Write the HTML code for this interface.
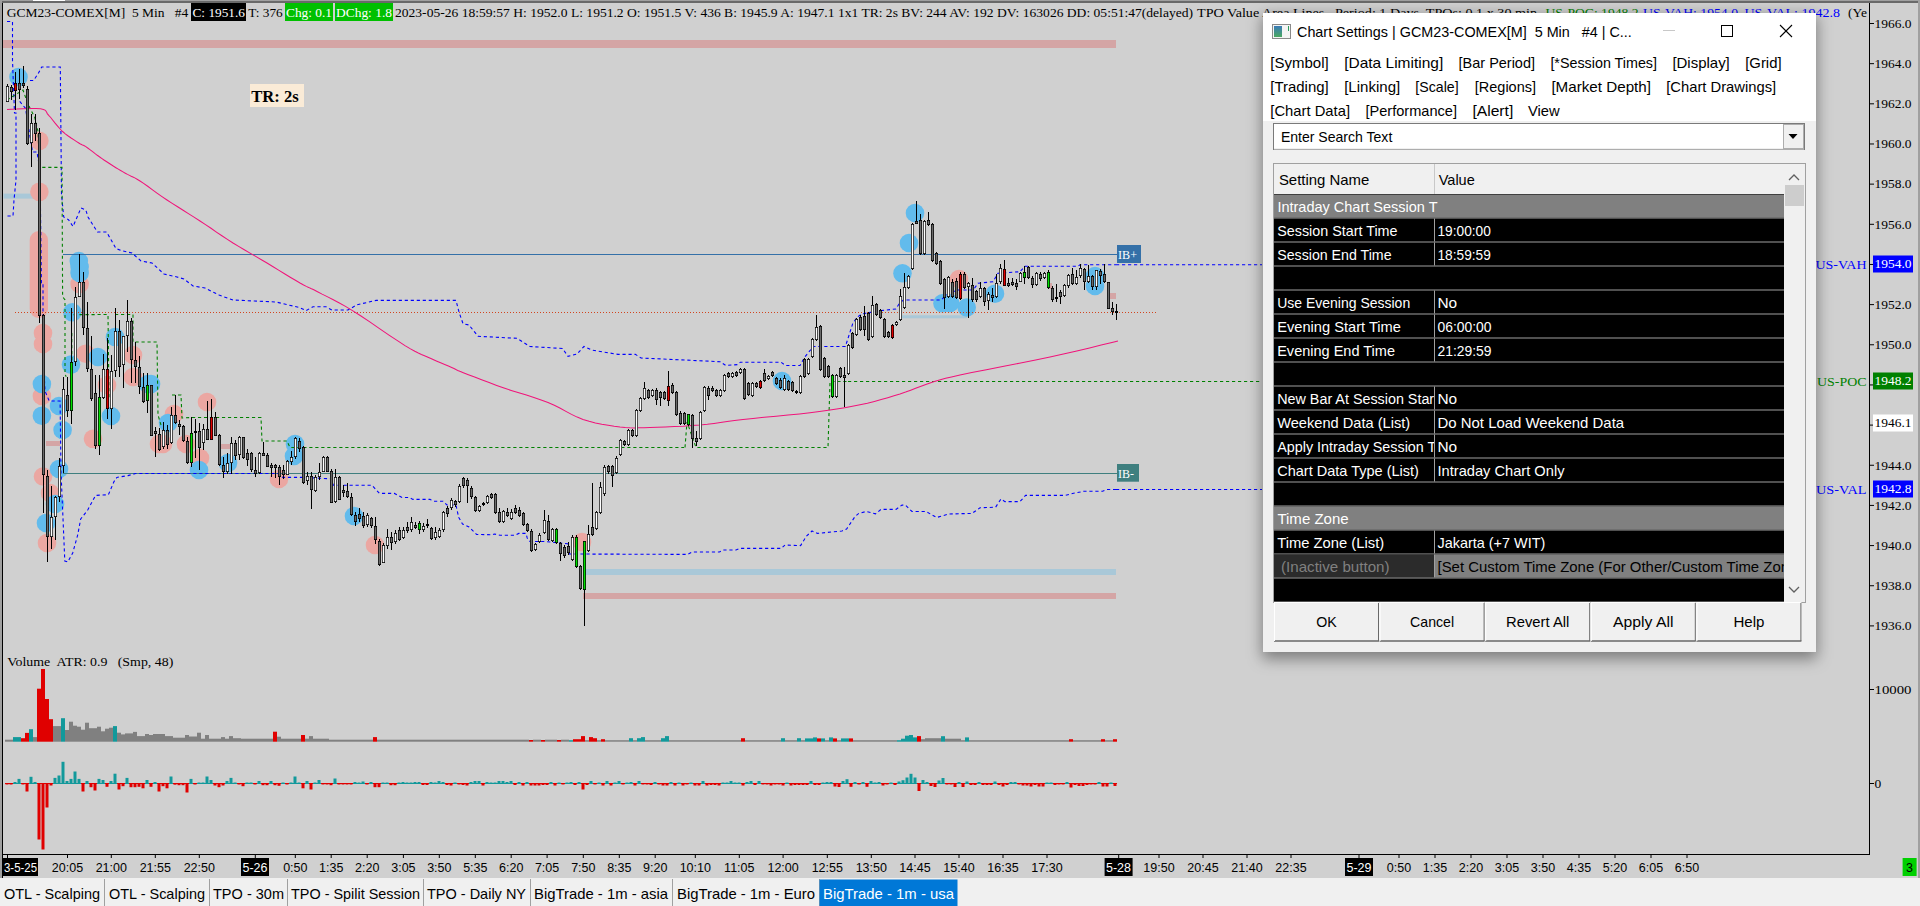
<!DOCTYPE html>
<html><head><meta charset="utf-8"><title>Chart</title>
<style>html,body{margin:0;padding:0;background:#d0d0d0;overflow:hidden;width:1920px;height:906px}</style>
</head><body>
<svg width="1920" height="906" viewBox="0 0 1920 906" style="display:block">
<rect x="0" y="0" width="1920" height="906" fill="#d0d0d0" />
<rect x="0" y="0" width="1920" height="1" fill="#a0a0a0" />
<rect x="0" y="1" width="1920" height="2" fill="#696969" />
<rect x="33" y="0" width="32" height="1" fill="#ffffff" />
<rect x="0" y="0" width="2" height="878" fill="#a0a0a0" />
<rect x="2" y="3" width="1" height="875" fill="#000" />
<rect x="1918" y="0" width="2" height="878" fill="#a0a0a0" />
<rect x="3" y="40" width="1113" height="8" fill="#d4a5a5" />
<rect x="3.5" y="193.6" width="34.5" height="5" fill="#a9c8d8" />
<rect x="583" y="569" width="533" height="6" fill="#a9c8d8" />
<rect x="583" y="593" width="533" height="6" fill="#d4a5a5" />
<rect x="900" y="315.3" width="67" height="3" fill="#a9c8d8" />
<rect x="46" y="441" width="14" height="5" fill="#d4a5a5" />
<rect x="221" y="444" width="9" height="5" fill="#d4a5a5" />
<rect x="1049" y="283" width="3" height="6" fill="#d4a5a5" />
<rect x="1109" y="293" width="7" height="6" fill="#d4a5a5" />
<circle cx="39.4" cy="140.8" r="9.3" fill="#eba7a2"/>
<circle cx="39.4" cy="191.8" r="9.3" fill="#eba7a2"/>
<circle cx="43" cy="333" r="9.3" fill="#eba7a2"/>
<circle cx="43" cy="344" r="9.3" fill="#eba7a2"/>
<circle cx="85.7" cy="353.7" r="9.3" fill="#eba7a2"/>
<circle cx="41.9" cy="396" r="9.3" fill="#eba7a2"/>
<circle cx="93" cy="438.8" r="9.3" fill="#eba7a2"/>
<circle cx="107" cy="385" r="9.3" fill="#eba7a2"/>
<circle cx="133" cy="355" r="9.3" fill="#eba7a2"/>
<circle cx="133" cy="377" r="9.3" fill="#eba7a2"/>
<circle cx="43" cy="476.5" r="9.3" fill="#eba7a2"/>
<circle cx="50" cy="493" r="9.3" fill="#eba7a2"/>
<circle cx="47" cy="543" r="9.3" fill="#eba7a2"/>
<circle cx="159" cy="444" r="9.3" fill="#eba7a2"/>
<circle cx="174" cy="414" r="9.3" fill="#eba7a2"/>
<circle cx="163" cy="444" r="9.3" fill="#eba7a2"/>
<circle cx="186" cy="444" r="9.3" fill="#eba7a2"/>
<circle cx="207" cy="402" r="9.3" fill="#eba7a2"/>
<circle cx="200" cy="458" r="9.3" fill="#eba7a2"/>
<circle cx="279" cy="479" r="9.3" fill="#eba7a2"/>
<circle cx="375" cy="545" r="9.3" fill="#eba7a2"/>
<circle cx="582" cy="542" r="9.3" fill="#eba7a2"/>
<circle cx="959" cy="279" r="9.3" fill="#eba7a2"/>
<circle cx="79.6" cy="284" r="9.3" fill="#eba7a2"/>
<rect x="29.7" y="231" width="18.3" height="87" fill="#eba7a2" rx="9"/>
<circle cx="18.5" cy="77" r="9.3" fill="#62bbec"/>
<circle cx="79.6" cy="267" r="9.3" fill="#62bbec"/>
<circle cx="79.6" cy="273" r="9.3" fill="#62bbec"/>
<circle cx="78.8" cy="261" r="9.3" fill="#62bbec"/>
<circle cx="72.3" cy="312.3" r="9.3" fill="#62bbec"/>
<circle cx="71" cy="364.6" r="9.3" fill="#62bbec"/>
<circle cx="41.9" cy="384" r="9.3" fill="#62bbec"/>
<circle cx="41.9" cy="415.7" r="9.3" fill="#62bbec"/>
<circle cx="62.6" cy="430" r="9.3" fill="#62bbec"/>
<circle cx="59" cy="469" r="9.3" fill="#62bbec"/>
<circle cx="59" cy="406" r="9.3" fill="#62bbec"/>
<circle cx="55" cy="504" r="9.3" fill="#62bbec"/>
<circle cx="46" cy="523" r="9.3" fill="#62bbec"/>
<circle cx="115" cy="337" r="9.3" fill="#62bbec"/>
<circle cx="97.9" cy="357" r="9.3" fill="#62bbec"/>
<circle cx="148" cy="384" r="9.3" fill="#62bbec"/>
<circle cx="111" cy="416" r="9.3" fill="#62bbec"/>
<circle cx="151" cy="384" r="9.3" fill="#62bbec"/>
<circle cx="168" cy="423" r="9.3" fill="#62bbec"/>
<circle cx="199" cy="470" r="9.3" fill="#62bbec"/>
<circle cx="228" cy="463" r="9.3" fill="#62bbec"/>
<circle cx="295" cy="444" r="9.3" fill="#62bbec"/>
<circle cx="294" cy="456" r="9.3" fill="#62bbec"/>
<circle cx="354" cy="516" r="9.3" fill="#62bbec"/>
<circle cx="782" cy="381" r="9.3" fill="#62bbec"/>
<circle cx="915" cy="213" r="9.3" fill="#62bbec"/>
<circle cx="909" cy="243" r="9.3" fill="#62bbec"/>
<circle cx="902.5" cy="273.3" r="9.3" fill="#62bbec"/>
<circle cx="942.5" cy="303.3" r="9.3" fill="#62bbec"/>
<circle cx="966.7" cy="307.5" r="9.3" fill="#62bbec"/>
<circle cx="995" cy="293.7" r="9.3" fill="#62bbec"/>
<circle cx="1095" cy="276" r="9.3" fill="#62bbec"/>
<circle cx="1095" cy="286" r="9.3" fill="#62bbec"/>
<circle cx="950" cy="303" r="9.3" fill="#62bbec"/>
<line x1="63" y1="254.5" x2="1117" y2="254.5" stroke="#3470a8" stroke-width="1" />
<line x1="63" y1="473.5" x2="1117" y2="473.5" stroke="#3f7f7f" stroke-width="1" />
<line x1="15" y1="312.5" x2="1156" y2="312.5" stroke="#d2451e" stroke-width="1" stroke-dasharray="1,2"/>
<line x1="1116" y1="264.7" x2="1262" y2="264.7" stroke="#0000ff" stroke-width="1.1" stroke-dasharray="3.2,2.8"/>
<line x1="1116" y1="489.5" x2="1262" y2="489.5" stroke="#0000ff" stroke-width="1.1" stroke-dasharray="3.2,2.8"/>
<line x1="848" y1="381.5" x2="1262" y2="381.5" stroke="#008000" stroke-width="1.1" stroke-dasharray="3.2,2.8"/>
<polyline points="7,21.5 12.5,21.5 12.5,60 14.5,113 16,113 16,180 14,200 13,216 7,216" fill="none" stroke="#0000ff" stroke-width="1.1" stroke-dasharray="3.2,2.8"/>
<polyline points="30,80.5 33.6,80.5 38.2,73.5 41.7,67 60.3,67 61.5,194 63.7,217 68.4,219.6 73,226.5 81,208 85.8,210 88,217 97.4,232 106.6,232 116,248.6 122.9,251 132,253 141,261 152,263 164,274 177,277 184,279 193,286 205,288 219,295 233,300 276,302 300,307.7 306,310.6 313,306.8 326,306.8 332,310 348,310 357,304.8 376,300.4 456,300.4 459,312 463,323.7 469,325 478,336.3 517,338.3 530,346.5 562.5,348.5 568,356.4 577,354 584,346.5 591.7,350 618,354.4 635.4,354.4 641,358 720,361.7 725.8,365.5 737.5,364.6 740.4,362.2 781,362.2 785.6,365.5 800,365.5 804.6,357.3 813.3,346.5 845.4,346.5 852.7,323.7 857,317.3 861.7,314 879,310.8 895.8,309 899,304 903.3,300 941,300 946.7,295 956.7,290 973.3,290 978,283.3 993,281.7 998,273.3 1020,271.7 1025,266.3 1078,266.3 1080,264.7 1116,264.7" fill="none" stroke="#0000ff" stroke-width="1.1" stroke-dasharray="3.2,2.8"/>
<polyline points="19.7,101.4 25.5,108.3 32.5,152 37,152 40,170 41.4,283 43,283 43,372 44.3,376.8 45,391 49.2,401 60.1,401 61,471.7 64.8,561 67.8,562 72.7,553 77.7,535 80.7,519 87.7,510 95.6,495.4 108.4,494.7 114,481.6 116.9,477.4 128,475.6 135.6,473.5 278,473.5 282.8,477.4 302.5,477.4 330.6,478.75 333.4,485.3 372,485.3 379.4,493.4 394.4,493.4 402,497.5 409.4,497.5 413,499.4 430,499.4 433.8,501.25 443,501.25 447,505 456,505 457,510 458.8,517.5 462.5,524 469,527 476.6,534.4 492.5,534.8 494.4,534 500,535.3 515,535.3 518.8,533.4 526,533.4 527.2,538 530,541.5 545,541.5 567.5,543.75 569.4,554 687.5,554.4 692.2,552 719.4,552 723,550 736,550 740,548.4 781.3,548.4 785,545 800.6,545.6 806.3,536.3 812,531 817.5,533.4 842,531 846.6,529 855,516.6 858.8,513.4 866,511.5 875.6,513.8 881,509.4 896,509.4 902,505 905.6,505.3 912,511.5 926,511.5 936.6,517.5 948.8,514 972,513.4 980,507.8 995.6,507.2 1001,499 1005,501.6 1020,501.6 1025.6,495.4 1065,495.4 1072.5,493.5 1083.8,491.3 1102.5,491.3 1107,489.5 1116,489.5" fill="none" stroke="#0000ff" stroke-width="1.1" stroke-dasharray="3.2,2.8"/>
<polyline points="7,100 23,90 27.8,103.7 34.8,117.6 38,131.5 39.4,167.4 62,167.4 62.6,296.5 65,300 65,374 66.2,376.8" fill="none" stroke="#008000" stroke-width="1.1" stroke-dasharray="3.2,2.8"/>
<polyline points="71.8,333 71.8,374" fill="none" stroke="#008000" stroke-width="1.1" stroke-dasharray="3.2,2.8"/>
<polyline points="73.5,314.7 108,314.5 109,400" fill="none" stroke="#008000" stroke-width="1.1" stroke-dasharray="3.2,2.8"/>
<polyline points="115,314.5 133,314.5 133,342 157,342 158,415 161,425" fill="none" stroke="#008000" stroke-width="1.1" stroke-dasharray="3.2,2.8"/>
<polyline points="172,395 181,395 182,418 191,417.5 261,417.5 262,441 287,441 290,447.5 684,447.5" fill="none" stroke="#008000" stroke-width="1.1" stroke-dasharray="3.2,2.8"/>
<polyline points="685,447.5 687,422 696,447.5 828,447.5 830,381.5 848,381.5" fill="none" stroke="#008000" stroke-width="1.1" stroke-dasharray="3.2,2.8"/>
<polyline points="7.0,109.5 11.0,109.3 16.7,109.1 23.3,108.7 30.0,108.5 36.1,108.5 40.6,108.8 43.4,109.4 45.0,110.1 45.9,111.0 46.5,112.1 47.3,113.6 48.7,115.3 50.7,117.5 52.8,120.2 55.1,123.1 57.6,126.1 60.1,129.0 62.6,131.5 65.3,133.8 68.2,136.0 71.1,138.0 74.0,139.9 76.6,141.6 78.8,143.0 80.4,144.0 81.6,144.5 82.4,144.9 83.3,145.2 84.3,145.7 85.8,146.6 87.7,148.0 89.9,149.6 92.3,151.4 94.8,153.4 97.3,155.3 99.7,157.0 102.0,158.6 104.3,160.2 106.7,161.8 109.0,163.3 111.3,164.8 113.6,166.3 115.9,167.7 118.3,169.1 120.6,170.5 123.0,171.9 125.3,173.2 127.5,174.4 129.5,175.4 131.2,176.3 132.9,177.0 134.8,177.9 137.1,179.2 140.0,181.0 143.6,183.4 147.7,186.3 152.2,189.6 157.0,193.1 162.0,196.6 167.0,200.0 172.2,203.4 177.6,206.8 183.1,210.3 188.8,213.9 194.4,217.4 200.0,221.0 205.5,224.6 211.0,228.3 216.4,232.1 221.9,235.8 227.4,239.4 233.0,243.0 238.6,246.4 244.3,249.8 250.0,253.1 255.7,256.4 261.4,259.7 267.0,263.0 272.7,266.5 278.6,270.1 284.5,273.7 290.2,277.2 295.4,280.3 300.0,283.0 303.6,285.0 306.3,286.4 308.6,287.4 310.9,288.5 313.8,289.8 317.5,291.7 322.1,294.1 327.2,296.6 332.8,299.5 338.9,302.7 345.5,306.4 352.5,310.6 360.6,315.8 369.8,321.9 379.5,328.6 389.0,335.1 397.8,340.9 405.0,345.6 410.5,348.9 414.8,351.3 418.3,353.0 421.4,354.4 424.5,355.7 428.0,357.3 432.0,359.1 436.3,361.0 440.6,362.8 444.7,364.5 448.4,366.1 451.7,367.5 454.0,368.5 455.4,369.2 456.4,369.8 457.7,370.4 459.8,371.3 463.3,372.7 468.4,374.7 474.6,377.1 481.6,379.8 489.1,382.6 496.7,385.4 504.0,388.0 511.2,390.4 518.8,392.8 526.4,395.1 533.9,397.5 541.1,400.0 548.0,402.5 554.3,405.3 560.3,408.3 565.9,411.4 571.5,414.4 577.2,417.1 583.0,419.4 589.1,421.3 595.4,422.9 601.8,424.2 608.1,425.3 614.2,426.3 620.0,427.0 625.2,427.5 629.8,427.8 634.2,427.9 638.8,427.8 643.9,427.7 650.0,427.5 657.3,427.3 665.4,427.0 674.2,426.6 683.1,426.2 691.8,425.6 700.0,425.0 707.3,424.3 714.0,423.4 720.4,422.5 727.1,421.5 734.5,420.4 743.0,419.4 753.0,418.4 764.2,417.3 776.1,416.2 788.0,415.1 799.5,413.9 810.0,412.7 819.4,411.5 828.3,410.3 836.7,409.0 844.7,407.7 852.4,406.3 860.0,404.8 867.4,403.2 874.4,401.4 881.2,399.6 887.8,397.7 894.0,395.8 900.0,394.0 905.6,392.1 910.7,390.2 915.6,388.3 920.4,386.5 925.1,384.7 930.0,383.0 934.3,381.6 937.8,380.5 941.2,379.4 945.6,378.3 951.5,376.9 960.0,375.0 971.8,372.6 986.4,369.7 1002.6,366.5 1019.4,363.2 1035.6,360.0 1050.0,357.0 1063.4,354.0 1076.8,350.9 1089.6,347.9 1101.2,345.1 1110.9,342.7 1118,341" fill="none" stroke="#f0147a" stroke-width="1.05" />
<rect x="7" y="84" width="1" height="18" fill="#000"/>
<rect x="6" y="86" width="3" height="16" fill="#000"/>
<rect x="6.7" y="86.8" width="1.6" height="14.4" fill="#ffffff"/>
<rect x="11" y="85" width="1" height="15" fill="#000"/>
<rect x="10" y="87" width="3" height="5" fill="#000"/>
<rect x="10.7" y="87.8" width="1.6" height="3.4" fill="#6a6a6a"/>
<rect x="15" y="72" width="1" height="38" fill="#000"/>
<rect x="14" y="83" width="3" height="8" fill="#000"/>
<rect x="14.7" y="83.8" width="1.6" height="6.4" fill="#e00000"/>
<rect x="19" y="69" width="1" height="30" fill="#000"/>
<rect x="18" y="83" width="3" height="7" fill="#000"/>
<rect x="18.7" y="83.8" width="1.6" height="5.4" fill="#6a6a6a"/>
<rect x="23" y="66" width="1" height="22" fill="#000"/>
<rect x="22" y="83" width="3" height="3" fill="#000"/>
<rect x="22.7" y="83.8" width="1.6" height="1.4" fill="#6a6a6a"/>
<rect x="27" y="86" width="1" height="59" fill="#000"/>
<rect x="26" y="89" width="3" height="55" fill="#000"/>
<rect x="26.7" y="89.8" width="1.6" height="53.4" fill="#6a6a6a"/>
<rect x="31" y="114" width="1" height="53" fill="#000"/>
<rect x="30" y="123" width="3" height="20" fill="#000"/>
<rect x="30.7" y="123.8" width="1.6" height="18.4" fill="#ffffff"/>
<rect x="35" y="114" width="1" height="27" fill="#000"/>
<rect x="34" y="123" width="3" height="11" fill="#000"/>
<rect x="34.7" y="123.8" width="1.6" height="9.4" fill="#6a6a6a"/>
<rect x="39" y="128" width="1" height="195" fill="#000"/>
<rect x="38" y="133" width="3" height="183" fill="#000"/>
<rect x="38.7" y="133.8" width="1.6" height="181.4" fill="#6a6a6a"/>
<rect x="43" y="314" width="1" height="199" fill="#000"/>
<rect x="42" y="315" width="3" height="160" fill="#000"/>
<rect x="42.7" y="315.8" width="1.6" height="158.4" fill="#6a6a6a"/>
<rect x="47" y="470" width="1" height="92" fill="#000"/>
<rect x="46" y="476" width="3" height="61" fill="#000"/>
<rect x="46.7" y="476.8" width="1.6" height="59.4" fill="#6a6a6a"/>
<rect x="51" y="486" width="1" height="63" fill="#000"/>
<rect x="50" y="517" width="3" height="20" fill="#000"/>
<rect x="50.7" y="517.8" width="1.6" height="18.4" fill="#ffffff"/>
<rect x="55" y="496" width="1" height="44" fill="#000"/>
<rect x="54" y="497" width="3" height="20" fill="#000"/>
<rect x="54.7" y="497.8" width="1.6" height="18.4" fill="#ffffff"/>
<rect x="59" y="458" width="1" height="44" fill="#000"/>
<rect x="58" y="466" width="3" height="31" fill="#000"/>
<rect x="58.7" y="466.8" width="1.6" height="29.4" fill="#ffffff"/>
<rect x="63" y="377" width="1" height="96" fill="#000"/>
<rect x="62" y="389" width="3" height="77" fill="#000"/>
<rect x="62.7" y="389.8" width="1.6" height="75.4" fill="#ffffff"/>
<rect x="67" y="377" width="1" height="40" fill="#000"/>
<rect x="66" y="395" width="3" height="16" fill="#000"/>
<rect x="66.7" y="395.8" width="1.6" height="14.4" fill="#6a6a6a"/>
<rect x="71" y="308" width="1" height="116" fill="#000"/>
<rect x="70" y="362" width="3" height="49" fill="#000"/>
<rect x="70.7" y="362.8" width="1.6" height="47.4" fill="#00e000"/>
<rect x="75" y="287" width="1" height="79" fill="#000"/>
<rect x="74" y="297" width="3" height="65" fill="#000"/>
<rect x="74.7" y="297.8" width="1.6" height="63.4" fill="#ffffff"/>
<rect x="79" y="254" width="1" height="43" fill="#000"/>
<rect x="78" y="282" width="3" height="15" fill="#000"/>
<rect x="78.7" y="282.8" width="1.6" height="13.4" fill="#ffffff"/>
<rect x="83" y="272" width="1" height="63" fill="#000"/>
<rect x="82" y="282" width="3" height="46" fill="#000"/>
<rect x="82.7" y="282.8" width="1.6" height="44.4" fill="#6a6a6a"/>
<rect x="87" y="302" width="1" height="70" fill="#000"/>
<rect x="86" y="328" width="3" height="41" fill="#000"/>
<rect x="86.7" y="328.8" width="1.6" height="39.4" fill="#6a6a6a"/>
<rect x="91" y="336" width="1" height="65" fill="#000"/>
<rect x="90" y="369" width="3" height="30" fill="#000"/>
<rect x="90.7" y="369.8" width="1.6" height="28.4" fill="#6a6a6a"/>
<rect x="95" y="375" width="1" height="74" fill="#000"/>
<rect x="94" y="393" width="3" height="53" fill="#000"/>
<rect x="94.7" y="393.8" width="1.6" height="51.4" fill="#6a6a6a"/>
<rect x="99" y="375" width="1" height="80" fill="#000"/>
<rect x="98" y="397" width="3" height="49" fill="#000"/>
<rect x="98.7" y="397.8" width="1.6" height="47.4" fill="#00e000"/>
<rect x="103" y="354" width="1" height="45" fill="#000"/>
<rect x="102" y="369" width="3" height="29" fill="#000"/>
<rect x="102.7" y="369.8" width="1.6" height="27.4" fill="#ffffff"/>
<rect x="107" y="338" width="1" height="81" fill="#000"/>
<rect x="106" y="369" width="3" height="40" fill="#000"/>
<rect x="106.7" y="369.8" width="1.6" height="38.4" fill="#e00000"/>
<rect x="111" y="355" width="1" height="74" fill="#000"/>
<rect x="110" y="371" width="3" height="38" fill="#000"/>
<rect x="110.7" y="371.8" width="1.6" height="36.4" fill="#ffffff"/>
<rect x="115" y="308" width="1" height="69" fill="#000"/>
<rect x="114" y="331" width="3" height="40" fill="#000"/>
<rect x="114.7" y="331.8" width="1.6" height="38.4" fill="#ffffff"/>
<rect x="119" y="320" width="1" height="57" fill="#000"/>
<rect x="118" y="331" width="3" height="36" fill="#000"/>
<rect x="118.7" y="331.8" width="1.6" height="34.4" fill="#6a6a6a"/>
<rect x="123" y="336" width="1" height="52" fill="#000"/>
<rect x="122" y="336" width="3" height="29" fill="#000"/>
<rect x="122.7" y="336.8" width="1.6" height="27.4" fill="#ffffff"/>
<rect x="127" y="300" width="1" height="52" fill="#000"/>
<rect x="126" y="321" width="3" height="15" fill="#000"/>
<rect x="126.7" y="321.8" width="1.6" height="13.4" fill="#ffffff"/>
<rect x="131" y="318" width="1" height="65" fill="#000"/>
<rect x="130" y="321" width="3" height="39" fill="#000"/>
<rect x="130.7" y="321.8" width="1.6" height="37.4" fill="#6a6a6a"/>
<rect x="135" y="342" width="1" height="41" fill="#000"/>
<rect x="134" y="360" width="3" height="7" fill="#000"/>
<rect x="134.7" y="360.8" width="1.6" height="5.4" fill="#6a6a6a"/>
<rect x="139" y="356" width="1" height="38" fill="#000"/>
<rect x="138" y="367" width="3" height="20" fill="#000"/>
<rect x="138.7" y="367.8" width="1.6" height="18.4" fill="#6a6a6a"/>
<rect x="143" y="373" width="1" height="30" fill="#000"/>
<rect x="142" y="387" width="3" height="15" fill="#000"/>
<rect x="142.7" y="387.8" width="1.6" height="13.4" fill="#6a6a6a"/>
<rect x="147" y="373" width="1" height="40" fill="#000"/>
<rect x="146" y="385" width="3" height="16" fill="#000"/>
<rect x="146.7" y="385.8" width="1.6" height="14.4" fill="#00e000"/>
<rect x="151" y="385" width="1" height="51" fill="#000"/>
<rect x="150" y="385" width="3" height="51" fill="#000"/>
<rect x="150.7" y="385.8" width="1.6" height="49.4" fill="#6a6a6a"/>
<rect x="155" y="427" width="1" height="30" fill="#000"/>
<rect x="154" y="431" width="3" height="3" fill="#000"/>
<rect x="154.7" y="431.8" width="1.6" height="1.4" fill="#6a6a6a"/>
<rect x="159" y="428" width="1" height="23" fill="#000"/>
<rect x="158" y="434" width="3" height="16" fill="#000"/>
<rect x="158.7" y="434.8" width="1.6" height="14.4" fill="#6a6a6a"/>
<rect x="163" y="422" width="1" height="27" fill="#000"/>
<rect x="162" y="430" width="3" height="17" fill="#000"/>
<rect x="162.7" y="430.8" width="1.6" height="15.4" fill="#ffffff"/>
<rect x="167" y="425" width="1" height="24" fill="#000"/>
<rect x="166" y="430" width="3" height="15" fill="#000"/>
<rect x="166.7" y="430.8" width="1.6" height="13.4" fill="#6a6a6a"/>
<rect x="171" y="407" width="1" height="37" fill="#000"/>
<rect x="170" y="415" width="3" height="28" fill="#000"/>
<rect x="170.7" y="415.8" width="1.6" height="26.4" fill="#ffffff"/>
<rect x="175" y="395" width="1" height="29" fill="#000"/>
<rect x="174" y="415" width="3" height="8" fill="#000"/>
<rect x="174.7" y="415.8" width="1.6" height="6.4" fill="#6a6a6a"/>
<rect x="179" y="420" width="1" height="15" fill="#000"/>
<rect x="178" y="424" width="3" height="3" fill="#000"/>
<rect x="178.7" y="424.8" width="1.6" height="1.4" fill="#6a6a6a"/>
<rect x="183" y="425" width="1" height="17" fill="#000"/>
<rect x="182" y="426" width="3" height="15" fill="#000"/>
<rect x="182.7" y="426.8" width="1.6" height="13.4" fill="#6a6a6a"/>
<rect x="187" y="437" width="1" height="27" fill="#000"/>
<rect x="186" y="441" width="3" height="22" fill="#000"/>
<rect x="186.7" y="441.8" width="1.6" height="20.4" fill="#6a6a6a"/>
<rect x="191" y="417" width="1" height="50" fill="#000"/>
<rect x="190" y="433" width="3" height="30" fill="#000"/>
<rect x="190.7" y="433.8" width="1.6" height="28.4" fill="#00e000"/>
<rect x="195" y="419" width="1" height="39" fill="#000"/>
<rect x="194" y="431" width="3" height="2" fill="#000"/>
<rect x="199" y="423" width="1" height="47" fill="#000"/>
<rect x="198" y="431" width="3" height="17" fill="#000"/>
<rect x="198.7" y="431.8" width="1.6" height="15.4" fill="#6a6a6a"/>
<rect x="203" y="424" width="1" height="26" fill="#000"/>
<rect x="202" y="429" width="3" height="14" fill="#000"/>
<rect x="202.7" y="429.8" width="1.6" height="12.4" fill="#ffffff"/>
<rect x="207" y="401" width="1" height="39" fill="#000"/>
<rect x="206" y="429" width="3" height="11" fill="#000"/>
<rect x="206.7" y="429.8" width="1.6" height="9.4" fill="#6a6a6a"/>
<rect x="211" y="399" width="1" height="41" fill="#000"/>
<rect x="210" y="417" width="3" height="23" fill="#000"/>
<rect x="210.7" y="417.8" width="1.6" height="21.4" fill="#e00000"/>
<rect x="215" y="412" width="1" height="24" fill="#000"/>
<rect x="214" y="417" width="3" height="19" fill="#000"/>
<rect x="214.7" y="417.8" width="1.6" height="17.4" fill="#6a6a6a"/>
<rect x="219" y="434" width="1" height="32" fill="#000"/>
<rect x="218" y="435" width="3" height="30" fill="#000"/>
<rect x="218.7" y="435.8" width="1.6" height="28.4" fill="#6a6a6a"/>
<rect x="223" y="457" width="1" height="21" fill="#000"/>
<rect x="222" y="465" width="3" height="7" fill="#000"/>
<rect x="222.7" y="465.8" width="1.6" height="5.4" fill="#6a6a6a"/>
<rect x="227" y="453" width="1" height="21" fill="#000"/>
<rect x="226" y="463" width="3" height="9" fill="#000"/>
<rect x="226.7" y="463.8" width="1.6" height="7.4" fill="#ffffff"/>
<rect x="231" y="437" width="1" height="37" fill="#000"/>
<rect x="230" y="443" width="3" height="20" fill="#000"/>
<rect x="230.7" y="443.8" width="1.6" height="18.4" fill="#ffffff"/>
<rect x="235" y="440" width="1" height="20" fill="#000"/>
<rect x="234" y="443" width="3" height="13" fill="#000"/>
<rect x="234.7" y="443.8" width="1.6" height="11.4" fill="#6a6a6a"/>
<rect x="239" y="436" width="1" height="24" fill="#000"/>
<rect x="238" y="437" width="3" height="18" fill="#000"/>
<rect x="238.7" y="437.8" width="1.6" height="16.4" fill="#ffffff"/>
<rect x="243" y="437" width="1" height="22" fill="#000"/>
<rect x="242" y="437" width="3" height="21" fill="#000"/>
<rect x="242.7" y="437.8" width="1.6" height="19.4" fill="#6a6a6a"/>
<rect x="247" y="449" width="1" height="17" fill="#000"/>
<rect x="246" y="453" width="3" height="7" fill="#000"/>
<rect x="246.7" y="453.8" width="1.6" height="5.4" fill="#6a6a6a"/>
<rect x="251" y="452" width="1" height="20" fill="#000"/>
<rect x="250" y="453" width="3" height="17" fill="#000"/>
<rect x="250.7" y="453.8" width="1.6" height="15.4" fill="#6a6a6a"/>
<rect x="255" y="457" width="1" height="20" fill="#000"/>
<rect x="254" y="470" width="3" height="4" fill="#000"/>
<rect x="254.7" y="470.8" width="1.6" height="2.4" fill="#6a6a6a"/>
<rect x="259" y="452" width="1" height="22" fill="#000"/>
<rect x="258" y="453" width="3" height="20" fill="#000"/>
<rect x="258.7" y="453.8" width="1.6" height="18.4" fill="#ffffff"/>
<rect x="263" y="442" width="1" height="14" fill="#000"/>
<rect x="262" y="453" width="3" height="3" fill="#000"/>
<rect x="262.7" y="453.8" width="1.6" height="1.4" fill="#6a6a6a"/>
<rect x="267" y="453" width="1" height="14" fill="#000"/>
<rect x="266" y="455" width="3" height="12" fill="#000"/>
<rect x="266.7" y="455.8" width="1.6" height="10.4" fill="#6a6a6a"/>
<rect x="271" y="463" width="1" height="14" fill="#000"/>
<rect x="270" y="465" width="3" height="3" fill="#000"/>
<rect x="270.7" y="465.8" width="1.6" height="1.4" fill="#6a6a6a"/>
<rect x="275" y="464" width="1" height="14" fill="#000"/>
<rect x="274" y="465" width="3" height="3" fill="#000"/>
<rect x="274.7" y="465.8" width="1.6" height="1.4" fill="#6a6a6a"/>
<rect x="279" y="465" width="1" height="20" fill="#000"/>
<rect x="278" y="467" width="3" height="10" fill="#000"/>
<rect x="278.7" y="467.8" width="1.6" height="8.4" fill="#6a6a6a"/>
<rect x="283" y="465" width="1" height="14" fill="#000"/>
<rect x="282" y="470" width="3" height="5" fill="#000"/>
<rect x="282.7" y="470.8" width="1.6" height="3.4" fill="#6a6a6a"/>
<rect x="287" y="460" width="1" height="15" fill="#000"/>
<rect x="286" y="461" width="3" height="14" fill="#000"/>
<rect x="286.7" y="461.8" width="1.6" height="12.4" fill="#ffffff"/>
<rect x="291" y="451" width="1" height="14" fill="#000"/>
<rect x="290" y="457" width="3" height="5" fill="#000"/>
<rect x="290.7" y="457.8" width="1.6" height="3.4" fill="#ffffff"/>
<rect x="295" y="437" width="1" height="22" fill="#000"/>
<rect x="294" y="438" width="3" height="19" fill="#000"/>
<rect x="294.7" y="438.8" width="1.6" height="17.4" fill="#ffffff"/>
<rect x="299" y="438" width="1" height="14" fill="#000"/>
<rect x="298" y="441" width="3" height="8" fill="#000"/>
<rect x="298.7" y="441.8" width="1.6" height="6.4" fill="#6a6a6a"/>
<rect x="303" y="446" width="1" height="38" fill="#000"/>
<rect x="302" y="447" width="3" height="36" fill="#000"/>
<rect x="302.7" y="447.8" width="1.6" height="34.4" fill="#6a6a6a"/>
<rect x="307" y="472" width="1" height="13" fill="#000"/>
<rect x="306" y="476" width="3" height="5" fill="#000"/>
<rect x="306.7" y="476.8" width="1.6" height="3.4" fill="#ffffff"/>
<rect x="311" y="472" width="1" height="37" fill="#000"/>
<rect x="310" y="476" width="3" height="14" fill="#000"/>
<rect x="310.7" y="476.8" width="1.6" height="12.4" fill="#6a6a6a"/>
<rect x="315" y="475" width="1" height="17" fill="#000"/>
<rect x="314" y="477" width="3" height="14" fill="#000"/>
<rect x="314.7" y="477.8" width="1.6" height="12.4" fill="#ffffff"/>
<rect x="319" y="463" width="1" height="17" fill="#000"/>
<rect x="318" y="472" width="3" height="5" fill="#000"/>
<rect x="318.7" y="472.8" width="1.6" height="3.4" fill="#ffffff"/>
<rect x="323" y="456" width="1" height="16" fill="#000"/>
<rect x="322" y="457" width="3" height="15" fill="#000"/>
<rect x="322.7" y="457.8" width="1.6" height="13.4" fill="#ffffff"/>
<rect x="327" y="456" width="1" height="16" fill="#000"/>
<rect x="326" y="457" width="3" height="15" fill="#000"/>
<rect x="326.7" y="457.8" width="1.6" height="13.4" fill="#6a6a6a"/>
<rect x="331" y="469" width="1" height="34" fill="#000"/>
<rect x="330" y="471" width="3" height="32" fill="#000"/>
<rect x="330.7" y="471.8" width="1.6" height="30.4" fill="#6a6a6a"/>
<rect x="335" y="469" width="1" height="34" fill="#000"/>
<rect x="334" y="477" width="3" height="25" fill="#000"/>
<rect x="334.7" y="477.8" width="1.6" height="23.4" fill="#ffffff"/>
<rect x="339" y="476" width="1" height="24" fill="#000"/>
<rect x="338" y="477" width="3" height="23" fill="#000"/>
<rect x="338.7" y="477.8" width="1.6" height="21.4" fill="#6a6a6a"/>
<rect x="343" y="485" width="1" height="12" fill="#000"/>
<rect x="342" y="490" width="3" height="3" fill="#000"/>
<rect x="342.7" y="490.8" width="1.6" height="1.4" fill="#6a6a6a"/>
<rect x="347" y="483" width="1" height="15" fill="#000"/>
<rect x="346" y="491" width="3" height="6" fill="#000"/>
<rect x="346.7" y="491.8" width="1.6" height="4.4" fill="#6a6a6a"/>
<rect x="351" y="493" width="1" height="23" fill="#000"/>
<rect x="350" y="497" width="3" height="18" fill="#000"/>
<rect x="350.7" y="497.8" width="1.6" height="16.4" fill="#6a6a6a"/>
<rect x="355" y="512" width="1" height="14" fill="#000"/>
<rect x="354" y="515" width="3" height="7" fill="#000"/>
<rect x="354.7" y="515.8" width="1.6" height="5.4" fill="#6a6a6a"/>
<rect x="359" y="508" width="1" height="14" fill="#000"/>
<rect x="358" y="514" width="3" height="5" fill="#000"/>
<rect x="358.7" y="514.8" width="1.6" height="3.4" fill="#6a6a6a"/>
<rect x="363" y="512" width="1" height="16" fill="#000"/>
<rect x="362" y="516" width="3" height="10" fill="#000"/>
<rect x="362.7" y="516.8" width="1.6" height="8.4" fill="#6a6a6a"/>
<rect x="367" y="513" width="1" height="14" fill="#000"/>
<rect x="366" y="515" width="3" height="10" fill="#000"/>
<rect x="366.7" y="515.8" width="1.6" height="8.4" fill="#ffffff"/>
<rect x="371" y="517" width="1" height="11" fill="#000"/>
<rect x="370" y="518" width="3" height="8" fill="#000"/>
<rect x="370.7" y="518.8" width="1.6" height="6.4" fill="#6a6a6a"/>
<rect x="375" y="517" width="1" height="27" fill="#000"/>
<rect x="374" y="526" width="3" height="14" fill="#000"/>
<rect x="374.7" y="526.8" width="1.6" height="12.4" fill="#6a6a6a"/>
<rect x="379" y="539" width="1" height="27" fill="#000"/>
<rect x="378" y="541" width="3" height="24" fill="#000"/>
<rect x="378.7" y="541.8" width="1.6" height="22.4" fill="#6a6a6a"/>
<rect x="383" y="543" width="1" height="20" fill="#000"/>
<rect x="382" y="545" width="3" height="18" fill="#000"/>
<rect x="382.7" y="545.8" width="1.6" height="16.4" fill="#ffffff"/>
<rect x="387" y="529" width="1" height="20" fill="#000"/>
<rect x="386" y="537" width="3" height="9" fill="#000"/>
<rect x="386.7" y="537.8" width="1.6" height="7.4" fill="#ffffff"/>
<rect x="391" y="532" width="1" height="18" fill="#000"/>
<rect x="390" y="537" width="3" height="6" fill="#000"/>
<rect x="390.7" y="537.8" width="1.6" height="4.4" fill="#6a6a6a"/>
<rect x="395" y="530" width="1" height="14" fill="#000"/>
<rect x="394" y="533" width="3" height="9" fill="#000"/>
<rect x="394.7" y="533.8" width="1.6" height="7.4" fill="#ffffff"/>
<rect x="399" y="527" width="1" height="14" fill="#000"/>
<rect x="398" y="530" width="3" height="10" fill="#000"/>
<rect x="398.7" y="530.8" width="1.6" height="8.4" fill="#6a6a6a"/>
<rect x="403" y="527" width="1" height="12" fill="#000"/>
<rect x="402" y="530" width="3" height="8" fill="#000"/>
<rect x="402.7" y="530.8" width="1.6" height="6.4" fill="#ffffff"/>
<rect x="407" y="522" width="1" height="11" fill="#000"/>
<rect x="406" y="527" width="3" height="4" fill="#000"/>
<rect x="406.7" y="527.8" width="1.6" height="2.4" fill="#6a6a6a"/>
<rect x="411" y="517" width="1" height="15" fill="#000"/>
<rect x="410" y="522" width="3" height="8" fill="#000"/>
<rect x="410.7" y="522.8" width="1.6" height="6.4" fill="#ffffff"/>
<rect x="415" y="522" width="1" height="7" fill="#000"/>
<rect x="414" y="525" width="3" height="3" fill="#000"/>
<rect x="414.7" y="525.8" width="1.6" height="1.4" fill="#6a6a6a"/>
<rect x="419" y="521" width="1" height="13" fill="#000"/>
<rect x="418" y="523" width="3" height="7" fill="#000"/>
<rect x="418.7" y="523.8" width="1.6" height="5.4" fill="#00e000"/>
<rect x="423" y="523" width="1" height="9" fill="#000"/>
<rect x="422" y="526" width="3" height="4" fill="#000"/>
<rect x="422.7" y="526.8" width="1.6" height="2.4" fill="#ffffff"/>
<rect x="427" y="519" width="1" height="9" fill="#000"/>
<rect x="426" y="524" width="3" height="2" fill="#000"/>
<rect x="431" y="527" width="1" height="13" fill="#000"/>
<rect x="430" y="528" width="3" height="11" fill="#000"/>
<rect x="430.7" y="528.8" width="1.6" height="9.4" fill="#6a6a6a"/>
<rect x="435" y="527" width="1" height="13" fill="#000"/>
<rect x="434" y="532" width="3" height="6" fill="#000"/>
<rect x="434.7" y="532.8" width="1.6" height="4.4" fill="#ffffff"/>
<rect x="439" y="528" width="1" height="10" fill="#000"/>
<rect x="438" y="530" width="3" height="7" fill="#000"/>
<rect x="438.7" y="530.8" width="1.6" height="5.4" fill="#ffffff"/>
<rect x="443" y="511" width="1" height="21" fill="#000"/>
<rect x="442" y="512" width="3" height="18" fill="#000"/>
<rect x="442.7" y="512.8" width="1.6" height="16.4" fill="#ffffff"/>
<rect x="447" y="506" width="1" height="11" fill="#000"/>
<rect x="446" y="508" width="3" height="6" fill="#000"/>
<rect x="446.7" y="508.8" width="1.6" height="4.4" fill="#6a6a6a"/>
<rect x="451" y="498" width="1" height="12" fill="#000"/>
<rect x="450" y="500" width="3" height="8" fill="#000"/>
<rect x="450.7" y="500.8" width="1.6" height="6.4" fill="#ffffff"/>
<rect x="455" y="500" width="1" height="7" fill="#000"/>
<rect x="454" y="501" width="3" height="4" fill="#000"/>
<rect x="454.7" y="501.8" width="1.6" height="2.4" fill="#6a6a6a"/>
<rect x="459" y="484" width="1" height="19" fill="#000"/>
<rect x="458" y="486" width="3" height="16" fill="#000"/>
<rect x="458.7" y="486.8" width="1.6" height="14.4" fill="#ffffff"/>
<rect x="463" y="477" width="1" height="11" fill="#000"/>
<rect x="462" y="478" width="3" height="8" fill="#000"/>
<rect x="462.7" y="478.8" width="1.6" height="6.4" fill="#6a6a6a"/>
<rect x="467" y="478" width="1" height="25" fill="#000"/>
<rect x="466" y="480" width="3" height="6" fill="#000"/>
<rect x="466.7" y="480.8" width="1.6" height="4.4" fill="#6a6a6a"/>
<rect x="471" y="486" width="1" height="13" fill="#000"/>
<rect x="470" y="488" width="3" height="9" fill="#000"/>
<rect x="470.7" y="488.8" width="1.6" height="7.4" fill="#6a6a6a"/>
<rect x="475" y="496" width="1" height="16" fill="#000"/>
<rect x="474" y="497" width="3" height="14" fill="#000"/>
<rect x="474.7" y="497.8" width="1.6" height="12.4" fill="#6a6a6a"/>
<rect x="479" y="505" width="1" height="7" fill="#000"/>
<rect x="478" y="506" width="3" height="5" fill="#000"/>
<rect x="478.7" y="506.8" width="1.6" height="3.4" fill="#ffffff"/>
<rect x="483" y="502" width="1" height="4" fill="#000"/>
<rect x="482" y="503" width="3" height="2" fill="#000"/>
<rect x="487" y="495" width="1" height="9" fill="#000"/>
<rect x="486" y="496" width="3" height="7" fill="#000"/>
<rect x="486.7" y="496.8" width="1.6" height="5.4" fill="#ffffff"/>
<rect x="491" y="493" width="1" height="6" fill="#000"/>
<rect x="490" y="494" width="3" height="4" fill="#000"/>
<rect x="490.7" y="494.8" width="1.6" height="2.4" fill="#6a6a6a"/>
<rect x="495" y="493" width="1" height="21" fill="#000"/>
<rect x="494" y="494" width="3" height="19" fill="#000"/>
<rect x="494.7" y="494.8" width="1.6" height="17.4" fill="#6a6a6a"/>
<rect x="499" y="508" width="1" height="15" fill="#000"/>
<rect x="498" y="512" width="3" height="10" fill="#000"/>
<rect x="498.7" y="512.8" width="1.6" height="8.4" fill="#6a6a6a"/>
<rect x="503" y="510" width="1" height="13" fill="#000"/>
<rect x="502" y="511" width="3" height="11" fill="#000"/>
<rect x="502.7" y="511.8" width="1.6" height="9.4" fill="#ffffff"/>
<rect x="507" y="508" width="1" height="9" fill="#000"/>
<rect x="506" y="512" width="3" height="4" fill="#000"/>
<rect x="506.7" y="512.8" width="1.6" height="2.4" fill="#6a6a6a"/>
<rect x="511" y="509" width="1" height="11" fill="#000"/>
<rect x="510" y="512" width="3" height="7" fill="#000"/>
<rect x="510.7" y="512.8" width="1.6" height="5.4" fill="#ffffff"/>
<rect x="515" y="505" width="1" height="9" fill="#000"/>
<rect x="514" y="508" width="3" height="5" fill="#000"/>
<rect x="514.7" y="508.8" width="1.6" height="3.4" fill="#6a6a6a"/>
<rect x="519" y="507" width="1" height="10" fill="#000"/>
<rect x="518" y="510" width="3" height="6" fill="#000"/>
<rect x="518.7" y="510.8" width="1.6" height="4.4" fill="#6a6a6a"/>
<rect x="523" y="512" width="1" height="14" fill="#000"/>
<rect x="522" y="513" width="3" height="12" fill="#000"/>
<rect x="522.7" y="513.8" width="1.6" height="10.4" fill="#6a6a6a"/>
<rect x="527" y="523" width="1" height="9" fill="#000"/>
<rect x="526" y="524" width="3" height="7" fill="#000"/>
<rect x="526.7" y="524.8" width="1.6" height="5.4" fill="#6a6a6a"/>
<rect x="531" y="529" width="1" height="23" fill="#000"/>
<rect x="530" y="531" width="3" height="20" fill="#000"/>
<rect x="530.7" y="531.8" width="1.6" height="18.4" fill="#6a6a6a"/>
<rect x="535" y="543" width="1" height="8" fill="#000"/>
<rect x="534" y="544" width="3" height="6" fill="#000"/>
<rect x="534.7" y="544.8" width="1.6" height="4.4" fill="#ffffff"/>
<rect x="539" y="533" width="1" height="10" fill="#000"/>
<rect x="538" y="535" width="3" height="7" fill="#000"/>
<rect x="538.7" y="535.8" width="1.6" height="5.4" fill="#ffffff"/>
<rect x="544" y="510" width="1" height="24" fill="#000"/>
<rect x="543" y="520" width="3" height="13" fill="#000"/>
<rect x="543.7" y="520.8" width="1.6" height="11.4" fill="#ffffff"/>
<rect x="548" y="515" width="1" height="26" fill="#000"/>
<rect x="547" y="521" width="3" height="19" fill="#000"/>
<rect x="547.7" y="521.8" width="1.6" height="17.4" fill="#6a6a6a"/>
<rect x="552" y="528" width="1" height="14" fill="#000"/>
<rect x="551" y="529" width="3" height="12" fill="#000"/>
<rect x="551.7" y="529.8" width="1.6" height="10.4" fill="#ffffff"/>
<rect x="556" y="528" width="1" height="16" fill="#000"/>
<rect x="555" y="529" width="3" height="14" fill="#000"/>
<rect x="555.7" y="529.8" width="1.6" height="12.4" fill="#00e000"/>
<rect x="560" y="542" width="1" height="19" fill="#000"/>
<rect x="559" y="543" width="3" height="11" fill="#000"/>
<rect x="559.7" y="543.8" width="1.6" height="9.4" fill="#6a6a6a"/>
<rect x="564" y="545" width="1" height="13" fill="#000"/>
<rect x="563" y="547" width="3" height="9" fill="#000"/>
<rect x="563.7" y="547.8" width="1.6" height="7.4" fill="#6a6a6a"/>
<rect x="568" y="542" width="1" height="13" fill="#000"/>
<rect x="567" y="546" width="3" height="7" fill="#000"/>
<rect x="567.7" y="546.8" width="1.6" height="5.4" fill="#6a6a6a"/>
<rect x="572" y="535" width="1" height="26" fill="#000"/>
<rect x="571" y="537" width="3" height="23" fill="#000"/>
<rect x="571.7" y="537.8" width="1.6" height="21.4" fill="#ffffff"/>
<rect x="576" y="535" width="1" height="33" fill="#000"/>
<rect x="575" y="537" width="3" height="30" fill="#000"/>
<rect x="575.7" y="537.8" width="1.6" height="28.4" fill="#00e000"/>
<rect x="580" y="565" width="1" height="25" fill="#000"/>
<rect x="579" y="566" width="3" height="23" fill="#000"/>
<rect x="579.7" y="566.8" width="1.6" height="21.4" fill="#6a6a6a"/>
<rect x="584" y="541" width="1" height="85" fill="#000"/>
<rect x="583" y="541" width="3" height="49" fill="#000"/>
<rect x="583.7" y="541.8" width="1.6" height="47.4" fill="#00e000"/>
<rect x="588" y="525" width="1" height="27" fill="#000"/>
<rect x="587" y="534" width="3" height="17" fill="#000"/>
<rect x="587.7" y="534.8" width="1.6" height="15.4" fill="#ffffff"/>
<rect x="592" y="483" width="1" height="53" fill="#000"/>
<rect x="591" y="527" width="3" height="8" fill="#000"/>
<rect x="591.7" y="527.8" width="1.6" height="6.4" fill="#6a6a6a"/>
<rect x="596" y="511" width="1" height="19" fill="#000"/>
<rect x="595" y="512" width="3" height="17" fill="#000"/>
<rect x="595.7" y="512.8" width="1.6" height="15.4" fill="#ffffff"/>
<rect x="600" y="482" width="1" height="32" fill="#000"/>
<rect x="599" y="487" width="3" height="26" fill="#000"/>
<rect x="599.7" y="487.8" width="1.6" height="24.4" fill="#ffffff"/>
<rect x="604" y="465" width="1" height="31" fill="#000"/>
<rect x="603" y="467" width="3" height="27" fill="#000"/>
<rect x="603.7" y="467.8" width="1.6" height="25.4" fill="#ffffff"/>
<rect x="608" y="465" width="1" height="9" fill="#000"/>
<rect x="607" y="466" width="3" height="6" fill="#000"/>
<rect x="607.7" y="466.8" width="1.6" height="4.4" fill="#6a6a6a"/>
<rect x="612" y="465" width="1" height="22" fill="#000"/>
<rect x="611" y="466" width="3" height="10" fill="#000"/>
<rect x="611.7" y="466.8" width="1.6" height="8.4" fill="#6a6a6a"/>
<rect x="616" y="456" width="1" height="18" fill="#000"/>
<rect x="615" y="458" width="3" height="15" fill="#000"/>
<rect x="615.7" y="458.8" width="1.6" height="13.4" fill="#ffffff"/>
<rect x="620" y="439" width="1" height="17" fill="#000"/>
<rect x="619" y="440" width="3" height="15" fill="#000"/>
<rect x="619.7" y="440.8" width="1.6" height="13.4" fill="#ffffff"/>
<rect x="624" y="440" width="1" height="6" fill="#000"/>
<rect x="623" y="441" width="3" height="4" fill="#000"/>
<rect x="623.7" y="441.8" width="1.6" height="2.4" fill="#6a6a6a"/>
<rect x="628" y="429" width="1" height="17" fill="#000"/>
<rect x="627" y="430" width="3" height="15" fill="#000"/>
<rect x="627.7" y="430.8" width="1.6" height="13.4" fill="#ffffff"/>
<rect x="632" y="429" width="1" height="8" fill="#000"/>
<rect x="631" y="430" width="3" height="6" fill="#000"/>
<rect x="631.7" y="430.8" width="1.6" height="4.4" fill="#6a6a6a"/>
<rect x="636" y="409" width="1" height="28" fill="#000"/>
<rect x="635" y="410" width="3" height="26" fill="#000"/>
<rect x="635.7" y="410.8" width="1.6" height="24.4" fill="#ffffff"/>
<rect x="640" y="397" width="1" height="15" fill="#000"/>
<rect x="639" y="398" width="3" height="13" fill="#000"/>
<rect x="639.7" y="398.8" width="1.6" height="11.4" fill="#ffffff"/>
<rect x="644" y="382" width="1" height="18" fill="#000"/>
<rect x="643" y="388" width="3" height="11" fill="#000"/>
<rect x="643.7" y="388.8" width="1.6" height="9.4" fill="#ffffff"/>
<rect x="648" y="389" width="1" height="10" fill="#000"/>
<rect x="647" y="390" width="3" height="8" fill="#000"/>
<rect x="647.7" y="390.8" width="1.6" height="6.4" fill="#6a6a6a"/>
<rect x="652" y="389" width="1" height="8" fill="#000"/>
<rect x="651" y="390" width="3" height="6" fill="#000"/>
<rect x="651.7" y="390.8" width="1.6" height="4.4" fill="#ffffff"/>
<rect x="656" y="388" width="1" height="17" fill="#000"/>
<rect x="655" y="390" width="3" height="10" fill="#000"/>
<rect x="655.7" y="390.8" width="1.6" height="8.4" fill="#6a6a6a"/>
<rect x="660" y="391" width="1" height="15" fill="#000"/>
<rect x="659" y="392" width="3" height="6" fill="#000"/>
<rect x="659.7" y="392.8" width="1.6" height="4.4" fill="#6a6a6a"/>
<rect x="664" y="391" width="1" height="9" fill="#000"/>
<rect x="663" y="392" width="3" height="7" fill="#000"/>
<rect x="663.7" y="392.8" width="1.6" height="5.4" fill="#6a6a6a"/>
<rect x="668" y="371" width="1" height="35" fill="#000"/>
<rect x="667" y="386" width="3" height="15" fill="#000"/>
<rect x="667.7" y="386.8" width="1.6" height="13.4" fill="#e00000"/>
<rect x="672" y="383" width="1" height="11" fill="#000"/>
<rect x="671" y="385" width="3" height="8" fill="#000"/>
<rect x="671.7" y="385.8" width="1.6" height="6.4" fill="#6a6a6a"/>
<rect x="676" y="391" width="1" height="25" fill="#000"/>
<rect x="675" y="392" width="3" height="23" fill="#000"/>
<rect x="675.7" y="392.8" width="1.6" height="21.4" fill="#6a6a6a"/>
<rect x="680" y="411" width="1" height="14" fill="#000"/>
<rect x="679" y="413" width="3" height="11" fill="#000"/>
<rect x="679.7" y="413.8" width="1.6" height="9.4" fill="#6a6a6a"/>
<rect x="684" y="412" width="1" height="13" fill="#000"/>
<rect x="683" y="413" width="3" height="11" fill="#000"/>
<rect x="683.7" y="413.8" width="1.6" height="9.4" fill="#6a6a6a"/>
<rect x="688" y="414" width="1" height="12" fill="#000"/>
<rect x="687" y="414" width="3" height="11" fill="#000"/>
<rect x="687.7" y="414.8" width="1.6" height="9.4" fill="#00e000"/>
<rect x="692" y="414" width="1" height="34" fill="#000"/>
<rect x="691" y="415" width="3" height="24" fill="#000"/>
<rect x="691.7" y="415.8" width="1.6" height="22.4" fill="#6a6a6a"/>
<rect x="696" y="431" width="1" height="15" fill="#000"/>
<rect x="695" y="438" width="3" height="4" fill="#000"/>
<rect x="695.7" y="438.8" width="1.6" height="2.4" fill="#6a6a6a"/>
<rect x="700" y="411" width="1" height="29" fill="#000"/>
<rect x="699" y="412" width="3" height="27" fill="#000"/>
<rect x="699.7" y="412.8" width="1.6" height="25.4" fill="#ffffff"/>
<rect x="704" y="386" width="1" height="26" fill="#000"/>
<rect x="703" y="387" width="3" height="24" fill="#000"/>
<rect x="703.7" y="387.8" width="1.6" height="22.4" fill="#ffffff"/>
<rect x="708" y="386" width="1" height="14" fill="#000"/>
<rect x="707" y="388" width="3" height="8" fill="#000"/>
<rect x="707.7" y="388.8" width="1.6" height="6.4" fill="#6a6a6a"/>
<rect x="712" y="386" width="1" height="6" fill="#000"/>
<rect x="711" y="388" width="3" height="3" fill="#000"/>
<rect x="711.7" y="388.8" width="1.6" height="1.4" fill="#6a6a6a"/>
<rect x="716" y="389" width="1" height="8" fill="#000"/>
<rect x="715" y="390" width="3" height="6" fill="#000"/>
<rect x="715.7" y="390.8" width="1.6" height="4.4" fill="#6a6a6a"/>
<rect x="720" y="389" width="1" height="8" fill="#000"/>
<rect x="719" y="390" width="3" height="6" fill="#000"/>
<rect x="719.7" y="390.8" width="1.6" height="4.4" fill="#ffffff"/>
<rect x="724" y="374" width="1" height="18" fill="#000"/>
<rect x="723" y="375" width="3" height="16" fill="#000"/>
<rect x="723.7" y="375.8" width="1.6" height="14.4" fill="#ffffff"/>
<rect x="728" y="372" width="1" height="6" fill="#000"/>
<rect x="727" y="373" width="3" height="4" fill="#000"/>
<rect x="727.7" y="373.8" width="1.6" height="2.4" fill="#6a6a6a"/>
<rect x="732" y="372" width="1" height="6" fill="#000"/>
<rect x="731" y="373" width="3" height="4" fill="#000"/>
<rect x="731.7" y="373.8" width="1.6" height="2.4" fill="#ffffff"/>
<rect x="736" y="371" width="1" height="6" fill="#000"/>
<rect x="735" y="372" width="3" height="4" fill="#000"/>
<rect x="735.7" y="372.8" width="1.6" height="2.4" fill="#6a6a6a"/>
<rect x="740" y="368" width="1" height="6" fill="#000"/>
<rect x="739" y="369" width="3" height="4" fill="#000"/>
<rect x="739.7" y="369.8" width="1.6" height="2.4" fill="#ffffff"/>
<rect x="744" y="368" width="1" height="32" fill="#000"/>
<rect x="743" y="369" width="3" height="30" fill="#000"/>
<rect x="743.7" y="369.8" width="1.6" height="28.4" fill="#6a6a6a"/>
<rect x="748" y="382" width="1" height="14" fill="#000"/>
<rect x="747" y="383" width="3" height="12" fill="#000"/>
<rect x="747.7" y="383.8" width="1.6" height="10.4" fill="#6a6a6a"/>
<rect x="752" y="382" width="1" height="15" fill="#000"/>
<rect x="751" y="383" width="3" height="13" fill="#000"/>
<rect x="751.7" y="383.8" width="1.6" height="11.4" fill="#ffffff"/>
<rect x="756" y="382" width="1" height="6" fill="#000"/>
<rect x="755" y="383" width="3" height="4" fill="#000"/>
<rect x="755.7" y="383.8" width="1.6" height="2.4" fill="#6a6a6a"/>
<rect x="760" y="380" width="1" height="9" fill="#000"/>
<rect x="759" y="381" width="3" height="7" fill="#000"/>
<rect x="759.7" y="381.8" width="1.6" height="5.4" fill="#e00000"/>
<rect x="764" y="369" width="1" height="13" fill="#000"/>
<rect x="763" y="373" width="3" height="8" fill="#000"/>
<rect x="763.7" y="373.8" width="1.6" height="6.4" fill="#6a6a6a"/>
<rect x="768" y="375" width="1" height="5" fill="#000"/>
<rect x="767" y="376" width="3" height="3" fill="#000"/>
<rect x="767.7" y="376.8" width="1.6" height="1.4" fill="#ffffff"/>
<rect x="772" y="371" width="1" height="6" fill="#000"/>
<rect x="771" y="372" width="3" height="4" fill="#000"/>
<rect x="771.7" y="372.8" width="1.6" height="2.4" fill="#6a6a6a"/>
<rect x="776" y="377" width="1" height="8" fill="#000"/>
<rect x="775" y="378" width="3" height="6" fill="#000"/>
<rect x="775.7" y="378.8" width="1.6" height="4.4" fill="#6a6a6a"/>
<rect x="780" y="378" width="1" height="11" fill="#000"/>
<rect x="779" y="380" width="3" height="8" fill="#000"/>
<rect x="779.7" y="380.8" width="1.6" height="6.4" fill="#6a6a6a"/>
<rect x="784" y="375" width="1" height="16" fill="#000"/>
<rect x="783" y="378" width="3" height="12" fill="#000"/>
<rect x="783.7" y="378.8" width="1.6" height="10.4" fill="#ffffff"/>
<rect x="788" y="380" width="1" height="11" fill="#000"/>
<rect x="787" y="381" width="3" height="9" fill="#000"/>
<rect x="787.7" y="381.8" width="1.6" height="7.4" fill="#6a6a6a"/>
<rect x="792" y="381" width="1" height="11" fill="#000"/>
<rect x="791" y="382" width="3" height="9" fill="#000"/>
<rect x="791.7" y="382.8" width="1.6" height="7.4" fill="#6a6a6a"/>
<rect x="796" y="390" width="1" height="4" fill="#000"/>
<rect x="795" y="391" width="3" height="2" fill="#000"/>
<rect x="800" y="375" width="1" height="19" fill="#000"/>
<rect x="799" y="376" width="3" height="17" fill="#000"/>
<rect x="799.7" y="376.8" width="1.6" height="15.4" fill="#ffffff"/>
<rect x="804" y="358" width="1" height="20" fill="#000"/>
<rect x="803" y="359" width="3" height="18" fill="#000"/>
<rect x="803.7" y="359.8" width="1.6" height="16.4" fill="#6a6a6a"/>
<rect x="808" y="358" width="1" height="17" fill="#000"/>
<rect x="807" y="359" width="3" height="15" fill="#000"/>
<rect x="807.7" y="359.8" width="1.6" height="13.4" fill="#ffffff"/>
<rect x="812" y="338" width="1" height="20" fill="#000"/>
<rect x="811" y="339" width="3" height="18" fill="#000"/>
<rect x="811.7" y="339.8" width="1.6" height="16.4" fill="#ffffff"/>
<rect x="816" y="315" width="1" height="26" fill="#000"/>
<rect x="815" y="327" width="3" height="13" fill="#000"/>
<rect x="815.7" y="327.8" width="1.6" height="11.4" fill="#ffffff"/>
<rect x="820" y="325" width="1" height="46" fill="#000"/>
<rect x="819" y="326" width="3" height="44" fill="#000"/>
<rect x="819.7" y="326.8" width="1.6" height="42.4" fill="#6a6a6a"/>
<rect x="824" y="357" width="1" height="21" fill="#000"/>
<rect x="823" y="358" width="3" height="19" fill="#000"/>
<rect x="823.7" y="358.8" width="1.6" height="17.4" fill="#6a6a6a"/>
<rect x="828" y="365" width="1" height="13" fill="#000"/>
<rect x="827" y="366" width="3" height="11" fill="#000"/>
<rect x="827.7" y="366.8" width="1.6" height="9.4" fill="#6a6a6a"/>
<rect x="832" y="374" width="1" height="24" fill="#000"/>
<rect x="831" y="375" width="3" height="22" fill="#000"/>
<rect x="831.7" y="375.8" width="1.6" height="20.4" fill="#00e000"/>
<rect x="836" y="374" width="1" height="24" fill="#000"/>
<rect x="835" y="375" width="3" height="22" fill="#000"/>
<rect x="835.7" y="375.8" width="1.6" height="20.4" fill="#ffffff"/>
<rect x="840" y="367" width="1" height="11" fill="#000"/>
<rect x="839" y="368" width="3" height="9" fill="#000"/>
<rect x="839.7" y="368.8" width="1.6" height="7.4" fill="#6a6a6a"/>
<rect x="844" y="367" width="1" height="40" fill="#000"/>
<rect x="843" y="375" width="3" height="3" fill="#000"/>
<rect x="843.7" y="375.8" width="1.6" height="1.4" fill="#6a6a6a"/>
<rect x="848" y="344" width="1" height="31" fill="#000"/>
<rect x="847" y="345" width="3" height="29" fill="#000"/>
<rect x="847.7" y="345.8" width="1.6" height="27.4" fill="#ffffff"/>
<rect x="852" y="332" width="1" height="17" fill="#000"/>
<rect x="851" y="333" width="3" height="15" fill="#000"/>
<rect x="851.7" y="333.8" width="1.6" height="13.4" fill="#6a6a6a"/>
<rect x="856" y="318" width="1" height="18" fill="#000"/>
<rect x="855" y="319" width="3" height="16" fill="#000"/>
<rect x="855.7" y="319.8" width="1.6" height="14.4" fill="#ffffff"/>
<rect x="860" y="315" width="1" height="16" fill="#000"/>
<rect x="859" y="317" width="3" height="13" fill="#000"/>
<rect x="859.7" y="317.8" width="1.6" height="11.4" fill="#6a6a6a"/>
<rect x="864" y="306" width="1" height="30" fill="#000"/>
<rect x="863" y="316" width="3" height="14" fill="#000"/>
<rect x="863.7" y="316.8" width="1.6" height="12.4" fill="#6a6a6a"/>
<rect x="868" y="312" width="1" height="29" fill="#000"/>
<rect x="867" y="313" width="3" height="27" fill="#000"/>
<rect x="867.7" y="313.8" width="1.6" height="25.4" fill="#6a6a6a"/>
<rect x="872" y="296" width="1" height="42" fill="#000"/>
<rect x="871" y="305" width="3" height="32" fill="#000"/>
<rect x="871.7" y="305.8" width="1.6" height="30.4" fill="#ffffff"/>
<rect x="876" y="303" width="1" height="13" fill="#000"/>
<rect x="875" y="304" width="3" height="11" fill="#000"/>
<rect x="875.7" y="304.8" width="1.6" height="9.4" fill="#6a6a6a"/>
<rect x="880" y="309" width="1" height="10" fill="#000"/>
<rect x="879" y="310" width="3" height="8" fill="#000"/>
<rect x="879.7" y="310.8" width="1.6" height="6.4" fill="#6a6a6a"/>
<rect x="884" y="318" width="1" height="20" fill="#000"/>
<rect x="883" y="319" width="3" height="18" fill="#000"/>
<rect x="883.7" y="319.8" width="1.6" height="16.4" fill="#6a6a6a"/>
<rect x="888" y="331" width="1" height="7" fill="#000"/>
<rect x="887" y="332" width="3" height="5" fill="#000"/>
<rect x="887.7" y="332.8" width="1.6" height="3.4" fill="#6a6a6a"/>
<rect x="892" y="324" width="1" height="15" fill="#000"/>
<rect x="891" y="325" width="3" height="13" fill="#000"/>
<rect x="891.7" y="325.8" width="1.6" height="11.4" fill="#e00000"/>
<rect x="896" y="321" width="1" height="5" fill="#000"/>
<rect x="895" y="322" width="3" height="3" fill="#000"/>
<rect x="895.7" y="322.8" width="1.6" height="1.4" fill="#ffffff"/>
<rect x="900" y="289" width="1" height="32" fill="#000"/>
<rect x="899" y="296" width="3" height="24" fill="#000"/>
<rect x="899.7" y="296.8" width="1.6" height="22.4" fill="#ffffff"/>
<rect x="904" y="273" width="1" height="36" fill="#000"/>
<rect x="903" y="287" width="3" height="21" fill="#000"/>
<rect x="903.7" y="287.8" width="1.6" height="19.4" fill="#ffffff"/>
<rect x="908" y="275" width="1" height="14" fill="#000"/>
<rect x="907" y="276" width="3" height="12" fill="#000"/>
<rect x="907.7" y="276.8" width="1.6" height="10.4" fill="#ffffff"/>
<rect x="912" y="223" width="1" height="47" fill="#000"/>
<rect x="911" y="224" width="3" height="45" fill="#000"/>
<rect x="911.7" y="224.8" width="1.6" height="43.4" fill="#ffffff"/>
<rect x="916" y="201" width="1" height="23" fill="#000"/>
<rect x="915" y="221" width="3" height="3" fill="#000"/>
<rect x="915.7" y="221.8" width="1.6" height="1.4" fill="#6a6a6a"/>
<rect x="920" y="214" width="1" height="41" fill="#000"/>
<rect x="919" y="220" width="3" height="34" fill="#000"/>
<rect x="919.7" y="220.8" width="1.6" height="32.4" fill="#6a6a6a"/>
<rect x="924" y="220" width="1" height="35" fill="#000"/>
<rect x="923" y="221" width="3" height="33" fill="#000"/>
<rect x="923.7" y="221.8" width="1.6" height="31.4" fill="#ffffff"/>
<rect x="928" y="212" width="1" height="14" fill="#000"/>
<rect x="927" y="220" width="3" height="5" fill="#000"/>
<rect x="927.7" y="220.8" width="1.6" height="3.4" fill="#6a6a6a"/>
<rect x="932" y="223" width="1" height="39" fill="#000"/>
<rect x="931" y="224" width="3" height="37" fill="#000"/>
<rect x="931.7" y="224.8" width="1.6" height="35.4" fill="#6a6a6a"/>
<rect x="936" y="252" width="1" height="13" fill="#000"/>
<rect x="935" y="253" width="3" height="11" fill="#000"/>
<rect x="935.7" y="253.8" width="1.6" height="9.4" fill="#6a6a6a"/>
<rect x="940" y="260" width="1" height="25" fill="#000"/>
<rect x="939" y="261" width="3" height="23" fill="#000"/>
<rect x="939.7" y="261.8" width="1.6" height="21.4" fill="#6a6a6a"/>
<rect x="944" y="278" width="1" height="31" fill="#000"/>
<rect x="943" y="279" width="3" height="19" fill="#000"/>
<rect x="943.7" y="279.8" width="1.6" height="17.4" fill="#6a6a6a"/>
<rect x="948" y="276" width="1" height="22" fill="#000"/>
<rect x="947" y="277" width="3" height="20" fill="#000"/>
<rect x="947.7" y="277.8" width="1.6" height="18.4" fill="#ffffff"/>
<rect x="952" y="279" width="1" height="19" fill="#000"/>
<rect x="951" y="282" width="3" height="15" fill="#000"/>
<rect x="951.7" y="282.8" width="1.6" height="13.4" fill="#6a6a6a"/>
<rect x="956" y="278" width="1" height="21" fill="#000"/>
<rect x="955" y="281" width="3" height="17" fill="#000"/>
<rect x="955.7" y="281.8" width="1.6" height="15.4" fill="#6a6a6a"/>
<rect x="960" y="272" width="1" height="28" fill="#000"/>
<rect x="959" y="274" width="3" height="25" fill="#000"/>
<rect x="959.7" y="274.8" width="1.6" height="23.4" fill="#e00000"/>
<rect x="964" y="272" width="1" height="17" fill="#000"/>
<rect x="963" y="274" width="3" height="14" fill="#000"/>
<rect x="963.7" y="274.8" width="1.6" height="12.4" fill="#6a6a6a"/>
<rect x="968" y="282" width="1" height="36" fill="#000"/>
<rect x="967" y="283" width="3" height="4" fill="#000"/>
<rect x="967.7" y="283.8" width="1.6" height="2.4" fill="#ffffff"/>
<rect x="972" y="278" width="1" height="24" fill="#000"/>
<rect x="971" y="285" width="3" height="15" fill="#000"/>
<rect x="971.7" y="285.8" width="1.6" height="13.4" fill="#6a6a6a"/>
<rect x="976" y="290" width="1" height="12" fill="#000"/>
<rect x="975" y="291" width="3" height="9" fill="#000"/>
<rect x="975.7" y="291.8" width="1.6" height="7.4" fill="#6a6a6a"/>
<rect x="980" y="282" width="1" height="16" fill="#000"/>
<rect x="979" y="288" width="3" height="9" fill="#000"/>
<rect x="979.7" y="288.8" width="1.6" height="7.4" fill="#ffffff"/>
<rect x="984" y="287" width="1" height="19" fill="#000"/>
<rect x="983" y="288" width="3" height="14" fill="#000"/>
<rect x="983.7" y="288.8" width="1.6" height="12.4" fill="#6a6a6a"/>
<rect x="988" y="292" width="1" height="18" fill="#000"/>
<rect x="987" y="294" width="3" height="7" fill="#000"/>
<rect x="987.7" y="294.8" width="1.6" height="5.4" fill="#ffffff"/>
<rect x="992" y="288" width="1" height="14" fill="#000"/>
<rect x="991" y="295" width="3" height="3" fill="#000"/>
<rect x="991.7" y="295.8" width="1.6" height="1.4" fill="#6a6a6a"/>
<rect x="996" y="274" width="1" height="24" fill="#000"/>
<rect x="995" y="283" width="3" height="14" fill="#000"/>
<rect x="995.7" y="283.8" width="1.6" height="12.4" fill="#ffffff"/>
<rect x="1000" y="264" width="1" height="20" fill="#000"/>
<rect x="999" y="268" width="3" height="14" fill="#000"/>
<rect x="999.7" y="268.8" width="1.6" height="12.4" fill="#ffffff"/>
<rect x="1004" y="260" width="1" height="26" fill="#000"/>
<rect x="1003" y="269" width="3" height="17" fill="#000"/>
<rect x="1003.7" y="269.8" width="1.6" height="15.4" fill="#e00000"/>
<rect x="1008" y="278" width="1" height="9" fill="#000"/>
<rect x="1007" y="283" width="3" height="3" fill="#000"/>
<rect x="1007.7" y="283.8" width="1.6" height="1.4" fill="#6a6a6a"/>
<rect x="1012" y="278" width="1" height="8" fill="#000"/>
<rect x="1011" y="282" width="3" height="3" fill="#000"/>
<rect x="1011.7" y="282.8" width="1.6" height="1.4" fill="#6a6a6a"/>
<rect x="1016" y="279" width="1" height="11" fill="#000"/>
<rect x="1015" y="283" width="3" height="4" fill="#000"/>
<rect x="1015.7" y="283.8" width="1.6" height="2.4" fill="#6a6a6a"/>
<rect x="1020" y="272" width="1" height="10" fill="#000"/>
<rect x="1019" y="273" width="3" height="9" fill="#000"/>
<rect x="1019.7" y="273.8" width="1.6" height="7.4" fill="#ffffff"/>
<rect x="1024" y="266" width="1" height="18" fill="#000"/>
<rect x="1023" y="272" width="3" height="6" fill="#000"/>
<rect x="1023.7" y="272.8" width="1.6" height="4.4" fill="#00e000"/>
<rect x="1028" y="266" width="1" height="13" fill="#000"/>
<rect x="1027" y="267" width="3" height="11" fill="#000"/>
<rect x="1027.7" y="267.8" width="1.6" height="9.4" fill="#6a6a6a"/>
<rect x="1032" y="276" width="1" height="12" fill="#000"/>
<rect x="1031" y="278" width="3" height="7" fill="#000"/>
<rect x="1031.7" y="278.8" width="1.6" height="5.4" fill="#6a6a6a"/>
<rect x="1036" y="272" width="1" height="14" fill="#000"/>
<rect x="1035" y="273" width="3" height="12" fill="#000"/>
<rect x="1035.7" y="273.8" width="1.6" height="10.4" fill="#ffffff"/>
<rect x="1040" y="272" width="1" height="9" fill="#000"/>
<rect x="1039" y="274" width="3" height="5" fill="#000"/>
<rect x="1039.7" y="274.8" width="1.6" height="3.4" fill="#6a6a6a"/>
<rect x="1044" y="272" width="1" height="7" fill="#000"/>
<rect x="1043" y="273" width="3" height="5" fill="#000"/>
<rect x="1043.7" y="273.8" width="1.6" height="3.4" fill="#ffffff"/>
<rect x="1048" y="270" width="1" height="19" fill="#000"/>
<rect x="1047" y="272" width="3" height="16" fill="#000"/>
<rect x="1047.7" y="272.8" width="1.6" height="14.4" fill="#00e000"/>
<rect x="1052" y="286" width="1" height="16" fill="#000"/>
<rect x="1051" y="288" width="3" height="12" fill="#000"/>
<rect x="1051.7" y="288.8" width="1.6" height="10.4" fill="#6a6a6a"/>
<rect x="1056" y="284" width="1" height="18" fill="#000"/>
<rect x="1055" y="297" width="3" height="2" fill="#000"/>
<rect x="1060" y="290" width="1" height="14" fill="#000"/>
<rect x="1059" y="292" width="3" height="5" fill="#000"/>
<rect x="1059.7" y="292.8" width="1.6" height="3.4" fill="#6a6a6a"/>
<rect x="1064" y="284" width="1" height="13" fill="#000"/>
<rect x="1063" y="285" width="3" height="11" fill="#000"/>
<rect x="1063.7" y="285.8" width="1.6" height="9.4" fill="#ffffff"/>
<rect x="1068" y="274" width="1" height="14" fill="#000"/>
<rect x="1067" y="275" width="3" height="11" fill="#000"/>
<rect x="1067.7" y="275.8" width="1.6" height="9.4" fill="#ffffff"/>
<rect x="1072" y="268" width="1" height="17" fill="#000"/>
<rect x="1071" y="274" width="3" height="10" fill="#000"/>
<rect x="1071.7" y="274.8" width="1.6" height="8.4" fill="#6a6a6a"/>
<rect x="1076" y="270" width="1" height="15" fill="#000"/>
<rect x="1075" y="277" width="3" height="7" fill="#000"/>
<rect x="1075.7" y="277.8" width="1.6" height="5.4" fill="#ffffff"/>
<rect x="1080" y="264" width="1" height="14" fill="#000"/>
<rect x="1079" y="268" width="3" height="8" fill="#000"/>
<rect x="1079.7" y="268.8" width="1.6" height="6.4" fill="#ffffff"/>
<rect x="1084" y="268" width="1" height="22" fill="#000"/>
<rect x="1083" y="269" width="3" height="13" fill="#000"/>
<rect x="1083.7" y="269.8" width="1.6" height="11.4" fill="#6a6a6a"/>
<rect x="1088" y="265" width="1" height="18" fill="#000"/>
<rect x="1087" y="276" width="3" height="6" fill="#000"/>
<rect x="1087.7" y="276.8" width="1.6" height="4.4" fill="#ffffff"/>
<rect x="1092" y="275" width="1" height="15" fill="#000"/>
<rect x="1091" y="276" width="3" height="11" fill="#000"/>
<rect x="1091.7" y="276.8" width="1.6" height="9.4" fill="#6a6a6a"/>
<rect x="1096" y="270" width="1" height="20" fill="#000"/>
<rect x="1095" y="270" width="3" height="17" fill="#000"/>
<rect x="1095.7" y="270.8" width="1.6" height="15.4" fill="#ffffff"/>
<rect x="1100" y="269" width="1" height="15" fill="#000"/>
<rect x="1099" y="271" width="3" height="5" fill="#000"/>
<rect x="1099.7" y="271.8" width="1.6" height="3.4" fill="#6a6a6a"/>
<rect x="1104" y="264" width="1" height="19" fill="#000"/>
<rect x="1103" y="274" width="3" height="8" fill="#000"/>
<rect x="1103.7" y="274.8" width="1.6" height="6.4" fill="#6a6a6a"/>
<rect x="1108" y="282" width="1" height="27" fill="#000"/>
<rect x="1107" y="282" width="3" height="27" fill="#000"/>
<rect x="1107.7" y="282.8" width="1.6" height="25.4" fill="#6a6a6a"/>
<rect x="1112" y="302" width="1" height="13" fill="#000"/>
<rect x="1111" y="308" width="3" height="4" fill="#000"/>
<rect x="1111.7" y="308.8" width="1.6" height="2.4" fill="#6a6a6a"/>
<rect x="1116" y="304" width="1" height="16" fill="#000"/>
<rect x="1115" y="311" width="3" height="2" fill="#000"/>
<rect x="1117" y="245" width="24" height="18" fill="#3470a8" />
<text x="1118" y="259.2" font-size="13.5" font-family="'Liberation Serif', serif" fill="#ffffff" textLength="19" lengthAdjust="spacingAndGlyphs"  xml:space="preserve">IB+</text>
<rect x="1117" y="464" width="22" height="17.7" fill="#3f7f7f" />
<text x="1118" y="478" font-size="13.5" font-family="'Liberation Serif', serif" fill="#ffffff" textLength="16" lengthAdjust="spacingAndGlyphs"  xml:space="preserve">IB-</text>
<rect x="250" y="84" width="54" height="23" fill="#faebd7" />
<text x="251.2" y="101.9" font-size="17.5" font-family="'Liberation Serif', serif" fill="#000" textLength="47.5" lengthAdjust="spacingAndGlyphs" font-weight="bold" xml:space="preserve">TR: 2s</text>
<text x="6.7" y="16.8" font-size="13.5" font-family="'Liberation Serif', serif" fill="#000" textLength="181.5" lengthAdjust="spacingAndGlyphs"  xml:space="preserve">GCM23-COMEX[M]  5 Min   #4</text>
<rect x="191" y="3" width="55" height="18" fill="#000" />
<text x="192.5" y="16.8" font-size="13.5" font-family="'Liberation Serif', serif" fill="#fff" textLength="52.5" lengthAdjust="spacingAndGlyphs"  xml:space="preserve">C: 1951.6</text>
<text x="248.3" y="16.8" font-size="13.5" font-family="'Liberation Serif', serif" fill="#000" textLength="34.4" lengthAdjust="spacingAndGlyphs"  xml:space="preserve">T: 376</text>
<rect x="285" y="3" width="48" height="18" fill="#00c000" />
<text x="286" y="16.8" font-size="13.5" font-family="'Liberation Serif', serif" fill="#fff" textLength="46" lengthAdjust="spacingAndGlyphs"  xml:space="preserve">Chg: 0.1</text>
<rect x="335" y="3" width="58" height="18" fill="#00c000" />
<text x="336" y="16.8" font-size="13.5" font-family="'Liberation Serif', serif" fill="#fff" textLength="56" lengthAdjust="spacingAndGlyphs"  xml:space="preserve">DChg: 1.8</text>
<text x="395" y="16.8" font-size="13.5" font-family="'Liberation Serif', serif" fill="#000" textLength="798" lengthAdjust="spacingAndGlyphs"  xml:space="preserve">2023-05-26 18:59:57 H: 1952.0 L: 1951.2 O: 1951.5 V: 436 B: 1945.9 A: 1947.1 1x1 TR: 2s BV: 244 AV: 192 DV: 163026 DD: 05:51:47(delayed)</text>
<text x="1197" y="16.8" font-size="13.5" font-family="'Liberation Serif', serif" fill="#000" textLength="340" lengthAdjust="spacingAndGlyphs"  xml:space="preserve">TPO Value Area Lines   Period: 1 Days  TPOs: 0.1 x 30 min</text>
<text x="1545.5" y="16.8" font-size="13.5" font-family="'Liberation Serif', serif" fill="#008000" textLength="93" lengthAdjust="spacingAndGlyphs"  xml:space="preserve">US-POC: 1948.2</text>
<text x="1643" y="16.8" font-size="13.5" font-family="'Liberation Serif', serif" fill="#0000ff" textLength="95" lengthAdjust="spacingAndGlyphs"  xml:space="preserve">US-VAH: 1954.0</text>
<text x="1744.5" y="16.8" font-size="13.5" font-family="'Liberation Serif', serif" fill="#0000ff" textLength="95.5" lengthAdjust="spacingAndGlyphs"  xml:space="preserve">US-VAL: 1942.8</text>
<text x="1848" y="16.8" font-size="13.5" font-family="'Liberation Serif', serif" fill="#000"  xml:space="preserve">(Ye</text>
<rect x="1869" y="3" width="49" height="18" fill="#d0d0d0" />
<line x1="1869.5" y1="3" x2="1869.5" y2="855" stroke="#000" stroke-width="1" />
<line x1="1870" y1="23.5" x2="1874" y2="23.5" stroke="#000" stroke-width="1" />
<text x="1874.5" y="27.8" font-size="13.5" font-family="'Liberation Serif', serif" fill="#000" textLength="37" lengthAdjust="spacingAndGlyphs"  xml:space="preserve">1966.0</text>
<line x1="1870" y1="63.66" x2="1874" y2="63.66" stroke="#000" stroke-width="1" />
<text x="1874.5" y="67.96" font-size="13.5" font-family="'Liberation Serif', serif" fill="#000" textLength="37" lengthAdjust="spacingAndGlyphs"  xml:space="preserve">1964.0</text>
<line x1="1870" y1="103.82" x2="1874" y2="103.82" stroke="#000" stroke-width="1" />
<text x="1874.5" y="108.11999999999999" font-size="13.5" font-family="'Liberation Serif', serif" fill="#000" textLength="37" lengthAdjust="spacingAndGlyphs"  xml:space="preserve">1962.0</text>
<line x1="1870" y1="143.98" x2="1874" y2="143.98" stroke="#000" stroke-width="1" />
<text x="1874.5" y="148.28" font-size="13.5" font-family="'Liberation Serif', serif" fill="#000" textLength="37" lengthAdjust="spacingAndGlyphs"  xml:space="preserve">1960.0</text>
<line x1="1870" y1="184.14" x2="1874" y2="184.14" stroke="#000" stroke-width="1" />
<text x="1874.5" y="188.44" font-size="13.5" font-family="'Liberation Serif', serif" fill="#000" textLength="37" lengthAdjust="spacingAndGlyphs"  xml:space="preserve">1958.0</text>
<line x1="1870" y1="224.29999999999998" x2="1874" y2="224.29999999999998" stroke="#000" stroke-width="1" />
<text x="1874.5" y="228.6" font-size="13.5" font-family="'Liberation Serif', serif" fill="#000" textLength="37" lengthAdjust="spacingAndGlyphs"  xml:space="preserve">1956.0</text>
<line x1="1870" y1="264.46" x2="1874" y2="264.46" stroke="#000" stroke-width="1" />
<text x="1874.5" y="268.76" font-size="13.5" font-family="'Liberation Serif', serif" fill="#000" textLength="37" lengthAdjust="spacingAndGlyphs"  xml:space="preserve">1954.0</text>
<line x1="1870" y1="304.62" x2="1874" y2="304.62" stroke="#000" stroke-width="1" />
<text x="1874.5" y="308.92" font-size="13.5" font-family="'Liberation Serif', serif" fill="#000" textLength="37" lengthAdjust="spacingAndGlyphs"  xml:space="preserve">1952.0</text>
<line x1="1870" y1="344.78" x2="1874" y2="344.78" stroke="#000" stroke-width="1" />
<text x="1874.5" y="349.08" font-size="13.5" font-family="'Liberation Serif', serif" fill="#000" textLength="37" lengthAdjust="spacingAndGlyphs"  xml:space="preserve">1950.0</text>
<line x1="1870" y1="384.93999999999994" x2="1874" y2="384.93999999999994" stroke="#000" stroke-width="1" />
<text x="1874.5" y="389.23999999999995" font-size="13.5" font-family="'Liberation Serif', serif" fill="#000" textLength="37" lengthAdjust="spacingAndGlyphs"  xml:space="preserve">1948.0</text>
<line x1="1870" y1="425.09999999999997" x2="1874" y2="425.09999999999997" stroke="#000" stroke-width="1" />
<text x="1874.5" y="429.4" font-size="13.5" font-family="'Liberation Serif', serif" fill="#000" textLength="37" lengthAdjust="spacingAndGlyphs"  xml:space="preserve">1946.0</text>
<line x1="1870" y1="465.26" x2="1874" y2="465.26" stroke="#000" stroke-width="1" />
<text x="1874.5" y="469.56" font-size="13.5" font-family="'Liberation Serif', serif" fill="#000" textLength="37" lengthAdjust="spacingAndGlyphs"  xml:space="preserve">1944.0</text>
<line x1="1870" y1="505.41999999999996" x2="1874" y2="505.41999999999996" stroke="#000" stroke-width="1" />
<text x="1874.5" y="509.71999999999997" font-size="13.5" font-family="'Liberation Serif', serif" fill="#000" textLength="37" lengthAdjust="spacingAndGlyphs"  xml:space="preserve">1942.0</text>
<line x1="1870" y1="545.5799999999999" x2="1874" y2="545.5799999999999" stroke="#000" stroke-width="1" />
<text x="1874.5" y="549.8799999999999" font-size="13.5" font-family="'Liberation Serif', serif" fill="#000" textLength="37" lengthAdjust="spacingAndGlyphs"  xml:space="preserve">1940.0</text>
<line x1="1870" y1="585.74" x2="1874" y2="585.74" stroke="#000" stroke-width="1" />
<text x="1874.5" y="590.04" font-size="13.5" font-family="'Liberation Serif', serif" fill="#000" textLength="37" lengthAdjust="spacingAndGlyphs"  xml:space="preserve">1938.0</text>
<line x1="1870" y1="625.9" x2="1874" y2="625.9" stroke="#000" stroke-width="1" />
<text x="1874.5" y="630.1999999999999" font-size="13.5" font-family="'Liberation Serif', serif" fill="#000" textLength="37" lengthAdjust="spacingAndGlyphs"  xml:space="preserve">1936.0</text>
<rect x="1873" y="255.5" width="40" height="17" fill="#0000ff" />
<text x="1874.5" y="268.3" font-size="13.5" font-family="'Liberation Serif', serif" fill="#fff" textLength="37" lengthAdjust="spacingAndGlyphs"  xml:space="preserve">1954.0</text>
<rect x="1873" y="372.5" width="40" height="17" fill="#008000" />
<text x="1874.5" y="385.3" font-size="13.5" font-family="'Liberation Serif', serif" fill="#fff" textLength="37" lengthAdjust="spacingAndGlyphs"  xml:space="preserve">1948.2</text>
<rect x="1873" y="414.5" width="40" height="17" fill="#ffffff" />
<text x="1874.5" y="427.3" font-size="13.5" font-family="'Liberation Serif', serif" fill="#000" textLength="37" lengthAdjust="spacingAndGlyphs"  xml:space="preserve">1946.1</text>
<rect x="1873" y="480.5" width="40" height="17" fill="#0000ff" />
<text x="1874.5" y="493.3" font-size="13.5" font-family="'Liberation Serif', serif" fill="#fff" textLength="37" lengthAdjust="spacingAndGlyphs"  xml:space="preserve">1942.8</text>
<text x="1815.5" y="268.5" font-size="13.5" font-family="'Liberation Serif', serif" fill="#0000ff" textLength="51" lengthAdjust="spacingAndGlyphs"  xml:space="preserve">US-VAH</text>
<text x="1817" y="386" font-size="13.5" font-family="'Liberation Serif', serif" fill="#008000" textLength="49.5" lengthAdjust="spacingAndGlyphs"  xml:space="preserve">US-POC</text>
<text x="1816" y="494" font-size="13.5" font-family="'Liberation Serif', serif" fill="#0000ff" textLength="50.5" lengthAdjust="spacingAndGlyphs"  xml:space="preserve">US-VAL</text>
<line x1="1870" y1="689.5" x2="1874" y2="689.5" stroke="#000" stroke-width="1" />
<text x="1874.5" y="694" font-size="13.5" font-family="'Liberation Serif', serif" fill="#000" textLength="37" lengthAdjust="spacingAndGlyphs"  xml:space="preserve">10000</text>
<line x1="1870" y1="783.5" x2="1874" y2="783.5" stroke="#000" stroke-width="1" />
<text x="1874.5" y="788" font-size="13.5" font-family="'Liberation Serif', serif" fill="#000"  xml:space="preserve">0</text>
<text x="7.3" y="665.5" font-size="13.5" font-family="'Liberation Serif', serif" fill="#000" textLength="166" lengthAdjust="spacingAndGlyphs"  xml:space="preserve">Volume  ATR: 0.9   (Smp, 48)</text>
<rect x="5.0" y="739.7" width="4" height="2.0" fill="#808080" />
<rect x="9.0" y="739.7" width="4" height="2.0" fill="#808080" />
<rect x="13.0" y="737.1" width="4" height="4.6" fill="#12999b" />
<rect x="17.0" y="737.1" width="4" height="4.6" fill="#12999b" />
<rect x="21.0" y="738.2" width="4" height="3.5" fill="#e00000" />
<rect x="25.0" y="732.9" width="4" height="8.8" fill="#e00000" />
<rect x="29.0" y="729.2" width="4" height="12.5" fill="#12999b" />
<rect x="33.0" y="737.1" width="4" height="4.6" fill="#808080" />
<rect x="37.0" y="688.7" width="4" height="53.0" fill="#e00000" />
<rect x="41.0" y="669.0" width="4" height="72.7" fill="#e00000" />
<rect x="45.0" y="699.0" width="4" height="42.7" fill="#e00000" />
<rect x="49.0" y="719.2" width="4" height="22.5" fill="#e00000" />
<rect x="53.0" y="726.1" width="4" height="15.6" fill="#808080" />
<rect x="57.0" y="726.1" width="4" height="15.6" fill="#808080" />
<rect x="61.0" y="718.2" width="4" height="23.5" fill="#12999b" />
<rect x="65.0" y="730.0" width="4" height="11.7" fill="#808080" />
<rect x="69.0" y="721.7" width="4" height="20.0" fill="#808080" />
<rect x="73.0" y="725.7" width="4" height="16.0" fill="#808080" />
<rect x="77.0" y="726.7" width="4" height="15.0" fill="#808080" />
<rect x="81.0" y="729.7" width="4" height="12.0" fill="#808080" />
<rect x="85.0" y="722.7" width="4" height="19.0" fill="#808080" />
<rect x="89.0" y="728.2" width="4" height="13.5" fill="#808080" />
<rect x="93.0" y="728.2" width="4" height="13.5" fill="#808080" />
<rect x="97.0" y="726.7" width="4" height="15.0" fill="#808080" />
<rect x="101.0" y="731.3" width="4" height="10.4" fill="#808080" />
<rect x="105.0" y="728.7" width="4" height="13.0" fill="#808080" />
<rect x="109.0" y="727.7" width="4" height="14.0" fill="#808080" />
<rect x="113.0" y="726.1" width="4" height="15.6" fill="#12999b" />
<rect x="117.0" y="732.7" width="4" height="9.0" fill="#808080" />
<rect x="121.0" y="734.4" width="4" height="7.3" fill="#808080" />
<rect x="125.0" y="733.4" width="4" height="8.3" fill="#808080" />
<rect x="129.0" y="733.4" width="4" height="8.3" fill="#808080" />
<rect x="133.0" y="731.9" width="4" height="9.8" fill="#808080" />
<rect x="137.0" y="736.1" width="4" height="5.6" fill="#808080" />
<rect x="141.0" y="736.1" width="4" height="5.6" fill="#808080" />
<rect x="145.0" y="734.0" width="4" height="7.7" fill="#808080" />
<rect x="149.0" y="735.0" width="4" height="6.7" fill="#808080" />
<rect x="153.0" y="734.0" width="4" height="7.7" fill="#808080" />
<rect x="157.0" y="734.0" width="4" height="7.7" fill="#808080" />
<rect x="161.0" y="734.0" width="4" height="7.7" fill="#808080" />
<rect x="165.0" y="736.1" width="4" height="5.6" fill="#808080" />
<rect x="169.0" y="736.1" width="4" height="5.6" fill="#808080" />
<rect x="173.0" y="737.7" width="4" height="4.0" fill="#808080" />
<rect x="177.0" y="737.7" width="4" height="4.0" fill="#808080" />
<rect x="181.0" y="737.7" width="4" height="4.0" fill="#808080" />
<rect x="185.0" y="735.0" width="4" height="6.7" fill="#808080" />
<rect x="189.0" y="736.5" width="4" height="5.2" fill="#808080" />
<rect x="193.0" y="736.5" width="4" height="5.2" fill="#808080" />
<rect x="197.0" y="732.7" width="4" height="9.0" fill="#808080" />
<rect x="201.0" y="738.7" width="4" height="3.0" fill="#808080" />
<rect x="205.0" y="735.0" width="4" height="6.7" fill="#808080" />
<rect x="209.0" y="738.7" width="4" height="3.0" fill="#808080" />
<rect x="213.0" y="738.7" width="4" height="3.0" fill="#808080" />
<rect x="217.0" y="738.7" width="4" height="3.0" fill="#808080" />
<rect x="221.0" y="737.1" width="4" height="4.6" fill="#808080" />
<rect x="225.0" y="738.7" width="4" height="3.0" fill="#808080" />
<rect x="229.0" y="736.1" width="4" height="5.6" fill="#808080" />
<rect x="233.0" y="738.2" width="4" height="3.5" fill="#808080" />
<rect x="237.0" y="738.2" width="4" height="3.5" fill="#808080" />
<rect x="241.0" y="738.7" width="4" height="3.0" fill="#808080" />
<rect x="245.0" y="738.7" width="4" height="3.0" fill="#808080" />
<rect x="249.0" y="738.7" width="4" height="3.0" fill="#808080" />
<rect x="253.0" y="738.7" width="4" height="3.0" fill="#808080" />
<rect x="257.0" y="738.7" width="4" height="3.0" fill="#808080" />
<rect x="261.0" y="738.7" width="4" height="3.0" fill="#808080" />
<rect x="265.0" y="738.7" width="4" height="3.0" fill="#808080" />
<rect x="269.0" y="738.7" width="4" height="3.0" fill="#808080" />
<rect x="273.0" y="731.7" width="4" height="10.0" fill="#e00000" />
<rect x="277.0" y="736.7" width="4" height="5.0" fill="#808080" />
<rect x="281.0" y="738.7" width="4" height="3.0" fill="#808080" />
<rect x="285.0" y="738.7" width="4" height="3.0" fill="#808080" />
<rect x="289.0" y="738.7" width="4" height="3.0" fill="#808080" />
<rect x="293.0" y="738.7" width="4" height="3.0" fill="#808080" />
<rect x="297.0" y="738.7" width="4" height="3.0" fill="#808080" />
<rect x="301.0" y="735.0" width="4" height="6.7" fill="#e00000" />
<rect x="305.0" y="738.7" width="4" height="3.0" fill="#808080" />
<rect x="309.0" y="736.1" width="4" height="5.6" fill="#808080" />
<rect x="313.0" y="738.7" width="4" height="3.0" fill="#808080" />
<rect x="317.0" y="738.7" width="4" height="3.0" fill="#808080" />
<rect x="321.0" y="738.7" width="4" height="3.0" fill="#808080" />
<rect x="325.0" y="738.7" width="4" height="3.0" fill="#808080" />
<rect x="329.0" y="739.7" width="4" height="2.0" fill="#808080" />
<rect x="333.0" y="739.7" width="4" height="2.0" fill="#808080" />
<rect x="337.0" y="739.7" width="4" height="2.0" fill="#808080" />
<rect x="341.0" y="739.7" width="4" height="2.0" fill="#808080" />
<rect x="345.0" y="739.7" width="4" height="2.0" fill="#808080" />
<rect x="349.0" y="739.7" width="4" height="2.0" fill="#808080" />
<rect x="353.0" y="739.7" width="4" height="2.0" fill="#808080" />
<rect x="357.0" y="739.7" width="4" height="2.0" fill="#808080" />
<rect x="361.0" y="739.7" width="4" height="2.0" fill="#808080" />
<rect x="365.0" y="739.7" width="4" height="2.0" fill="#808080" />
<rect x="369.0" y="739.7" width="4" height="2.0" fill="#808080" />
<rect x="373.0" y="737.1" width="4" height="4.6" fill="#e00000" />
<rect x="377.0" y="739.7" width="4" height="2.0" fill="#808080" />
<rect x="381.0" y="739.7" width="4" height="2.0" fill="#808080" />
<rect x="385.0" y="739.7" width="4" height="2.0" fill="#808080" />
<rect x="389.0" y="739.7" width="4" height="2.0" fill="#808080" />
<rect x="393.0" y="739.7" width="4" height="2.0" fill="#808080" />
<rect x="397.0" y="739.7" width="4" height="2.0" fill="#808080" />
<rect x="401.0" y="739.7" width="4" height="2.0" fill="#808080" />
<rect x="405.0" y="739.7" width="4" height="2.0" fill="#808080" />
<rect x="409.0" y="739.7" width="4" height="2.0" fill="#808080" />
<rect x="413.0" y="739.7" width="4" height="2.0" fill="#808080" />
<rect x="417.0" y="739.7" width="4" height="2.0" fill="#808080" />
<rect x="421.0" y="739.7" width="4" height="2.0" fill="#808080" />
<rect x="425.0" y="739.7" width="4" height="2.0" fill="#808080" />
<rect x="429.0" y="739.7" width="4" height="2.0" fill="#808080" />
<rect x="433.0" y="739.7" width="4" height="2.0" fill="#808080" />
<rect x="437.0" y="739.7" width="4" height="2.0" fill="#808080" />
<rect x="441.0" y="739.7" width="4" height="2.0" fill="#808080" />
<rect x="445.0" y="739.7" width="4" height="2.0" fill="#808080" />
<rect x="449.0" y="739.7" width="4" height="2.0" fill="#808080" />
<rect x="453.0" y="739.7" width="4" height="2.0" fill="#808080" />
<rect x="457.0" y="739.7" width="4" height="2.0" fill="#808080" />
<rect x="461.0" y="739.7" width="4" height="2.0" fill="#808080" />
<rect x="465.0" y="739.7" width="4" height="2.0" fill="#808080" />
<rect x="469.0" y="739.7" width="4" height="2.0" fill="#808080" />
<rect x="473.0" y="739.7" width="4" height="2.0" fill="#808080" />
<rect x="477.0" y="739.7" width="4" height="2.0" fill="#808080" />
<rect x="481.0" y="739.7" width="4" height="2.0" fill="#808080" />
<rect x="485.0" y="739.7" width="4" height="2.0" fill="#808080" />
<rect x="489.0" y="739.7" width="4" height="2.0" fill="#808080" />
<rect x="493.0" y="739.7" width="4" height="2.0" fill="#808080" />
<rect x="497.0" y="739.7" width="4" height="2.0" fill="#808080" />
<rect x="501.0" y="739.7" width="4" height="2.0" fill="#808080" />
<rect x="505.0" y="739.7" width="4" height="2.0" fill="#808080" />
<rect x="509.0" y="739.7" width="4" height="2.0" fill="#808080" />
<rect x="513.0" y="739.7" width="4" height="2.0" fill="#808080" />
<rect x="517.0" y="739.7" width="4" height="2.0" fill="#808080" />
<rect x="521.0" y="739.7" width="4" height="2.0" fill="#808080" />
<rect x="525.0" y="739.7" width="4" height="2.0" fill="#808080" />
<rect x="529.0" y="740.0" width="4" height="1.7" fill="#e00000" />
<rect x="533.0" y="739.7" width="4" height="2.0" fill="#808080" />
<rect x="537.0" y="739.7" width="4" height="2.0" fill="#808080" />
<rect x="541.0" y="740.0" width="4" height="1.7" fill="#e00000" />
<rect x="545.0" y="739.7" width="4" height="2.0" fill="#808080" />
<rect x="549.0" y="739.7" width="4" height="2.0" fill="#808080" />
<rect x="553.0" y="739.7" width="4" height="2.0" fill="#808080" />
<rect x="557.0" y="740.0" width="4" height="1.7" fill="#e00000" />
<rect x="561.0" y="739.7" width="4" height="2.0" fill="#808080" />
<rect x="565.0" y="739.7" width="4" height="2.0" fill="#808080" />
<rect x="569.0" y="740.2" width="4" height="1.5" fill="#12999b" />
<rect x="573.0" y="739.2" width="4" height="2.5" fill="#e00000" />
<rect x="577.0" y="739.2" width="4" height="2.5" fill="#e00000" />
<rect x="581.0" y="736.1" width="4" height="5.6" fill="#e00000" />
<rect x="585.0" y="740.2" width="4" height="1.5" fill="#808080" />
<rect x="589.0" y="737.1" width="4" height="4.6" fill="#e00000" />
<rect x="593.0" y="738.2" width="4" height="3.5" fill="#e00000" />
<rect x="597.0" y="740.2" width="4" height="1.5" fill="#808080" />
<rect x="601.0" y="739.2" width="4" height="2.5" fill="#e00000" />
<rect x="605.0" y="740.2" width="4" height="1.5" fill="#808080" />
<rect x="609.0" y="740.2" width="4" height="1.5" fill="#808080" />
<rect x="613.0" y="740.2" width="4" height="1.5" fill="#808080" />
<rect x="617.0" y="740.2" width="4" height="1.5" fill="#808080" />
<rect x="621.0" y="740.2" width="4" height="1.5" fill="#808080" />
<rect x="625.0" y="740.2" width="4" height="1.5" fill="#808080" />
<rect x="629.0" y="738.2" width="4" height="3.5" fill="#12999b" />
<rect x="633.0" y="740.2" width="4" height="1.5" fill="#808080" />
<rect x="637.0" y="738.2" width="4" height="3.5" fill="#12999b" />
<rect x="641.0" y="737.1" width="4" height="4.6" fill="#12999b" />
<rect x="645.0" y="740.2" width="4" height="1.5" fill="#808080" />
<rect x="649.0" y="740.2" width="4" height="1.5" fill="#808080" />
<rect x="653.0" y="740.2" width="4" height="1.5" fill="#808080" />
<rect x="657.0" y="740.2" width="4" height="1.5" fill="#808080" />
<rect x="661.0" y="738.2" width="4" height="3.5" fill="#12999b" />
<rect x="665.0" y="736.1" width="4" height="5.6" fill="#12999b" />
<rect x="669.0" y="740.2" width="4" height="1.5" fill="#808080" />
<rect x="673.0" y="740.2" width="4" height="1.5" fill="#808080" />
<rect x="677.0" y="740.2" width="4" height="1.5" fill="#808080" />
<rect x="681.0" y="740.2" width="4" height="1.5" fill="#808080" />
<rect x="685.0" y="740.2" width="4" height="1.5" fill="#808080" />
<rect x="689.0" y="740.2" width="4" height="1.5" fill="#808080" />
<rect x="693.0" y="740.2" width="4" height="1.5" fill="#808080" />
<rect x="697.0" y="740.2" width="4" height="1.5" fill="#808080" />
<rect x="701.0" y="740.2" width="4" height="1.5" fill="#808080" />
<rect x="705.0" y="740.2" width="4" height="1.5" fill="#808080" />
<rect x="709.0" y="740.2" width="4" height="1.5" fill="#808080" />
<rect x="713.0" y="740.2" width="4" height="1.5" fill="#808080" />
<rect x="717.0" y="740.2" width="4" height="1.5" fill="#808080" />
<rect x="721.0" y="740.2" width="4" height="1.5" fill="#808080" />
<rect x="725.0" y="740.2" width="4" height="1.5" fill="#808080" />
<rect x="729.0" y="740.2" width="4" height="1.5" fill="#808080" />
<rect x="733.0" y="740.2" width="4" height="1.5" fill="#808080" />
<rect x="737.0" y="740.2" width="4" height="1.5" fill="#808080" />
<rect x="741.0" y="738.2" width="4" height="3.5" fill="#e00000" />
<rect x="745.0" y="740.2" width="4" height="1.5" fill="#808080" />
<rect x="749.0" y="740.2" width="4" height="1.5" fill="#808080" />
<rect x="753.0" y="740.2" width="4" height="1.5" fill="#808080" />
<rect x="757.0" y="740.2" width="4" height="1.5" fill="#808080" />
<rect x="761.0" y="740.2" width="4" height="1.5" fill="#808080" />
<rect x="765.0" y="740.2" width="4" height="1.5" fill="#808080" />
<rect x="769.0" y="740.2" width="4" height="1.5" fill="#808080" />
<rect x="773.0" y="740.2" width="4" height="1.5" fill="#808080" />
<rect x="777.0" y="740.2" width="4" height="1.5" fill="#808080" />
<rect x="781.0" y="738.2" width="4" height="3.5" fill="#12999b" />
<rect x="785.0" y="740.2" width="4" height="1.5" fill="#808080" />
<rect x="789.0" y="740.2" width="4" height="1.5" fill="#808080" />
<rect x="793.0" y="740.2" width="4" height="1.5" fill="#808080" />
<rect x="797.0" y="738.2" width="4" height="3.5" fill="#12999b" />
<rect x="801.0" y="740.2" width="4" height="1.5" fill="#808080" />
<rect x="805.0" y="738.4" width="4" height="3.3" fill="#12999b" />
<rect x="809.0" y="738.4" width="4" height="3.3" fill="#12999b" />
<rect x="813.0" y="737.4" width="4" height="4.3" fill="#12999b" />
<rect x="817.0" y="738.4" width="4" height="3.3" fill="#e00000" />
<rect x="821.0" y="738.4" width="4" height="3.3" fill="#12999b" />
<rect x="825.0" y="740.2" width="4" height="1.5" fill="#808080" />
<rect x="829.0" y="737.4" width="4" height="4.3" fill="#12999b" />
<rect x="833.0" y="738.4" width="4" height="3.3" fill="#e00000" />
<rect x="837.0" y="740.2" width="4" height="1.5" fill="#808080" />
<rect x="841.0" y="738.4" width="4" height="3.3" fill="#12999b" />
<rect x="845.0" y="738.4" width="4" height="3.3" fill="#12999b" />
<rect x="849.0" y="738.4" width="4" height="3.3" fill="#e00000" />
<rect x="853.0" y="740.2" width="4" height="1.5" fill="#808080" />
<rect x="857.0" y="740.2" width="4" height="1.5" fill="#808080" />
<rect x="861.0" y="740.2" width="4" height="1.5" fill="#808080" />
<rect x="865.0" y="740.2" width="4" height="1.5" fill="#808080" />
<rect x="869.0" y="740.2" width="4" height="1.5" fill="#808080" />
<rect x="873.0" y="740.2" width="4" height="1.5" fill="#808080" />
<rect x="877.0" y="740.2" width="4" height="1.5" fill="#808080" />
<rect x="881.0" y="740.2" width="4" height="1.5" fill="#808080" />
<rect x="885.0" y="740.2" width="4" height="1.5" fill="#808080" />
<rect x="889.0" y="740.2" width="4" height="1.5" fill="#808080" />
<rect x="893.0" y="740.2" width="4" height="1.5" fill="#808080" />
<rect x="897.0" y="740.2" width="4" height="1.5" fill="#12999b" />
<rect x="901.0" y="738.7" width="4" height="3.0" fill="#12999b" />
<rect x="905.0" y="735.7" width="4" height="6.0" fill="#12999b" />
<rect x="909.0" y="735.0" width="4" height="6.7" fill="#12999b" />
<rect x="913.0" y="737.4" width="4" height="4.3" fill="#12999b" />
<rect x="917.0" y="736.1" width="4" height="5.6" fill="#e00000" />
<rect x="921.0" y="739.2" width="4" height="2.5" fill="#808080" />
<rect x="925.0" y="738.2" width="4" height="3.5" fill="#808080" />
<rect x="929.0" y="738.2" width="4" height="3.5" fill="#808080" />
<rect x="933.0" y="738.2" width="4" height="3.5" fill="#808080" />
<rect x="937.0" y="738.2" width="4" height="3.5" fill="#808080" />
<rect x="941.0" y="736.2" width="4" height="5.5" fill="#12999b" />
<rect x="945.0" y="738.7" width="4" height="3.0" fill="#808080" />
<rect x="949.0" y="738.7" width="4" height="3.0" fill="#808080" />
<rect x="953.0" y="738.7" width="4" height="3.0" fill="#808080" />
<rect x="957.0" y="738.7" width="4" height="3.0" fill="#808080" />
<rect x="961.0" y="740.2" width="4" height="1.5" fill="#808080" />
<rect x="965.0" y="737.4" width="4" height="4.3" fill="#12999b" />
<rect x="969.0" y="740.2" width="4" height="1.5" fill="#808080" />
<rect x="973.0" y="740.2" width="4" height="1.5" fill="#808080" />
<rect x="977.0" y="740.2" width="4" height="1.5" fill="#808080" />
<rect x="981.0" y="740.2" width="4" height="1.5" fill="#808080" />
<rect x="985.0" y="740.2" width="4" height="1.5" fill="#808080" />
<rect x="989.0" y="740.2" width="4" height="1.5" fill="#808080" />
<rect x="993.0" y="740.2" width="4" height="1.5" fill="#808080" />
<rect x="997.0" y="740.2" width="4" height="1.5" fill="#808080" />
<rect x="1001.0" y="740.2" width="4" height="1.5" fill="#808080" />
<rect x="1005.0" y="740.2" width="4" height="1.5" fill="#808080" />
<rect x="1009.0" y="740.2" width="4" height="1.5" fill="#808080" />
<rect x="1013.0" y="740.2" width="4" height="1.5" fill="#808080" />
<rect x="1017.0" y="740.2" width="4" height="1.5" fill="#808080" />
<rect x="1021.0" y="740.2" width="4" height="1.5" fill="#808080" />
<rect x="1025.0" y="740.2" width="4" height="1.5" fill="#808080" />
<rect x="1029.0" y="740.2" width="4" height="1.5" fill="#808080" />
<rect x="1033.0" y="740.2" width="4" height="1.5" fill="#808080" />
<rect x="1037.0" y="740.2" width="4" height="1.5" fill="#808080" />
<rect x="1041.0" y="740.2" width="4" height="1.5" fill="#808080" />
<rect x="1045.0" y="740.2" width="4" height="1.5" fill="#808080" />
<rect x="1049.0" y="740.2" width="4" height="1.5" fill="#808080" />
<rect x="1053.0" y="740.2" width="4" height="1.5" fill="#808080" />
<rect x="1057.0" y="740.2" width="4" height="1.5" fill="#808080" />
<rect x="1061.0" y="740.2" width="4" height="1.5" fill="#808080" />
<rect x="1065.0" y="740.2" width="4" height="1.5" fill="#808080" />
<rect x="1069.0" y="739.2" width="4" height="2.5" fill="#e00000" />
<rect x="1073.0" y="740.2" width="4" height="1.5" fill="#808080" />
<rect x="1077.0" y="740.2" width="4" height="1.5" fill="#808080" />
<rect x="1081.0" y="740.2" width="4" height="1.5" fill="#808080" />
<rect x="1085.0" y="740.2" width="4" height="1.5" fill="#808080" />
<rect x="1089.0" y="740.2" width="4" height="1.5" fill="#808080" />
<rect x="1093.0" y="740.2" width="4" height="1.5" fill="#808080" />
<rect x="1097.0" y="740.2" width="4" height="1.5" fill="#808080" />
<rect x="1101.0" y="739.2" width="4" height="2.5" fill="#e00000" />
<rect x="1105.0" y="740.2" width="4" height="1.5" fill="#808080" />
<rect x="1109.0" y="740.2" width="4" height="1.5" fill="#808080" />
<rect x="1113.0" y="739.2" width="4" height="2.5" fill="#e00000" />
<rect x="5.5" y="783.5" width="3" height="1.0" fill="#e00000" />
<line x1="5" y1="783.5" x2="9" y2="783.5" stroke="#e00000" stroke-width="1" />
<rect x="9.5" y="783.5" width="3" height="1.0" fill="#e00000" />
<line x1="9" y1="783.5" x2="13" y2="783.5" stroke="#e00000" stroke-width="1" />
<rect x="13.5" y="782.0" width="3" height="1.5" fill="#12999b" />
<line x1="13" y1="783.5" x2="17" y2="783.5" stroke="#12999b" stroke-width="1" />
<rect x="17.5" y="778.9" width="3" height="4.6" fill="#12999b" />
<line x1="17" y1="783.5" x2="21" y2="783.5" stroke="#12999b" stroke-width="1" />
<rect x="21.5" y="783.5" width="3" height="1.0" fill="#e00000" />
<line x1="21" y1="783.5" x2="25" y2="783.5" stroke="#e00000" stroke-width="1" />
<rect x="25.5" y="783.5" width="3" height="8.0" fill="#e00000" />
<line x1="25" y1="783.5" x2="29" y2="783.5" stroke="#e00000" stroke-width="1" />
<rect x="29.5" y="776.8" width="3" height="6.7" fill="#12999b" />
<line x1="29" y1="783.5" x2="33" y2="783.5" stroke="#12999b" stroke-width="1" />
<rect x="33.5" y="782.0" width="3" height="1.5" fill="#12999b" />
<line x1="33" y1="783.5" x2="37" y2="783.5" stroke="#12999b" stroke-width="1" />
<rect x="37.5" y="783.5" width="3" height="56.0" fill="#e00000" />
<line x1="37" y1="783.5" x2="41" y2="783.5" stroke="#e00000" stroke-width="1" />
<rect x="41.5" y="783.5" width="3" height="66.0" fill="#e00000" />
<line x1="41" y1="783.5" x2="45" y2="783.5" stroke="#e00000" stroke-width="1" />
<rect x="45.5" y="783.5" width="3" height="24.0" fill="#e00000" />
<line x1="45" y1="783.5" x2="49" y2="783.5" stroke="#e00000" stroke-width="1" />
<rect x="49.5" y="783.5" width="3" height="2.0" fill="#e00000" />
<line x1="49" y1="783.5" x2="53" y2="783.5" stroke="#e00000" stroke-width="1" />
<rect x="53.5" y="777.9" width="3" height="5.6" fill="#12999b" />
<line x1="53" y1="783.5" x2="57" y2="783.5" stroke="#12999b" stroke-width="1" />
<rect x="57.5" y="775.5" width="3" height="8.0" fill="#12999b" />
<line x1="57" y1="783.5" x2="61" y2="783.5" stroke="#12999b" stroke-width="1" />
<rect x="61.5" y="761.8" width="3" height="21.7" fill="#12999b" />
<line x1="61" y1="783.5" x2="65" y2="783.5" stroke="#12999b" stroke-width="1" />
<rect x="65.5" y="781.0" width="3" height="2.5" fill="#12999b" />
<line x1="65" y1="783.5" x2="69" y2="783.5" stroke="#12999b" stroke-width="1" />
<rect x="69.5" y="778.9" width="3" height="4.6" fill="#12999b" />
<line x1="69" y1="783.5" x2="73" y2="783.5" stroke="#12999b" stroke-width="1" />
<rect x="73.5" y="771.5" width="3" height="12.0" fill="#12999b" />
<line x1="73" y1="783.5" x2="77" y2="783.5" stroke="#12999b" stroke-width="1" />
<rect x="77.5" y="778.9" width="3" height="4.6" fill="#12999b" />
<line x1="77" y1="783.5" x2="81" y2="783.5" stroke="#12999b" stroke-width="1" />
<rect x="81.5" y="783.5" width="3" height="8.0" fill="#e00000" />
<line x1="81" y1="783.5" x2="85" y2="783.5" stroke="#e00000" stroke-width="1" />
<rect x="85.5" y="781.0" width="3" height="2.5" fill="#12999b" />
<line x1="85" y1="783.5" x2="89" y2="783.5" stroke="#12999b" stroke-width="1" />
<rect x="89.5" y="783.5" width="3" height="3.7" fill="#e00000" />
<line x1="89" y1="783.5" x2="93" y2="783.5" stroke="#e00000" stroke-width="1" />
<rect x="93.5" y="783.5" width="3" height="7.0" fill="#e00000" />
<line x1="93" y1="783.5" x2="97" y2="783.5" stroke="#e00000" stroke-width="1" />
<rect x="97.5" y="778.9" width="3" height="4.6" fill="#12999b" />
<line x1="97" y1="783.5" x2="101" y2="783.5" stroke="#12999b" stroke-width="1" />
<rect x="101.5" y="780.0" width="3" height="3.5" fill="#12999b" />
<line x1="101" y1="783.5" x2="105" y2="783.5" stroke="#12999b" stroke-width="1" />
<rect x="105.5" y="783.5" width="3" height="3.3" fill="#e00000" />
<line x1="105" y1="783.5" x2="109" y2="783.5" stroke="#e00000" stroke-width="1" />
<rect x="109.5" y="781.0" width="3" height="2.5" fill="#12999b" />
<line x1="109" y1="783.5" x2="113" y2="783.5" stroke="#12999b" stroke-width="1" />
<rect x="113.5" y="773.7" width="3" height="9.8" fill="#12999b" />
<line x1="113" y1="783.5" x2="117" y2="783.5" stroke="#12999b" stroke-width="1" />
<rect x="117.5" y="783.5" width="3" height="6.0" fill="#e00000" />
<line x1="117" y1="783.5" x2="121" y2="783.5" stroke="#e00000" stroke-width="1" />
<rect x="121.5" y="783.5" width="3" height="2.7" fill="#e00000" />
<line x1="121" y1="783.5" x2="125" y2="783.5" stroke="#e00000" stroke-width="1" />
<rect x="125.5" y="777.9" width="3" height="5.6" fill="#12999b" />
<line x1="125" y1="783.5" x2="129" y2="783.5" stroke="#12999b" stroke-width="1" />
<rect x="129.5" y="783.5" width="3" height="3.7" fill="#e00000" />
<line x1="129" y1="783.5" x2="133" y2="783.5" stroke="#e00000" stroke-width="1" />
<rect x="133.5" y="783.5" width="3" height="3.7" fill="#e00000" />
<line x1="133" y1="783.5" x2="137" y2="783.5" stroke="#e00000" stroke-width="1" />
<rect x="137.5" y="783.5" width="3" height="3.3" fill="#e00000" />
<line x1="137" y1="783.5" x2="141" y2="783.5" stroke="#e00000" stroke-width="1" />
<rect x="141.5" y="783.5" width="3" height="4.8" fill="#e00000" />
<line x1="141" y1="783.5" x2="145" y2="783.5" stroke="#e00000" stroke-width="1" />
<rect x="145.5" y="780.0" width="3" height="3.5" fill="#12999b" />
<line x1="145" y1="783.5" x2="149" y2="783.5" stroke="#12999b" stroke-width="1" />
<rect x="149.5" y="783.5" width="3" height="3.3" fill="#e00000" />
<line x1="149" y1="783.5" x2="153" y2="783.5" stroke="#e00000" stroke-width="1" />
<rect x="153.5" y="782.0" width="3" height="1.5" fill="#12999b" />
<line x1="153" y1="783.5" x2="157" y2="783.5" stroke="#12999b" stroke-width="1" />
<rect x="157.5" y="783.5" width="3" height="8.0" fill="#e00000" />
<line x1="157" y1="783.5" x2="161" y2="783.5" stroke="#e00000" stroke-width="1" />
<rect x="161.5" y="783.5" width="3" height="2.7" fill="#e00000" />
<line x1="161" y1="783.5" x2="165" y2="783.5" stroke="#e00000" stroke-width="1" />
<rect x="165.5" y="783.5" width="3" height="4.8" fill="#e00000" />
<line x1="165" y1="783.5" x2="169" y2="783.5" stroke="#e00000" stroke-width="1" />
<rect x="169.5" y="776.5" width="3" height="7.0" fill="#12999b" />
<line x1="169" y1="783.5" x2="173" y2="783.5" stroke="#12999b" stroke-width="1" />
<rect x="173.5" y="783.5" width="3" height="1.2" fill="#e00000" />
<line x1="173" y1="783.5" x2="177" y2="783.5" stroke="#e00000" stroke-width="1" />
<rect x="177.5" y="783.5" width="3" height="1.7" fill="#e00000" />
<line x1="177" y1="783.5" x2="181" y2="783.5" stroke="#e00000" stroke-width="1" />
<rect x="181.5" y="783.5" width="3" height="1.7" fill="#e00000" />
<line x1="181" y1="783.5" x2="185" y2="783.5" stroke="#e00000" stroke-width="1" />
<rect x="185.5" y="783.5" width="3" height="9.0" fill="#e00000" />
<line x1="185" y1="783.5" x2="189" y2="783.5" stroke="#e00000" stroke-width="1" />
<rect x="189.5" y="778.9" width="3" height="4.6" fill="#12999b" />
<line x1="189" y1="783.5" x2="193" y2="783.5" stroke="#12999b" stroke-width="1" />
<rect x="193.5" y="783.5" width="3" height="1.0" fill="#e00000" />
<line x1="193" y1="783.5" x2="197" y2="783.5" stroke="#e00000" stroke-width="1" />
<rect x="197.5" y="782.5" width="3" height="1.0" fill="#12999b" />
<line x1="197" y1="783.5" x2="201" y2="783.5" stroke="#12999b" stroke-width="1" />
<rect x="201.5" y="782.5" width="3" height="1.0" fill="#12999b" />
<line x1="201" y1="783.5" x2="205" y2="783.5" stroke="#12999b" stroke-width="1" />
<rect x="205.5" y="776.5" width="3" height="7.0" fill="#12999b" />
<line x1="205" y1="783.5" x2="209" y2="783.5" stroke="#12999b" stroke-width="1" />
<rect x="209.5" y="780.0" width="3" height="3.5" fill="#12999b" />
<line x1="209" y1="783.5" x2="213" y2="783.5" stroke="#12999b" stroke-width="1" />
<rect x="213.5" y="783.5" width="3" height="2.0" fill="#e00000" />
<line x1="213" y1="783.5" x2="217" y2="783.5" stroke="#e00000" stroke-width="1" />
<rect x="217.5" y="783.5" width="3" height="3.7" fill="#e00000" />
<line x1="217" y1="783.5" x2="221" y2="783.5" stroke="#e00000" stroke-width="1" />
<rect x="221.5" y="783.5" width="3" height="2.0" fill="#e00000" />
<line x1="221" y1="783.5" x2="225" y2="783.5" stroke="#e00000" stroke-width="1" />
<rect x="225.5" y="781.0" width="3" height="2.5" fill="#12999b" />
<line x1="225" y1="783.5" x2="229" y2="783.5" stroke="#12999b" stroke-width="1" />
<rect x="229.5" y="777.9" width="3" height="5.6" fill="#12999b" />
<line x1="229" y1="783.5" x2="233" y2="783.5" stroke="#12999b" stroke-width="1" />
<rect x="233.5" y="782.5" width="3" height="1.0" fill="#12999b" />
<line x1="233" y1="783.5" x2="237" y2="783.5" stroke="#12999b" stroke-width="1" />
<rect x="237.5" y="783.5" width="3" height="1.0" fill="#e00000" />
<line x1="237" y1="783.5" x2="241" y2="783.5" stroke="#e00000" stroke-width="1" />
<rect x="241.5" y="783.5" width="3" height="2.7" fill="#e00000" />
<line x1="241" y1="783.5" x2="245" y2="783.5" stroke="#e00000" stroke-width="1" />
<rect x="245.5" y="782.5" width="3" height="1.0" fill="#12999b" />
<line x1="245" y1="783.5" x2="249" y2="783.5" stroke="#12999b" stroke-width="1" />
<rect x="249.5" y="782.5" width="3" height="1.0" fill="#12999b" />
<line x1="249" y1="783.5" x2="253" y2="783.5" stroke="#12999b" stroke-width="1" />
<rect x="253.5" y="783.5" width="3" height="1.0" fill="#e00000" />
<line x1="253" y1="783.5" x2="257" y2="783.5" stroke="#e00000" stroke-width="1" />
<rect x="257.5" y="781.0" width="3" height="2.5" fill="#12999b" />
<line x1="257" y1="783.5" x2="261" y2="783.5" stroke="#12999b" stroke-width="1" />
<rect x="261.5" y="783.5" width="3" height="1.7" fill="#e00000" />
<line x1="261" y1="783.5" x2="265" y2="783.5" stroke="#e00000" stroke-width="1" />
<rect x="265.5" y="783.5" width="3" height="1.7" fill="#e00000" />
<line x1="265" y1="783.5" x2="269" y2="783.5" stroke="#e00000" stroke-width="1" />
<rect x="269.5" y="781.0" width="3" height="2.5" fill="#12999b" />
<line x1="269" y1="783.5" x2="273" y2="783.5" stroke="#12999b" stroke-width="1" />
<rect x="273.5" y="783.5" width="3" height="1.7" fill="#e00000" />
<line x1="273" y1="783.5" x2="277" y2="783.5" stroke="#e00000" stroke-width="1" />
<rect x="277.5" y="783.5" width="3" height="2.3" fill="#e00000" />
<line x1="277" y1="783.5" x2="281" y2="783.5" stroke="#e00000" stroke-width="1" />
<rect x="281.5" y="782.5" width="3" height="1.0" fill="#12999b" />
<line x1="281" y1="783.5" x2="285" y2="783.5" stroke="#12999b" stroke-width="1" />
<rect x="285.5" y="783.5" width="3" height="1.0" fill="#e00000" />
<line x1="285" y1="783.5" x2="289" y2="783.5" stroke="#e00000" stroke-width="1" />
<rect x="289.5" y="782.5" width="3" height="1.0" fill="#12999b" />
<line x1="289" y1="783.5" x2="293" y2="783.5" stroke="#12999b" stroke-width="1" />
<rect x="293.5" y="776.5" width="3" height="7.0" fill="#12999b" />
<line x1="293" y1="783.5" x2="297" y2="783.5" stroke="#12999b" stroke-width="1" />
<rect x="297.5" y="782.5" width="3" height="1.0" fill="#12999b" />
<line x1="297" y1="783.5" x2="301" y2="783.5" stroke="#12999b" stroke-width="1" />
<rect x="301.5" y="783.5" width="3" height="4.8" fill="#e00000" />
<line x1="301" y1="783.5" x2="305" y2="783.5" stroke="#e00000" stroke-width="1" />
<rect x="305.5" y="781.0" width="3" height="2.5" fill="#12999b" />
<line x1="305" y1="783.5" x2="309" y2="783.5" stroke="#12999b" stroke-width="1" />
<rect x="309.5" y="783.5" width="3" height="6.0" fill="#e00000" />
<line x1="309" y1="783.5" x2="313" y2="783.5" stroke="#e00000" stroke-width="1" />
<rect x="313.5" y="782.5" width="3" height="1.0" fill="#12999b" />
<line x1="313" y1="783.5" x2="317" y2="783.5" stroke="#12999b" stroke-width="1" />
<rect x="317.5" y="780.0" width="3" height="3.5" fill="#12999b" />
<line x1="317" y1="783.5" x2="321" y2="783.5" stroke="#12999b" stroke-width="1" />
<rect x="321.5" y="783.5" width="3" height="1.0" fill="#e00000" />
<line x1="321" y1="783.5" x2="325" y2="783.5" stroke="#e00000" stroke-width="1" />
<rect x="325.5" y="783.5" width="3" height="1.0" fill="#e00000" />
<line x1="325" y1="783.5" x2="329" y2="783.5" stroke="#e00000" stroke-width="1" />
<rect x="329.5" y="783.5" width="3" height="1.7" fill="#e00000" />
<line x1="329" y1="783.5" x2="333" y2="783.5" stroke="#e00000" stroke-width="1" />
<rect x="333.5" y="778.5" width="3" height="5.0" fill="#12999b" />
<line x1="333" y1="783.5" x2="337" y2="783.5" stroke="#12999b" stroke-width="1" />
<rect x="337.5" y="783.5" width="3" height="1.0" fill="#e00000" />
<line x1="337" y1="783.5" x2="341" y2="783.5" stroke="#e00000" stroke-width="1" />
<rect x="341.5" y="783.5" width="3" height="1.0" fill="#e00000" />
<line x1="341" y1="783.5" x2="345" y2="783.5" stroke="#e00000" stroke-width="1" />
<rect x="345.5" y="783.5" width="3" height="1.0" fill="#e00000" />
<line x1="345" y1="783.5" x2="349" y2="783.5" stroke="#e00000" stroke-width="1" />
<rect x="349.5" y="783.5" width="3" height="1.0" fill="#e00000" />
<line x1="349" y1="783.5" x2="353" y2="783.5" stroke="#e00000" stroke-width="1" />
<rect x="353.5" y="782.0" width="3" height="1.5" fill="#12999b" />
<line x1="353" y1="783.5" x2="357" y2="783.5" stroke="#12999b" stroke-width="1" />
<rect x="357.5" y="782.5" width="3" height="1.0" fill="#12999b" />
<line x1="357" y1="783.5" x2="361" y2="783.5" stroke="#12999b" stroke-width="1" />
<rect x="361.5" y="781.5" width="3" height="2.0" fill="#12999b" />
<line x1="361" y1="783.5" x2="365" y2="783.5" stroke="#12999b" stroke-width="1" />
<rect x="365.5" y="783.5" width="3" height="1.0" fill="#e00000" />
<line x1="365" y1="783.5" x2="369" y2="783.5" stroke="#e00000" stroke-width="1" />
<rect x="369.5" y="782.0" width="3" height="1.5" fill="#12999b" />
<line x1="369" y1="783.5" x2="373" y2="783.5" stroke="#12999b" stroke-width="1" />
<rect x="373.5" y="783.5" width="3" height="3.7" fill="#e00000" />
<line x1="373" y1="783.5" x2="377" y2="783.5" stroke="#e00000" stroke-width="1" />
<rect x="377.5" y="783.5" width="3" height="3.7" fill="#e00000" />
<line x1="377" y1="783.5" x2="381" y2="783.5" stroke="#e00000" stroke-width="1" />
<rect x="381.5" y="782.5" width="3" height="1.0" fill="#12999b" />
<line x1="381" y1="783.5" x2="385" y2="783.5" stroke="#12999b" stroke-width="1" />
<rect x="385.5" y="782.5" width="3" height="1.0" fill="#12999b" />
<line x1="385" y1="783.5" x2="389" y2="783.5" stroke="#12999b" stroke-width="1" />
<rect x="389.5" y="783.5" width="3" height="1.7" fill="#e00000" />
<line x1="389" y1="783.5" x2="393" y2="783.5" stroke="#e00000" stroke-width="1" />
<rect x="393.5" y="783.5" width="3" height="1.7" fill="#e00000" />
<line x1="393" y1="783.5" x2="397" y2="783.5" stroke="#e00000" stroke-width="1" />
<rect x="397.5" y="782.5" width="3" height="1.0" fill="#12999b" />
<line x1="397" y1="783.5" x2="401" y2="783.5" stroke="#12999b" stroke-width="1" />
<rect x="401.5" y="782.0" width="3" height="1.5" fill="#12999b" />
<line x1="401" y1="783.5" x2="405" y2="783.5" stroke="#12999b" stroke-width="1" />
<rect x="405.5" y="782.5" width="3" height="1.0" fill="#12999b" />
<line x1="405" y1="783.5" x2="409" y2="783.5" stroke="#12999b" stroke-width="1" />
<rect x="409.5" y="782.5" width="3" height="1.0" fill="#12999b" />
<line x1="409" y1="783.5" x2="413" y2="783.5" stroke="#12999b" stroke-width="1" />
<rect x="413.5" y="782.0" width="3" height="1.5" fill="#12999b" />
<line x1="413" y1="783.5" x2="417" y2="783.5" stroke="#12999b" stroke-width="1" />
<rect x="417.5" y="782.0" width="3" height="1.5" fill="#12999b" />
<line x1="417" y1="783.5" x2="421" y2="783.5" stroke="#12999b" stroke-width="1" />
<rect x="421.5" y="783.5" width="3" height="1.5" fill="#e00000" />
<line x1="421" y1="783.5" x2="425" y2="783.5" stroke="#e00000" stroke-width="1" />
<rect x="425.5" y="783.5" width="3" height="1.5" fill="#e00000" />
<line x1="425" y1="783.5" x2="429" y2="783.5" stroke="#e00000" stroke-width="1" />
<rect x="429.5" y="782.0" width="3" height="1.5" fill="#12999b" />
<line x1="429" y1="783.5" x2="433" y2="783.5" stroke="#12999b" stroke-width="1" />
<rect x="433.5" y="782.5" width="3" height="1.0" fill="#12999b" />
<line x1="433" y1="783.5" x2="437" y2="783.5" stroke="#12999b" stroke-width="1" />
<rect x="437.5" y="781.0" width="3" height="2.5" fill="#12999b" />
<line x1="437" y1="783.5" x2="441" y2="783.5" stroke="#12999b" stroke-width="1" />
<rect x="441.5" y="782.0" width="3" height="1.5" fill="#12999b" />
<line x1="441" y1="783.5" x2="445" y2="783.5" stroke="#12999b" stroke-width="1" />
<rect x="445.5" y="783.5" width="3" height="1.5" fill="#e00000" />
<line x1="445" y1="783.5" x2="449" y2="783.5" stroke="#e00000" stroke-width="1" />
<rect x="449.5" y="783.5" width="3" height="2.0" fill="#e00000" />
<line x1="449" y1="783.5" x2="453" y2="783.5" stroke="#e00000" stroke-width="1" />
<rect x="453.5" y="782.5" width="3" height="1.0" fill="#12999b" />
<line x1="453" y1="783.5" x2="457" y2="783.5" stroke="#12999b" stroke-width="1" />
<rect x="457.5" y="783.5" width="3" height="1.0" fill="#e00000" />
<line x1="457" y1="783.5" x2="461" y2="783.5" stroke="#e00000" stroke-width="1" />
<rect x="461.5" y="783.5" width="3" height="1.5" fill="#e00000" />
<line x1="461" y1="783.5" x2="465" y2="783.5" stroke="#e00000" stroke-width="1" />
<rect x="465.5" y="783.5" width="3" height="2.0" fill="#e00000" />
<line x1="465" y1="783.5" x2="469" y2="783.5" stroke="#e00000" stroke-width="1" />
<rect x="469.5" y="782.0" width="3" height="1.5" fill="#12999b" />
<line x1="469" y1="783.5" x2="473" y2="783.5" stroke="#12999b" stroke-width="1" />
<rect x="473.5" y="781.0" width="3" height="2.5" fill="#12999b" />
<line x1="473" y1="783.5" x2="477" y2="783.5" stroke="#12999b" stroke-width="1" />
<rect x="477.5" y="781.0" width="3" height="2.5" fill="#12999b" />
<line x1="477" y1="783.5" x2="481" y2="783.5" stroke="#12999b" stroke-width="1" />
<rect x="481.5" y="783.5" width="3" height="2.0" fill="#e00000" />
<line x1="481" y1="783.5" x2="485" y2="783.5" stroke="#e00000" stroke-width="1" />
<rect x="485.5" y="782.0" width="3" height="1.5" fill="#12999b" />
<line x1="485" y1="783.5" x2="489" y2="783.5" stroke="#12999b" stroke-width="1" />
<rect x="489.5" y="782.5" width="3" height="1.0" fill="#12999b" />
<line x1="489" y1="783.5" x2="493" y2="783.5" stroke="#12999b" stroke-width="1" />
<rect x="493.5" y="782.5" width="3" height="1.0" fill="#12999b" />
<line x1="493" y1="783.5" x2="497" y2="783.5" stroke="#12999b" stroke-width="1" />
<rect x="497.5" y="781.0" width="3" height="2.5" fill="#12999b" />
<line x1="497" y1="783.5" x2="501" y2="783.5" stroke="#12999b" stroke-width="1" />
<rect x="501.5" y="781.0" width="3" height="2.5" fill="#12999b" />
<line x1="501" y1="783.5" x2="505" y2="783.5" stroke="#12999b" stroke-width="1" />
<rect x="505.5" y="782.0" width="3" height="1.5" fill="#12999b" />
<line x1="505" y1="783.5" x2="509" y2="783.5" stroke="#12999b" stroke-width="1" />
<rect x="509.5" y="781.0" width="3" height="2.5" fill="#12999b" />
<line x1="509" y1="783.5" x2="513" y2="783.5" stroke="#12999b" stroke-width="1" />
<rect x="513.5" y="783.5" width="3" height="1.5" fill="#e00000" />
<line x1="513" y1="783.5" x2="517" y2="783.5" stroke="#e00000" stroke-width="1" />
<rect x="517.5" y="782.0" width="3" height="1.5" fill="#12999b" />
<line x1="517" y1="783.5" x2="521" y2="783.5" stroke="#12999b" stroke-width="1" />
<rect x="521.5" y="783.5" width="3" height="2.0" fill="#e00000" />
<line x1="521" y1="783.5" x2="525" y2="783.5" stroke="#e00000" stroke-width="1" />
<rect x="525.5" y="782.0" width="3" height="1.5" fill="#12999b" />
<line x1="525" y1="783.5" x2="529" y2="783.5" stroke="#12999b" stroke-width="1" />
<rect x="529.5" y="783.5" width="3" height="2.0" fill="#e00000" />
<line x1="529" y1="783.5" x2="533" y2="783.5" stroke="#e00000" stroke-width="1" />
<rect x="533.5" y="783.5" width="3" height="2.0" fill="#e00000" />
<line x1="533" y1="783.5" x2="537" y2="783.5" stroke="#e00000" stroke-width="1" />
<rect x="537.5" y="783.5" width="3" height="2.0" fill="#e00000" />
<line x1="537" y1="783.5" x2="541" y2="783.5" stroke="#e00000" stroke-width="1" />
<rect x="541.5" y="783.5" width="3" height="1.5" fill="#e00000" />
<line x1="541" y1="783.5" x2="545" y2="783.5" stroke="#e00000" stroke-width="1" />
<rect x="545.5" y="783.5" width="3" height="1.5" fill="#e00000" />
<line x1="545" y1="783.5" x2="549" y2="783.5" stroke="#e00000" stroke-width="1" />
<rect x="549.5" y="782.0" width="3" height="1.5" fill="#12999b" />
<line x1="549" y1="783.5" x2="553" y2="783.5" stroke="#12999b" stroke-width="1" />
<rect x="553.5" y="783.5" width="3" height="2.0" fill="#e00000" />
<line x1="553" y1="783.5" x2="557" y2="783.5" stroke="#e00000" stroke-width="1" />
<rect x="557.5" y="782.5" width="3" height="1.0" fill="#12999b" />
<line x1="557" y1="783.5" x2="561" y2="783.5" stroke="#12999b" stroke-width="1" />
<rect x="561.5" y="783.5" width="3" height="1.0" fill="#e00000" />
<line x1="561" y1="783.5" x2="565" y2="783.5" stroke="#e00000" stroke-width="1" />
<rect x="565.5" y="782.5" width="3" height="1.0" fill="#12999b" />
<line x1="565" y1="783.5" x2="569" y2="783.5" stroke="#12999b" stroke-width="1" />
<rect x="569.5" y="782.0" width="3" height="1.5" fill="#12999b" />
<line x1="569" y1="783.5" x2="573" y2="783.5" stroke="#12999b" stroke-width="1" />
<rect x="573.5" y="783.5" width="3" height="1.5" fill="#e00000" />
<line x1="573" y1="783.5" x2="577" y2="783.5" stroke="#e00000" stroke-width="1" />
<rect x="577.5" y="782.0" width="3" height="1.5" fill="#12999b" />
<line x1="577" y1="783.5" x2="581" y2="783.5" stroke="#12999b" stroke-width="1" />
<rect x="581.5" y="783.5" width="3" height="6.0" fill="#e00000" />
<line x1="581" y1="783.5" x2="585" y2="783.5" stroke="#e00000" stroke-width="1" />
<rect x="585.5" y="783.5" width="3" height="1.5" fill="#e00000" />
<line x1="585" y1="783.5" x2="589" y2="783.5" stroke="#e00000" stroke-width="1" />
<rect x="589.5" y="781.0" width="3" height="2.5" fill="#12999b" />
<line x1="589" y1="783.5" x2="593" y2="783.5" stroke="#12999b" stroke-width="1" />
<rect x="593.5" y="783.5" width="3" height="1.0" fill="#e00000" />
<line x1="593" y1="783.5" x2="597" y2="783.5" stroke="#e00000" stroke-width="1" />
<rect x="597.5" y="782.5" width="3" height="1.0" fill="#12999b" />
<line x1="597" y1="783.5" x2="601" y2="783.5" stroke="#12999b" stroke-width="1" />
<rect x="601.5" y="783.5" width="3" height="2.0" fill="#e00000" />
<line x1="601" y1="783.5" x2="605" y2="783.5" stroke="#e00000" stroke-width="1" />
<rect x="605.5" y="781.0" width="3" height="2.5" fill="#12999b" />
<line x1="605" y1="783.5" x2="609" y2="783.5" stroke="#12999b" stroke-width="1" />
<rect x="609.5" y="783.5" width="3" height="2.0" fill="#e00000" />
<line x1="609" y1="783.5" x2="613" y2="783.5" stroke="#e00000" stroke-width="1" />
<rect x="613.5" y="782.5" width="3" height="1.0" fill="#12999b" />
<line x1="613" y1="783.5" x2="617" y2="783.5" stroke="#12999b" stroke-width="1" />
<rect x="617.5" y="781.0" width="3" height="2.5" fill="#12999b" />
<line x1="617" y1="783.5" x2="621" y2="783.5" stroke="#12999b" stroke-width="1" />
<rect x="621.5" y="783.5" width="3" height="1.0" fill="#e00000" />
<line x1="621" y1="783.5" x2="625" y2="783.5" stroke="#e00000" stroke-width="1" />
<rect x="625.5" y="782.5" width="3" height="1.0" fill="#12999b" />
<line x1="625" y1="783.5" x2="629" y2="783.5" stroke="#12999b" stroke-width="1" />
<rect x="629.5" y="782.0" width="3" height="1.5" fill="#12999b" />
<line x1="629" y1="783.5" x2="633" y2="783.5" stroke="#12999b" stroke-width="1" />
<rect x="633.5" y="783.5" width="3" height="2.0" fill="#e00000" />
<line x1="633" y1="783.5" x2="637" y2="783.5" stroke="#e00000" stroke-width="1" />
<rect x="637.5" y="781.0" width="3" height="2.5" fill="#12999b" />
<line x1="637" y1="783.5" x2="641" y2="783.5" stroke="#12999b" stroke-width="1" />
<rect x="641.5" y="783.5" width="3" height="1.0" fill="#e00000" />
<line x1="641" y1="783.5" x2="645" y2="783.5" stroke="#e00000" stroke-width="1" />
<rect x="645.5" y="783.5" width="3" height="1.0" fill="#e00000" />
<line x1="645" y1="783.5" x2="649" y2="783.5" stroke="#e00000" stroke-width="1" />
<rect x="649.5" y="783.5" width="3" height="1.5" fill="#e00000" />
<line x1="649" y1="783.5" x2="653" y2="783.5" stroke="#e00000" stroke-width="1" />
<rect x="653.5" y="782.0" width="3" height="1.5" fill="#12999b" />
<line x1="653" y1="783.5" x2="657" y2="783.5" stroke="#12999b" stroke-width="1" />
<rect x="657.5" y="783.5" width="3" height="1.0" fill="#e00000" />
<line x1="657" y1="783.5" x2="661" y2="783.5" stroke="#e00000" stroke-width="1" />
<rect x="661.5" y="783.5" width="3" height="2.0" fill="#e00000" />
<line x1="661" y1="783.5" x2="665" y2="783.5" stroke="#e00000" stroke-width="1" />
<rect x="665.5" y="783.5" width="3" height="2.0" fill="#e00000" />
<line x1="665" y1="783.5" x2="669" y2="783.5" stroke="#e00000" stroke-width="1" />
<rect x="669.5" y="782.0" width="3" height="1.5" fill="#12999b" />
<line x1="669" y1="783.5" x2="673" y2="783.5" stroke="#12999b" stroke-width="1" />
<rect x="673.5" y="783.5" width="3" height="2.0" fill="#e00000" />
<line x1="673" y1="783.5" x2="677" y2="783.5" stroke="#e00000" stroke-width="1" />
<rect x="677.5" y="782.5" width="3" height="1.0" fill="#12999b" />
<line x1="677" y1="783.5" x2="681" y2="783.5" stroke="#12999b" stroke-width="1" />
<rect x="681.5" y="783.5" width="3" height="2.0" fill="#e00000" />
<line x1="681" y1="783.5" x2="685" y2="783.5" stroke="#e00000" stroke-width="1" />
<rect x="685.5" y="783.5" width="3" height="1.0" fill="#e00000" />
<line x1="685" y1="783.5" x2="689" y2="783.5" stroke="#e00000" stroke-width="1" />
<rect x="689.5" y="782.5" width="3" height="1.0" fill="#12999b" />
<line x1="689" y1="783.5" x2="693" y2="783.5" stroke="#12999b" stroke-width="1" />
<rect x="693.5" y="783.5" width="3" height="2.0" fill="#e00000" />
<line x1="693" y1="783.5" x2="697" y2="783.5" stroke="#e00000" stroke-width="1" />
<rect x="697.5" y="783.5" width="3" height="2.0" fill="#e00000" />
<line x1="697" y1="783.5" x2="701" y2="783.5" stroke="#e00000" stroke-width="1" />
<rect x="701.5" y="781.0" width="3" height="2.5" fill="#12999b" />
<line x1="701" y1="783.5" x2="705" y2="783.5" stroke="#12999b" stroke-width="1" />
<rect x="705.5" y="783.5" width="3" height="2.0" fill="#e00000" />
<line x1="705" y1="783.5" x2="709" y2="783.5" stroke="#e00000" stroke-width="1" />
<rect x="709.5" y="783.5" width="3" height="1.5" fill="#e00000" />
<line x1="709" y1="783.5" x2="713" y2="783.5" stroke="#e00000" stroke-width="1" />
<rect x="713.5" y="783.5" width="3" height="1.5" fill="#e00000" />
<line x1="713" y1="783.5" x2="717" y2="783.5" stroke="#e00000" stroke-width="1" />
<rect x="717.5" y="783.5" width="3" height="2.0" fill="#e00000" />
<line x1="717" y1="783.5" x2="721" y2="783.5" stroke="#e00000" stroke-width="1" />
<rect x="721.5" y="782.5" width="3" height="1.0" fill="#12999b" />
<line x1="721" y1="783.5" x2="725" y2="783.5" stroke="#12999b" stroke-width="1" />
<rect x="725.5" y="782.5" width="3" height="1.0" fill="#12999b" />
<line x1="725" y1="783.5" x2="729" y2="783.5" stroke="#12999b" stroke-width="1" />
<rect x="729.5" y="781.0" width="3" height="2.5" fill="#12999b" />
<line x1="729" y1="783.5" x2="733" y2="783.5" stroke="#12999b" stroke-width="1" />
<rect x="733.5" y="782.5" width="3" height="1.0" fill="#12999b" />
<line x1="733" y1="783.5" x2="737" y2="783.5" stroke="#12999b" stroke-width="1" />
<rect x="737.5" y="782.5" width="3" height="1.0" fill="#12999b" />
<line x1="737" y1="783.5" x2="741" y2="783.5" stroke="#12999b" stroke-width="1" />
<rect x="741.5" y="783.5" width="3" height="2.0" fill="#e00000" />
<line x1="741" y1="783.5" x2="745" y2="783.5" stroke="#e00000" stroke-width="1" />
<rect x="745.5" y="782.0" width="3" height="1.5" fill="#12999b" />
<line x1="745" y1="783.5" x2="749" y2="783.5" stroke="#12999b" stroke-width="1" />
<rect x="749.5" y="781.0" width="3" height="2.5" fill="#12999b" />
<line x1="749" y1="783.5" x2="753" y2="783.5" stroke="#12999b" stroke-width="1" />
<rect x="753.5" y="783.5" width="3" height="1.5" fill="#e00000" />
<line x1="753" y1="783.5" x2="757" y2="783.5" stroke="#e00000" stroke-width="1" />
<rect x="757.5" y="781.0" width="3" height="2.5" fill="#12999b" />
<line x1="757" y1="783.5" x2="761" y2="783.5" stroke="#12999b" stroke-width="1" />
<rect x="761.5" y="783.5" width="3" height="1.0" fill="#e00000" />
<line x1="761" y1="783.5" x2="765" y2="783.5" stroke="#e00000" stroke-width="1" />
<rect x="765.5" y="783.5" width="3" height="1.0" fill="#e00000" />
<line x1="765" y1="783.5" x2="769" y2="783.5" stroke="#e00000" stroke-width="1" />
<rect x="769.5" y="783.5" width="3" height="2.0" fill="#e00000" />
<line x1="769" y1="783.5" x2="773" y2="783.5" stroke="#e00000" stroke-width="1" />
<rect x="773.5" y="783.5" width="3" height="1.0" fill="#e00000" />
<line x1="773" y1="783.5" x2="777" y2="783.5" stroke="#e00000" stroke-width="1" />
<rect x="777.5" y="783.5" width="3" height="1.0" fill="#e00000" />
<line x1="777" y1="783.5" x2="781" y2="783.5" stroke="#e00000" stroke-width="1" />
<rect x="781.5" y="783.5" width="3" height="2.0" fill="#e00000" />
<line x1="781" y1="783.5" x2="785" y2="783.5" stroke="#e00000" stroke-width="1" />
<rect x="785.5" y="782.5" width="3" height="1.0" fill="#12999b" />
<line x1="785" y1="783.5" x2="789" y2="783.5" stroke="#12999b" stroke-width="1" />
<rect x="789.5" y="783.5" width="3" height="2.0" fill="#e00000" />
<line x1="789" y1="783.5" x2="793" y2="783.5" stroke="#e00000" stroke-width="1" />
<rect x="793.5" y="783.5" width="3" height="1.5" fill="#e00000" />
<line x1="793" y1="783.5" x2="797" y2="783.5" stroke="#e00000" stroke-width="1" />
<rect x="797.5" y="783.5" width="3" height="1.5" fill="#e00000" />
<line x1="797" y1="783.5" x2="801" y2="783.5" stroke="#e00000" stroke-width="1" />
<rect x="801.5" y="783.5" width="3" height="1.5" fill="#e00000" />
<line x1="801" y1="783.5" x2="805" y2="783.5" stroke="#e00000" stroke-width="1" />
<rect x="805.5" y="783.5" width="3" height="1.5" fill="#e00000" />
<line x1="805" y1="783.5" x2="809" y2="783.5" stroke="#e00000" stroke-width="1" />
<rect x="809.5" y="781.0" width="3" height="2.5" fill="#12999b" />
<line x1="809" y1="783.5" x2="813" y2="783.5" stroke="#12999b" stroke-width="1" />
<rect x="813.5" y="783.5" width="3" height="1.5" fill="#e00000" />
<line x1="813" y1="783.5" x2="817" y2="783.5" stroke="#e00000" stroke-width="1" />
<rect x="817.5" y="783.5" width="3" height="1.5" fill="#e00000" />
<line x1="817" y1="783.5" x2="821" y2="783.5" stroke="#e00000" stroke-width="1" />
<rect x="821.5" y="782.5" width="3" height="1.0" fill="#12999b" />
<line x1="821" y1="783.5" x2="825" y2="783.5" stroke="#12999b" stroke-width="1" />
<rect x="825.5" y="782.0" width="3" height="1.5" fill="#12999b" />
<line x1="825" y1="783.5" x2="829" y2="783.5" stroke="#12999b" stroke-width="1" />
<rect x="829.5" y="782.0" width="3" height="1.5" fill="#12999b" />
<line x1="829" y1="783.5" x2="833" y2="783.5" stroke="#12999b" stroke-width="1" />
<rect x="833.5" y="783.5" width="3" height="3.0" fill="#e00000" />
<line x1="833" y1="783.5" x2="837" y2="783.5" stroke="#e00000" stroke-width="1" />
<rect x="837.5" y="783.5" width="3" height="3.5" fill="#e00000" />
<line x1="837" y1="783.5" x2="841" y2="783.5" stroke="#e00000" stroke-width="1" />
<rect x="841.5" y="781.0" width="3" height="2.5" fill="#12999b" />
<line x1="841" y1="783.5" x2="845" y2="783.5" stroke="#12999b" stroke-width="1" />
<rect x="845.5" y="779.2" width="3" height="4.3" fill="#12999b" />
<line x1="845" y1="783.5" x2="849" y2="783.5" stroke="#12999b" stroke-width="1" />
<rect x="849.5" y="783.5" width="3" height="3.3" fill="#e00000" />
<line x1="849" y1="783.5" x2="853" y2="783.5" stroke="#e00000" stroke-width="1" />
<rect x="853.5" y="782.0" width="3" height="1.5" fill="#12999b" />
<line x1="853" y1="783.5" x2="857" y2="783.5" stroke="#12999b" stroke-width="1" />
<rect x="857.5" y="783.5" width="3" height="1.0" fill="#e00000" />
<line x1="857" y1="783.5" x2="861" y2="783.5" stroke="#e00000" stroke-width="1" />
<rect x="861.5" y="782.0" width="3" height="1.5" fill="#12999b" />
<line x1="861" y1="783.5" x2="865" y2="783.5" stroke="#12999b" stroke-width="1" />
<rect x="865.5" y="783.5" width="3" height="3.3" fill="#e00000" />
<line x1="865" y1="783.5" x2="869" y2="783.5" stroke="#e00000" stroke-width="1" />
<rect x="869.5" y="781.0" width="3" height="2.5" fill="#12999b" />
<line x1="869" y1="783.5" x2="873" y2="783.5" stroke="#12999b" stroke-width="1" />
<rect x="873.5" y="782.5" width="3" height="1.0" fill="#12999b" />
<line x1="873" y1="783.5" x2="877" y2="783.5" stroke="#12999b" stroke-width="1" />
<rect x="877.5" y="782.0" width="3" height="1.5" fill="#12999b" />
<line x1="877" y1="783.5" x2="881" y2="783.5" stroke="#12999b" stroke-width="1" />
<rect x="881.5" y="783.5" width="3" height="2.0" fill="#e00000" />
<line x1="881" y1="783.5" x2="885" y2="783.5" stroke="#e00000" stroke-width="1" />
<rect x="885.5" y="783.5" width="3" height="1.0" fill="#e00000" />
<line x1="885" y1="783.5" x2="889" y2="783.5" stroke="#e00000" stroke-width="1" />
<rect x="889.5" y="782.5" width="3" height="1.0" fill="#12999b" />
<line x1="889" y1="783.5" x2="893" y2="783.5" stroke="#12999b" stroke-width="1" />
<rect x="893.5" y="783.5" width="3" height="1.5" fill="#e00000" />
<line x1="893" y1="783.5" x2="897" y2="783.5" stroke="#e00000" stroke-width="1" />
<rect x="897.5" y="781.5" width="3" height="2.0" fill="#12999b" />
<line x1="897" y1="783.5" x2="901" y2="783.5" stroke="#12999b" stroke-width="1" />
<rect x="901.5" y="780.2" width="3" height="3.3" fill="#12999b" />
<line x1="901" y1="783.5" x2="905" y2="783.5" stroke="#12999b" stroke-width="1" />
<rect x="905.5" y="777.5" width="3" height="6.0" fill="#12999b" />
<line x1="905" y1="783.5" x2="909" y2="783.5" stroke="#12999b" stroke-width="1" />
<rect x="909.5" y="773.8" width="3" height="9.7" fill="#12999b" />
<line x1="909" y1="783.5" x2="913" y2="783.5" stroke="#12999b" stroke-width="1" />
<rect x="913.5" y="777.5" width="3" height="6.0" fill="#12999b" />
<line x1="913" y1="783.5" x2="917" y2="783.5" stroke="#12999b" stroke-width="1" />
<rect x="917.5" y="783.5" width="3" height="7.5" fill="#e00000" />
<line x1="917" y1="783.5" x2="921" y2="783.5" stroke="#e00000" stroke-width="1" />
<rect x="921.5" y="780.0" width="3" height="3.5" fill="#12999b" />
<line x1="921" y1="783.5" x2="925" y2="783.5" stroke="#12999b" stroke-width="1" />
<rect x="925.5" y="782.0" width="3" height="1.5" fill="#12999b" />
<line x1="925" y1="783.5" x2="929" y2="783.5" stroke="#12999b" stroke-width="1" />
<rect x="929.5" y="783.5" width="3" height="2.5" fill="#e00000" />
<line x1="929" y1="783.5" x2="933" y2="783.5" stroke="#e00000" stroke-width="1" />
<rect x="933.5" y="783.5" width="3" height="3.5" fill="#e00000" />
<line x1="933" y1="783.5" x2="937" y2="783.5" stroke="#e00000" stroke-width="1" />
<rect x="937.5" y="780.5" width="3" height="3.0" fill="#12999b" />
<line x1="937" y1="783.5" x2="941" y2="783.5" stroke="#12999b" stroke-width="1" />
<rect x="941.5" y="778.0" width="3" height="5.5" fill="#12999b" />
<line x1="941" y1="783.5" x2="945" y2="783.5" stroke="#12999b" stroke-width="1" />
<rect x="945.5" y="783.5" width="3" height="1.0" fill="#e00000" />
<line x1="945" y1="783.5" x2="949" y2="783.5" stroke="#e00000" stroke-width="1" />
<rect x="949.5" y="783.5" width="3" height="1.0" fill="#e00000" />
<line x1="949" y1="783.5" x2="953" y2="783.5" stroke="#e00000" stroke-width="1" />
<rect x="953.5" y="783.5" width="3" height="3.5" fill="#e00000" />
<line x1="953" y1="783.5" x2="957" y2="783.5" stroke="#e00000" stroke-width="1" />
<rect x="957.5" y="782.0" width="3" height="1.5" fill="#12999b" />
<line x1="957" y1="783.5" x2="961" y2="783.5" stroke="#12999b" stroke-width="1" />
<rect x="961.5" y="783.5" width="3" height="3.5" fill="#e00000" />
<line x1="961" y1="783.5" x2="965" y2="783.5" stroke="#e00000" stroke-width="1" />
<rect x="965.5" y="781.5" width="3" height="2.0" fill="#12999b" />
<line x1="965" y1="783.5" x2="969" y2="783.5" stroke="#12999b" stroke-width="1" />
<rect x="969.5" y="783.5" width="3" height="1.5" fill="#e00000" />
<line x1="969" y1="783.5" x2="973" y2="783.5" stroke="#e00000" stroke-width="1" />
<rect x="973.5" y="783.5" width="3" height="1.5" fill="#e00000" />
<line x1="973" y1="783.5" x2="977" y2="783.5" stroke="#e00000" stroke-width="1" />
<rect x="977.5" y="782.0" width="3" height="1.5" fill="#12999b" />
<line x1="977" y1="783.5" x2="981" y2="783.5" stroke="#12999b" stroke-width="1" />
<rect x="981.5" y="783.5" width="3" height="1.5" fill="#e00000" />
<line x1="981" y1="783.5" x2="985" y2="783.5" stroke="#e00000" stroke-width="1" />
<rect x="985.5" y="783.5" width="3" height="1.5" fill="#e00000" />
<line x1="985" y1="783.5" x2="989" y2="783.5" stroke="#e00000" stroke-width="1" />
<rect x="989.5" y="783.5" width="3" height="1.5" fill="#e00000" />
<line x1="989" y1="783.5" x2="993" y2="783.5" stroke="#e00000" stroke-width="1" />
<rect x="993.5" y="781.5" width="3" height="2.0" fill="#12999b" />
<line x1="993" y1="783.5" x2="997" y2="783.5" stroke="#12999b" stroke-width="1" />
<rect x="997.5" y="783.5" width="3" height="1.5" fill="#e00000" />
<line x1="997" y1="783.5" x2="1001" y2="783.5" stroke="#e00000" stroke-width="1" />
<rect x="1001.5" y="783.5" width="3" height="3.0" fill="#e00000" />
<line x1="1001" y1="783.5" x2="1005" y2="783.5" stroke="#e00000" stroke-width="1" />
<rect x="1005.5" y="783.5" width="3" height="1.5" fill="#e00000" />
<line x1="1005" y1="783.5" x2="1009" y2="783.5" stroke="#e00000" stroke-width="1" />
<rect x="1009.5" y="782.0" width="3" height="1.5" fill="#12999b" />
<line x1="1009" y1="783.5" x2="1013" y2="783.5" stroke="#12999b" stroke-width="1" />
<rect x="1013.5" y="782.0" width="3" height="1.5" fill="#12999b" />
<line x1="1013" y1="783.5" x2="1017" y2="783.5" stroke="#12999b" stroke-width="1" />
<rect x="1017.5" y="783.5" width="3" height="1.0" fill="#e00000" />
<line x1="1017" y1="783.5" x2="1021" y2="783.5" stroke="#e00000" stroke-width="1" />
<rect x="1021.5" y="783.5" width="3" height="2.0" fill="#e00000" />
<line x1="1021" y1="783.5" x2="1025" y2="783.5" stroke="#e00000" stroke-width="1" />
<rect x="1025.5" y="783.5" width="3" height="2.0" fill="#e00000" />
<line x1="1025" y1="783.5" x2="1029" y2="783.5" stroke="#e00000" stroke-width="1" />
<rect x="1029.5" y="783.5" width="3" height="3.0" fill="#e00000" />
<line x1="1029" y1="783.5" x2="1033" y2="783.5" stroke="#e00000" stroke-width="1" />
<rect x="1033.5" y="783.5" width="3" height="1.5" fill="#e00000" />
<line x1="1033" y1="783.5" x2="1037" y2="783.5" stroke="#e00000" stroke-width="1" />
<rect x="1037.5" y="783.5" width="3" height="3.0" fill="#e00000" />
<line x1="1037" y1="783.5" x2="1041" y2="783.5" stroke="#e00000" stroke-width="1" />
<rect x="1041.5" y="783.5" width="3" height="3.0" fill="#e00000" />
<line x1="1041" y1="783.5" x2="1045" y2="783.5" stroke="#e00000" stroke-width="1" />
<rect x="1045.5" y="782.5" width="3" height="1.0" fill="#12999b" />
<line x1="1045" y1="783.5" x2="1049" y2="783.5" stroke="#12999b" stroke-width="1" />
<rect x="1049.5" y="782.5" width="3" height="1.0" fill="#12999b" />
<line x1="1049" y1="783.5" x2="1053" y2="783.5" stroke="#12999b" stroke-width="1" />
<rect x="1053.5" y="783.5" width="3" height="1.5" fill="#e00000" />
<line x1="1053" y1="783.5" x2="1057" y2="783.5" stroke="#e00000" stroke-width="1" />
<rect x="1057.5" y="783.5" width="3" height="1.0" fill="#e00000" />
<line x1="1057" y1="783.5" x2="1061" y2="783.5" stroke="#e00000" stroke-width="1" />
<rect x="1061.5" y="783.5" width="3" height="1.0" fill="#e00000" />
<line x1="1061" y1="783.5" x2="1065" y2="783.5" stroke="#e00000" stroke-width="1" />
<rect x="1065.5" y="782.0" width="3" height="1.5" fill="#12999b" />
<line x1="1065" y1="783.5" x2="1069" y2="783.5" stroke="#12999b" stroke-width="1" />
<rect x="1069.5" y="783.5" width="3" height="4.0" fill="#e00000" />
<line x1="1069" y1="783.5" x2="1073" y2="783.5" stroke="#e00000" stroke-width="1" />
<rect x="1073.5" y="783.5" width="3" height="1.5" fill="#e00000" />
<line x1="1073" y1="783.5" x2="1077" y2="783.5" stroke="#e00000" stroke-width="1" />
<rect x="1077.5" y="783.5" width="3" height="2.5" fill="#e00000" />
<line x1="1077" y1="783.5" x2="1081" y2="783.5" stroke="#e00000" stroke-width="1" />
<rect x="1081.5" y="783.5" width="3" height="2.5" fill="#e00000" />
<line x1="1081" y1="783.5" x2="1085" y2="783.5" stroke="#e00000" stroke-width="1" />
<rect x="1085.5" y="783.5" width="3" height="1.5" fill="#e00000" />
<line x1="1085" y1="783.5" x2="1089" y2="783.5" stroke="#e00000" stroke-width="1" />
<rect x="1089.5" y="783.5" width="3" height="1.0" fill="#e00000" />
<line x1="1089" y1="783.5" x2="1093" y2="783.5" stroke="#e00000" stroke-width="1" />
<rect x="1093.5" y="783.5" width="3" height="1.0" fill="#e00000" />
<line x1="1093" y1="783.5" x2="1097" y2="783.5" stroke="#e00000" stroke-width="1" />
<rect x="1097.5" y="782.0" width="3" height="1.5" fill="#12999b" />
<line x1="1097" y1="783.5" x2="1101" y2="783.5" stroke="#12999b" stroke-width="1" />
<rect x="1101.5" y="783.5" width="3" height="3.0" fill="#e00000" />
<line x1="1101" y1="783.5" x2="1105" y2="783.5" stroke="#e00000" stroke-width="1" />
<rect x="1105.5" y="783.5" width="3" height="3.0" fill="#e00000" />
<line x1="1105" y1="783.5" x2="1109" y2="783.5" stroke="#e00000" stroke-width="1" />
<rect x="1109.5" y="782.5" width="3" height="1.0" fill="#12999b" />
<line x1="1109" y1="783.5" x2="1113" y2="783.5" stroke="#12999b" stroke-width="1" />
<rect x="1113.5" y="783.5" width="3" height="2.5" fill="#e00000" />
<line x1="1113" y1="783.5" x2="1117" y2="783.5" stroke="#e00000" stroke-width="1" />
<line x1="3" y1="854.5" x2="1869" y2="854.5" stroke="#000" stroke-width="1" />
<line x1="7.5" y1="855" x2="7.5" y2="858" stroke="#000" stroke-width="1" />
<line x1="67.5" y1="855" x2="67.5" y2="858" stroke="#000" stroke-width="1" />
<text x="67.5" y="872" font-size="12.5" font-family="'Liberation Sans', sans-serif" fill="#000" text-anchor="middle"  xml:space="preserve">20:05</text>
<line x1="111.3" y1="855" x2="111.3" y2="858" stroke="#000" stroke-width="1" />
<text x="111.3" y="872" font-size="12.5" font-family="'Liberation Sans', sans-serif" fill="#000" text-anchor="middle"  xml:space="preserve">21:00</text>
<line x1="155.3" y1="855" x2="155.3" y2="858" stroke="#000" stroke-width="1" />
<text x="155.3" y="872" font-size="12.5" font-family="'Liberation Sans', sans-serif" fill="#000" text-anchor="middle"  xml:space="preserve">21:55</text>
<line x1="199.3" y1="855" x2="199.3" y2="858" stroke="#000" stroke-width="1" />
<text x="199.3" y="872" font-size="12.5" font-family="'Liberation Sans', sans-serif" fill="#000" text-anchor="middle"  xml:space="preserve">22:50</text>
<line x1="255.3" y1="855" x2="255.3" y2="858" stroke="#000" stroke-width="1" />
<line x1="295.3" y1="855" x2="295.3" y2="858" stroke="#000" stroke-width="1" />
<text x="295.3" y="872" font-size="12.5" font-family="'Liberation Sans', sans-serif" fill="#000" text-anchor="middle"  xml:space="preserve">0:50</text>
<line x1="331.2" y1="855" x2="331.2" y2="858" stroke="#000" stroke-width="1" />
<text x="331.2" y="872" font-size="12.5" font-family="'Liberation Sans', sans-serif" fill="#000" text-anchor="middle"  xml:space="preserve">1:35</text>
<line x1="367.2" y1="855" x2="367.2" y2="858" stroke="#000" stroke-width="1" />
<text x="367.2" y="872" font-size="12.5" font-family="'Liberation Sans', sans-serif" fill="#000" text-anchor="middle"  xml:space="preserve">2:20</text>
<line x1="403.4" y1="855" x2="403.4" y2="858" stroke="#000" stroke-width="1" />
<text x="403.4" y="872" font-size="12.5" font-family="'Liberation Sans', sans-serif" fill="#000" text-anchor="middle"  xml:space="preserve">3:05</text>
<line x1="439.3" y1="855" x2="439.3" y2="858" stroke="#000" stroke-width="1" />
<text x="439.3" y="872" font-size="12.5" font-family="'Liberation Sans', sans-serif" fill="#000" text-anchor="middle"  xml:space="preserve">3:50</text>
<line x1="475.3" y1="855" x2="475.3" y2="858" stroke="#000" stroke-width="1" />
<text x="475.3" y="872" font-size="12.5" font-family="'Liberation Sans', sans-serif" fill="#000" text-anchor="middle"  xml:space="preserve">5:35</text>
<line x1="511.2" y1="855" x2="511.2" y2="858" stroke="#000" stroke-width="1" />
<text x="511.2" y="872" font-size="12.5" font-family="'Liberation Sans', sans-serif" fill="#000" text-anchor="middle"  xml:space="preserve">6:20</text>
<line x1="547.1" y1="855" x2="547.1" y2="858" stroke="#000" stroke-width="1" />
<text x="547.1" y="872" font-size="12.5" font-family="'Liberation Sans', sans-serif" fill="#000" text-anchor="middle"  xml:space="preserve">7:05</text>
<line x1="583.3" y1="855" x2="583.3" y2="858" stroke="#000" stroke-width="1" />
<text x="583.3" y="872" font-size="12.5" font-family="'Liberation Sans', sans-serif" fill="#000" text-anchor="middle"  xml:space="preserve">7:50</text>
<line x1="619.3" y1="855" x2="619.3" y2="858" stroke="#000" stroke-width="1" />
<text x="619.3" y="872" font-size="12.5" font-family="'Liberation Sans', sans-serif" fill="#000" text-anchor="middle"  xml:space="preserve">8:35</text>
<line x1="655.2" y1="855" x2="655.2" y2="858" stroke="#000" stroke-width="1" />
<text x="655.2" y="872" font-size="12.5" font-family="'Liberation Sans', sans-serif" fill="#000" text-anchor="middle"  xml:space="preserve">9:20</text>
<line x1="695.3" y1="855" x2="695.3" y2="858" stroke="#000" stroke-width="1" />
<text x="695.3" y="872" font-size="12.5" font-family="'Liberation Sans', sans-serif" fill="#000" text-anchor="middle"  xml:space="preserve">10:10</text>
<line x1="739.3" y1="855" x2="739.3" y2="858" stroke="#000" stroke-width="1" />
<text x="739.3" y="872" font-size="12.5" font-family="'Liberation Sans', sans-serif" fill="#000" text-anchor="middle"  xml:space="preserve">11:05</text>
<line x1="783.1" y1="855" x2="783.1" y2="858" stroke="#000" stroke-width="1" />
<text x="783.1" y="872" font-size="12.5" font-family="'Liberation Sans', sans-serif" fill="#000" text-anchor="middle"  xml:space="preserve">12:00</text>
<line x1="827.3" y1="855" x2="827.3" y2="858" stroke="#000" stroke-width="1" />
<text x="827.3" y="872" font-size="12.5" font-family="'Liberation Sans', sans-serif" fill="#000" text-anchor="middle"  xml:space="preserve">12:55</text>
<line x1="871.3" y1="855" x2="871.3" y2="858" stroke="#000" stroke-width="1" />
<text x="871.3" y="872" font-size="12.5" font-family="'Liberation Sans', sans-serif" fill="#000" text-anchor="middle"  xml:space="preserve">13:50</text>
<line x1="915" y1="855" x2="915" y2="858" stroke="#000" stroke-width="1" />
<text x="915" y="872" font-size="12.5" font-family="'Liberation Sans', sans-serif" fill="#000" text-anchor="middle"  xml:space="preserve">14:45</text>
<line x1="959" y1="855" x2="959" y2="858" stroke="#000" stroke-width="1" />
<text x="959" y="872" font-size="12.5" font-family="'Liberation Sans', sans-serif" fill="#000" text-anchor="middle"  xml:space="preserve">15:40</text>
<line x1="1003" y1="855" x2="1003" y2="858" stroke="#000" stroke-width="1" />
<text x="1003" y="872" font-size="12.5" font-family="'Liberation Sans', sans-serif" fill="#000" text-anchor="middle"  xml:space="preserve">16:35</text>
<line x1="1047" y1="855" x2="1047" y2="858" stroke="#000" stroke-width="1" />
<text x="1047" y="872" font-size="12.5" font-family="'Liberation Sans', sans-serif" fill="#000" text-anchor="middle"  xml:space="preserve">17:30</text>
<line x1="1118.7" y1="855" x2="1118.7" y2="858" stroke="#000" stroke-width="1" />
<line x1="1159" y1="855" x2="1159" y2="858" stroke="#000" stroke-width="1" />
<text x="1159" y="872" font-size="12.5" font-family="'Liberation Sans', sans-serif" fill="#000" text-anchor="middle"  xml:space="preserve">19:50</text>
<line x1="1203" y1="855" x2="1203" y2="858" stroke="#000" stroke-width="1" />
<text x="1203" y="872" font-size="12.5" font-family="'Liberation Sans', sans-serif" fill="#000" text-anchor="middle"  xml:space="preserve">20:45</text>
<line x1="1247" y1="855" x2="1247" y2="858" stroke="#000" stroke-width="1" />
<text x="1247" y="872" font-size="12.5" font-family="'Liberation Sans', sans-serif" fill="#000" text-anchor="middle"  xml:space="preserve">21:40</text>
<line x1="1291" y1="855" x2="1291" y2="858" stroke="#000" stroke-width="1" />
<text x="1291" y="872" font-size="12.5" font-family="'Liberation Sans', sans-serif" fill="#000" text-anchor="middle"  xml:space="preserve">22:35</text>
<line x1="1359" y1="855" x2="1359" y2="858" stroke="#000" stroke-width="1" />
<line x1="1399" y1="855" x2="1399" y2="858" stroke="#000" stroke-width="1" />
<text x="1399" y="872" font-size="12.5" font-family="'Liberation Sans', sans-serif" fill="#000" text-anchor="middle"  xml:space="preserve">0:50</text>
<line x1="1435" y1="855" x2="1435" y2="858" stroke="#000" stroke-width="1" />
<text x="1435" y="872" font-size="12.5" font-family="'Liberation Sans', sans-serif" fill="#000" text-anchor="middle"  xml:space="preserve">1:35</text>
<line x1="1471" y1="855" x2="1471" y2="858" stroke="#000" stroke-width="1" />
<text x="1471" y="872" font-size="12.5" font-family="'Liberation Sans', sans-serif" fill="#000" text-anchor="middle"  xml:space="preserve">2:20</text>
<line x1="1507" y1="855" x2="1507" y2="858" stroke="#000" stroke-width="1" />
<text x="1507" y="872" font-size="12.5" font-family="'Liberation Sans', sans-serif" fill="#000" text-anchor="middle"  xml:space="preserve">3:05</text>
<line x1="1543" y1="855" x2="1543" y2="858" stroke="#000" stroke-width="1" />
<text x="1543" y="872" font-size="12.5" font-family="'Liberation Sans', sans-serif" fill="#000" text-anchor="middle"  xml:space="preserve">3:50</text>
<line x1="1579" y1="855" x2="1579" y2="858" stroke="#000" stroke-width="1" />
<text x="1579" y="872" font-size="12.5" font-family="'Liberation Sans', sans-serif" fill="#000" text-anchor="middle"  xml:space="preserve">4:35</text>
<line x1="1615" y1="855" x2="1615" y2="858" stroke="#000" stroke-width="1" />
<text x="1615" y="872" font-size="12.5" font-family="'Liberation Sans', sans-serif" fill="#000" text-anchor="middle"  xml:space="preserve">5:20</text>
<line x1="1651" y1="855" x2="1651" y2="858" stroke="#000" stroke-width="1" />
<text x="1651" y="872" font-size="12.5" font-family="'Liberation Sans', sans-serif" fill="#000" text-anchor="middle"  xml:space="preserve">6:05</text>
<line x1="1687" y1="855" x2="1687" y2="858" stroke="#000" stroke-width="1" />
<text x="1687" y="872" font-size="12.5" font-family="'Liberation Sans', sans-serif" fill="#000" text-anchor="middle"  xml:space="preserve">6:50</text>
<rect x="3" y="858" width="35" height="18" fill="#000" />
<text x="4" y="872" font-size="12.5" font-family="'Liberation Sans', sans-serif" fill="#fff" textLength="33" lengthAdjust="spacingAndGlyphs"  xml:space="preserve">3-5-25</text>
<rect x="241" y="858" width="28" height="18" fill="#000" />
<text x="255" y="872" font-size="12.5" font-family="'Liberation Sans', sans-serif" fill="#fff" text-anchor="middle"  xml:space="preserve">5-26</text>
<rect x="1104.6" y="858" width="28" height="18" fill="#000" />
<text x="1118.5" y="872" font-size="12.5" font-family="'Liberation Sans', sans-serif" fill="#fff" text-anchor="middle"  xml:space="preserve">5-28</text>
<rect x="1345" y="858" width="28" height="18" fill="#000" />
<text x="1359" y="872" font-size="12.5" font-family="'Liberation Sans', sans-serif" fill="#fff" text-anchor="middle"  xml:space="preserve">5-29</text>
<rect x="1902.6" y="858" width="14" height="18" fill="#00d000" />
<text x="1909.5" y="872" font-size="12.5" font-family="'Liberation Sans', sans-serif" fill="#000" text-anchor="middle"  xml:space="preserve">3</text>
<rect x="0" y="878" width="1920" height="28" fill="#f0f0f0" />
<text x="4" y="898.7" font-size="14.5" font-family="'Liberation Sans', sans-serif" fill="#000" textLength="96" lengthAdjust="spacingAndGlyphs"  xml:space="preserve">OTL - Scalping</text>
<rect x="104" y="879" width="1" height="27" fill="#a0a0a0" />
<text x="109" y="898.7" font-size="14.5" font-family="'Liberation Sans', sans-serif" fill="#000" textLength="96" lengthAdjust="spacingAndGlyphs"  xml:space="preserve">OTL - Scalping</text>
<rect x="209" y="879" width="1" height="27" fill="#a0a0a0" />
<text x="213" y="898.7" font-size="14.5" font-family="'Liberation Sans', sans-serif" fill="#000" textLength="71" lengthAdjust="spacingAndGlyphs"  xml:space="preserve">TPO - 30m</text>
<rect x="287" y="879" width="1" height="27" fill="#a0a0a0" />
<text x="291" y="898.7" font-size="14.5" font-family="'Liberation Sans', sans-serif" fill="#000" textLength="129" lengthAdjust="spacingAndGlyphs"  xml:space="preserve">TPO - Spilit Session</text>
<rect x="423" y="879" width="1" height="27" fill="#a0a0a0" />
<text x="427" y="898.7" font-size="14.5" font-family="'Liberation Sans', sans-serif" fill="#000" textLength="99" lengthAdjust="spacingAndGlyphs"  xml:space="preserve">TPO - Daily NY</text>
<rect x="530" y="879" width="1" height="27" fill="#a0a0a0" />
<text x="534" y="898.7" font-size="14.5" font-family="'Liberation Sans', sans-serif" fill="#000" textLength="134" lengthAdjust="spacingAndGlyphs"  xml:space="preserve">BigTrade - 1m - asia</text>
<rect x="672" y="879" width="1" height="27" fill="#a0a0a0" />
<text x="677" y="898.7" font-size="14.5" font-family="'Liberation Sans', sans-serif" fill="#000" textLength="138" lengthAdjust="spacingAndGlyphs"  xml:space="preserve">BigTrade - 1m - Euro</text>
<rect x="819" y="879" width="1" height="27" fill="#a0a0a0" />
<rect x="819.5" y="879.5" width="138" height="26.5" fill="#0078d7" />
<text x="823" y="898.7" font-size="14.5" font-family="'Liberation Sans', sans-serif" fill="#fff" textLength="131" lengthAdjust="spacingAndGlyphs"  xml:space="preserve">BigTrade - 1m - usa</text>
<defs><filter id="shd" x="-15%" y="-15%" width="130%" height="130%"><feGaussianBlur stdDeviation="7.5"/></filter></defs>
<rect x="1262" y="16" width="555" height="643" fill="rgba(0,0,0,0.40)" filter="url(#shd)"/>
<rect x="1263" y="13" width="553" height="639" fill="#f0f0f0" />
<rect x="1263" y="13" width="553" height="108" fill="#ffffff" />
<rect x="1272.5" y="24.5" width="18" height="14" fill="#f4f4f4" stroke="#8a8a8a" stroke-width="1"/>
<defs><linearGradient id="ig" x1="0" y1="0" x2="0" y2="1"><stop offset="0" stop-color="#3a7ab8"/><stop offset="1" stop-color="#4aa860"/></linearGradient></defs>
<rect x="1274" y="26" width="8" height="11" fill="url(#ig)" />
<rect x="1288" y="26" width="1" height="5" fill="#2a9a5a" />
<text x="1297" y="37.4" font-size="15" font-family="'Liberation Sans', sans-serif" fill="#000" textLength="334.8" lengthAdjust="spacingAndGlyphs"  xml:space="preserve">Chart Settings | GCM23-COMEX[M]  5 Min   #4 | C...</text>
<line x1="1663" y1="30.5" x2="1675" y2="30.5" stroke="#c8c8c8" stroke-width="1" />
<rect x="1721.5" y="25.5" width="11" height="11" fill="none" stroke="#000" stroke-width="1"/>
<line x1="1780" y1="25" x2="1792" y2="37" stroke="#000" stroke-width="1.1" />
<line x1="1792" y1="25" x2="1780" y2="37" stroke="#000" stroke-width="1.1" />
<text x="1270.3" y="68" font-size="15" font-family="'Liberation Sans', sans-serif" fill="#000" textLength="58.40000000000009" lengthAdjust="spacingAndGlyphs"  xml:space="preserve">[Symbol]</text>
<text x="1344.2" y="68" font-size="15" font-family="'Liberation Sans', sans-serif" fill="#000" textLength="99.0" lengthAdjust="spacingAndGlyphs"  xml:space="preserve">[Data Limiting]</text>
<text x="1458.6" y="68" font-size="15" font-family="'Liberation Sans', sans-serif" fill="#000" textLength="76.40000000000009" lengthAdjust="spacingAndGlyphs"  xml:space="preserve">[Bar Period]</text>
<text x="1550.4" y="68" font-size="15" font-family="'Liberation Sans', sans-serif" fill="#000" textLength="106.59999999999991" lengthAdjust="spacingAndGlyphs"  xml:space="preserve">[*Session Times]</text>
<text x="1672.4" y="68" font-size="15" font-family="'Liberation Sans', sans-serif" fill="#000" textLength="57.399999999999864" lengthAdjust="spacingAndGlyphs"  xml:space="preserve">[Display]</text>
<text x="1745.2" y="68" font-size="15" font-family="'Liberation Sans', sans-serif" fill="#000" textLength="36.399999999999864" lengthAdjust="spacingAndGlyphs"  xml:space="preserve">[Grid]</text>
<text x="1270.3" y="92" font-size="15" font-family="'Liberation Sans', sans-serif" fill="#000" textLength="58.40000000000009" lengthAdjust="spacingAndGlyphs"  xml:space="preserve">[Trading]</text>
<text x="1344.2" y="92" font-size="15" font-family="'Liberation Sans', sans-serif" fill="#000" textLength="56.0" lengthAdjust="spacingAndGlyphs"  xml:space="preserve">[Linking]</text>
<text x="1415.3" y="92" font-size="15" font-family="'Liberation Sans', sans-serif" fill="#000" textLength="43.299999999999955" lengthAdjust="spacingAndGlyphs"  xml:space="preserve">[Scale]</text>
<text x="1474.8" y="92" font-size="15" font-family="'Liberation Sans', sans-serif" fill="#000" textLength="61.200000000000045" lengthAdjust="spacingAndGlyphs"  xml:space="preserve">[Regions]</text>
<text x="1551.4" y="92" font-size="15" font-family="'Liberation Sans', sans-serif" fill="#000" textLength="99.59999999999991" lengthAdjust="spacingAndGlyphs"  xml:space="preserve">[Market Depth]</text>
<text x="1666.2" y="92" font-size="15" font-family="'Liberation Sans', sans-serif" fill="#000" textLength="110.0" lengthAdjust="spacingAndGlyphs"  xml:space="preserve">[Chart Drawings]</text>
<text x="1270.3" y="116" font-size="15" font-family="'Liberation Sans', sans-serif" fill="#000" textLength="79.70000000000005" lengthAdjust="spacingAndGlyphs"  xml:space="preserve">[Chart Data]</text>
<text x="1365.5" y="116" font-size="15" font-family="'Liberation Sans', sans-serif" fill="#000" textLength="91.5" lengthAdjust="spacingAndGlyphs"  xml:space="preserve">[Performance]</text>
<text x="1472.4" y="116" font-size="15" font-family="'Liberation Sans', sans-serif" fill="#000" textLength="40.899999999999864" lengthAdjust="spacingAndGlyphs"  xml:space="preserve">[Alert]</text>
<text x="1528" y="116" font-size="15" font-family="'Liberation Sans', sans-serif" fill="#000" textLength="31.700000000000045" lengthAdjust="spacingAndGlyphs"  xml:space="preserve">View</text>
<rect x="1273.5" y="123.5" width="531" height="26" fill="#ffffff" stroke="#7a7a7a" stroke-width="1"/>
<line x1="1274" y1="149" x2="1804" y2="149" stroke="#e0e0e0" stroke-width="1" />
<text x="1280.9" y="142.2" font-size="14.5" font-family="'Liberation Sans', sans-serif" fill="#000" textLength="111.4" lengthAdjust="spacingAndGlyphs"  xml:space="preserve">Enter Search Text</text>
<rect x="1783.5" y="124.5" width="20" height="24" fill="#f0f0f0" stroke="#adadad" stroke-width="1"/>
<path d="M1788.5,134 L1797.5,134 L1793,139 Z" fill="#000"/>
<rect x="1273.5" y="163.5" width="532" height="439" fill="#f0f0f0" stroke="#a0a0a0" stroke-width="1"/>
<rect x="1274" y="164" width="510" height="30" fill="#f0f0f0" />
<line x1="1434.5" y1="164" x2="1434.5" y2="194" stroke="#c8c8c8" stroke-width="1" />
<text x="1278.9" y="185" font-size="14.5" font-family="'Liberation Sans', sans-serif" fill="#000" textLength="90.4" lengthAdjust="spacingAndGlyphs"  xml:space="preserve">Setting Name</text>
<text x="1438.7" y="185" font-size="14.5" font-family="'Liberation Sans', sans-serif" fill="#000" textLength="36.1" lengthAdjust="spacingAndGlyphs"  xml:space="preserve">Value</text>
<defs><clipPath id="namecol"><rect x="1274" y="160" width="160" height="450"/></clipPath><clipPath id="valcol"><rect x="1274" y="160" width="510" height="442"/></clipPath></defs>
<g clip-path="url(#valcol)">
<rect x="1274" y="194" width="510" height="408" fill="#000" />
<rect x="1274" y="194.5" width="510" height="23" fill="#808080" />
<text x="1277.4" y="211.8" font-size="14.5" font-family="'Liberation Sans', sans-serif" fill="#ffffff"  xml:space="preserve">Intraday Chart Session T</text>
<line x1="1274" y1="218.0" x2="1784" y2="218.0" stroke="#a0a0a0" stroke-width="1" />
<line x1="1434.5" y1="218.5" x2="1434.5" y2="241.5" stroke="#a0a0a0" stroke-width="1" />
<g clip-path="url(#namecol)">
<text x="1277.2" y="235.8" font-size="14.5" font-family="'Liberation Sans', sans-serif" fill="#ffffff" textLength="120.3" lengthAdjust="spacingAndGlyphs"  xml:space="preserve">Session Start Time</text>
</g>
<text x="1437.5" y="235.8" font-size="14.5" font-family="'Liberation Sans', sans-serif" fill="#ffffff" textLength="53.3" lengthAdjust="spacingAndGlyphs"  xml:space="preserve">19:00:00</text>
<line x1="1274" y1="242.0" x2="1784" y2="242.0" stroke="#a0a0a0" stroke-width="1" />
<line x1="1434.5" y1="242.5" x2="1434.5" y2="265.5" stroke="#a0a0a0" stroke-width="1" />
<g clip-path="url(#namecol)">
<text x="1277.2" y="259.8" font-size="14.5" font-family="'Liberation Sans', sans-serif" fill="#ffffff" textLength="114.4" lengthAdjust="spacingAndGlyphs"  xml:space="preserve">Session End Time</text>
</g>
<text x="1437.5" y="259.8" font-size="14.5" font-family="'Liberation Sans', sans-serif" fill="#ffffff" textLength="53.3" lengthAdjust="spacingAndGlyphs"  xml:space="preserve">18:59:59</text>
<line x1="1274" y1="266.0" x2="1784" y2="266.0" stroke="#a0a0a0" stroke-width="1" />
<g clip-path="url(#namecol)">
</g>
<line x1="1274" y1="290.0" x2="1784" y2="290.0" stroke="#a0a0a0" stroke-width="1" />
<line x1="1434.5" y1="290.5" x2="1434.5" y2="313.5" stroke="#a0a0a0" stroke-width="1" />
<g clip-path="url(#namecol)">
<text x="1277.2" y="307.8" font-size="14.5" font-family="'Liberation Sans', sans-serif" fill="#ffffff" textLength="133" lengthAdjust="spacingAndGlyphs"  xml:space="preserve">Use Evening Session</text>
</g>
<text x="1437.5" y="307.8" font-size="14.5" font-family="'Liberation Sans', sans-serif" fill="#ffffff" textLength="19.7" lengthAdjust="spacingAndGlyphs"  xml:space="preserve">No</text>
<line x1="1274" y1="314.0" x2="1784" y2="314.0" stroke="#a0a0a0" stroke-width="1" />
<line x1="1434.5" y1="314.5" x2="1434.5" y2="337.5" stroke="#a0a0a0" stroke-width="1" />
<g clip-path="url(#namecol)">
<text x="1277.2" y="331.8" font-size="14.5" font-family="'Liberation Sans', sans-serif" fill="#ffffff" textLength="123.7" lengthAdjust="spacingAndGlyphs"  xml:space="preserve">Evening Start Time</text>
</g>
<text x="1437.5" y="331.8" font-size="14.5" font-family="'Liberation Sans', sans-serif" fill="#ffffff" textLength="54" lengthAdjust="spacingAndGlyphs"  xml:space="preserve">06:00:00</text>
<line x1="1274" y1="338.0" x2="1784" y2="338.0" stroke="#a0a0a0" stroke-width="1" />
<line x1="1434.5" y1="338.5" x2="1434.5" y2="361.5" stroke="#a0a0a0" stroke-width="1" />
<g clip-path="url(#namecol)">
<text x="1277.2" y="355.8" font-size="14.5" font-family="'Liberation Sans', sans-serif" fill="#ffffff" textLength="117.8" lengthAdjust="spacingAndGlyphs"  xml:space="preserve">Evening End Time</text>
</g>
<text x="1437.5" y="355.8" font-size="14.5" font-family="'Liberation Sans', sans-serif" fill="#ffffff" textLength="54" lengthAdjust="spacingAndGlyphs"  xml:space="preserve">21:29:59</text>
<line x1="1274" y1="362.0" x2="1784" y2="362.0" stroke="#a0a0a0" stroke-width="1" />
<g clip-path="url(#namecol)">
</g>
<line x1="1274" y1="386.0" x2="1784" y2="386.0" stroke="#a0a0a0" stroke-width="1" />
<line x1="1434.5" y1="386.5" x2="1434.5" y2="409.5" stroke="#a0a0a0" stroke-width="1" />
<g clip-path="url(#namecol)">
<text x="1277.2" y="403.8" font-size="14.5" font-family="'Liberation Sans', sans-serif" fill="#ffffff" transform="translate(1277.2,0) scale(0.99,1) translate(-1277.2,0)" xml:space="preserve">New Bar At Session Start</text>
</g>
<text x="1437.5" y="403.8" font-size="14.5" font-family="'Liberation Sans', sans-serif" fill="#ffffff" textLength="19.7" lengthAdjust="spacingAndGlyphs"  xml:space="preserve">No</text>
<line x1="1274" y1="410.0" x2="1784" y2="410.0" stroke="#a0a0a0" stroke-width="1" />
<line x1="1434.5" y1="410.5" x2="1434.5" y2="433.5" stroke="#a0a0a0" stroke-width="1" />
<g clip-path="url(#namecol)">
<text x="1277.2" y="427.8" font-size="14.5" font-family="'Liberation Sans', sans-serif" fill="#ffffff" textLength="133" lengthAdjust="spacingAndGlyphs"  xml:space="preserve">Weekend Data (List)</text>
</g>
<text x="1437.5" y="427.8" font-size="14.5" font-family="'Liberation Sans', sans-serif" fill="#ffffff" textLength="186.6" lengthAdjust="spacingAndGlyphs"  xml:space="preserve">Do Not Load Weekend Data</text>
<line x1="1274" y1="434.0" x2="1784" y2="434.0" stroke="#a0a0a0" stroke-width="1" />
<line x1="1434.5" y1="434.5" x2="1434.5" y2="457.5" stroke="#a0a0a0" stroke-width="1" />
<g clip-path="url(#namecol)">
<text x="1277.2" y="451.8" font-size="14.5" font-family="'Liberation Sans', sans-serif" fill="#ffffff" transform="translate(1277.2,0) scale(0.99,1) translate(-1277.2,0)" xml:space="preserve">Apply Intraday Session Times</text>
</g>
<text x="1437.5" y="451.8" font-size="14.5" font-family="'Liberation Sans', sans-serif" fill="#ffffff" textLength="19.7" lengthAdjust="spacingAndGlyphs"  xml:space="preserve">No</text>
<line x1="1274" y1="458.0" x2="1784" y2="458.0" stroke="#a0a0a0" stroke-width="1" />
<line x1="1434.5" y1="458.5" x2="1434.5" y2="481.5" stroke="#a0a0a0" stroke-width="1" />
<g clip-path="url(#namecol)">
<text x="1277.2" y="475.8" font-size="14.5" font-family="'Liberation Sans', sans-serif" fill="#ffffff" textLength="141.7" lengthAdjust="spacingAndGlyphs"  xml:space="preserve">Chart Data Type (List)</text>
</g>
<text x="1437.5" y="475.8" font-size="14.5" font-family="'Liberation Sans', sans-serif" fill="#ffffff" textLength="127" lengthAdjust="spacingAndGlyphs"  xml:space="preserve">Intraday Chart Only</text>
<line x1="1274" y1="482.0" x2="1784" y2="482.0" stroke="#a0a0a0" stroke-width="1" />
<g clip-path="url(#namecol)">
</g>
<line x1="1274" y1="506.0" x2="1784" y2="506.0" stroke="#a0a0a0" stroke-width="1" />
<rect x="1274" y="506.5" width="510" height="23" fill="#808080" />
<text x="1277.4" y="523.8" font-size="14.5" font-family="'Liberation Sans', sans-serif" fill="#ffffff" textLength="71.3" lengthAdjust="spacingAndGlyphs"  xml:space="preserve">Time Zone</text>
<line x1="1274" y1="530.0" x2="1784" y2="530.0" stroke="#a0a0a0" stroke-width="1" />
<line x1="1434.5" y1="530.5" x2="1434.5" y2="553.5" stroke="#a0a0a0" stroke-width="1" />
<g clip-path="url(#namecol)">
<text x="1277.2" y="547.8" font-size="14.5" font-family="'Liberation Sans', sans-serif" fill="#ffffff" textLength="107" lengthAdjust="spacingAndGlyphs"  xml:space="preserve">Time Zone (List)</text>
</g>
<text x="1437.5" y="547.8" font-size="14.5" font-family="'Liberation Sans', sans-serif" fill="#ffffff" textLength="107.8" lengthAdjust="spacingAndGlyphs"  xml:space="preserve">Jakarta (+7 WIT)</text>
<line x1="1274" y1="554.0" x2="1784" y2="554.0" stroke="#a0a0a0" stroke-width="1" />
<rect x="1274" y="554.5" width="160" height="23" fill="#2b2b2b" />
<rect x="1435" y="554.5" width="349" height="23" fill="#808080" />
<line x1="1434.5" y1="554.5" x2="1434.5" y2="577.5" stroke="#a0a0a0" stroke-width="1" />
<g clip-path="url(#namecol)">
<text x="1281" y="571.8" font-size="14.5" font-family="'Liberation Sans', sans-serif" fill="#808080" textLength="108.6" lengthAdjust="spacingAndGlyphs"  xml:space="preserve">(Inactive button)</text>
</g>
<text x="1437.5" y="571.8" font-size="14.5" font-family="'Liberation Sans', sans-serif" fill="#000" transform="translate(1437.5,0) scale(1.03,1) translate(-1437.5,0)" xml:space="preserve">[Set Custom Time Zone (For Other/Custom Time Zone)]</text>
<line x1="1274" y1="578.0" x2="1784" y2="578.0" stroke="#a0a0a0" stroke-width="1" />
<g clip-path="url(#namecol)">
</g>
<line x1="1274" y1="602.0" x2="1784" y2="602.0" stroke="#a0a0a0" stroke-width="1" />
</g>
<rect x="1784" y="164" width="21" height="438" fill="#f0f0f0" />
<path d="M1789,180 L1794,175 L1799,180" fill="none" stroke="#606060" stroke-width="1.3"/>
<rect x="1785" y="185" width="19" height="21" fill="#cdcdcd" />
<path d="M1789,587 L1794,592 L1799,587" fill="none" stroke="#606060" stroke-width="1.3"/>
<rect x="1274.0" y="602" width="105" height="39" fill="#f0f0f0" />
<line x1="1274.0" y1="641" x2="1379.0" y2="641" stroke="#696969" stroke-width="1.5" />
<line x1="1378.5" y1="603" x2="1378.5" y2="641" stroke="#696969" stroke-width="1" />
<line x1="1274.0" y1="602.5" x2="1378.0" y2="602.5" stroke="#ffffff" stroke-width="1" />
<line x1="1274.5" y1="602" x2="1274.5" y2="641" stroke="#ffffff" stroke-width="1" />
<text x="1316.25" y="627.2" font-size="14.5" font-family="'Liberation Sans', sans-serif" fill="#000" textLength="20.5" lengthAdjust="spacingAndGlyphs"  xml:space="preserve">OK</text>
<rect x="1379.6" y="602" width="105" height="39" fill="#f0f0f0" />
<line x1="1379.6" y1="641" x2="1484.6" y2="641" stroke="#696969" stroke-width="1.5" />
<line x1="1484.1" y1="603" x2="1484.1" y2="641" stroke="#696969" stroke-width="1" />
<line x1="1379.6" y1="602.5" x2="1483.6" y2="602.5" stroke="#ffffff" stroke-width="1" />
<line x1="1380.1" y1="602" x2="1380.1" y2="641" stroke="#ffffff" stroke-width="1" />
<text x="1410.1" y="627.2" font-size="14.5" font-family="'Liberation Sans', sans-serif" fill="#000" textLength="44" lengthAdjust="spacingAndGlyphs"  xml:space="preserve">Cancel</text>
<rect x="1485.2" y="602" width="105" height="39" fill="#f0f0f0" />
<line x1="1485.2" y1="641" x2="1590.2" y2="641" stroke="#696969" stroke-width="1.5" />
<line x1="1589.7" y1="603" x2="1589.7" y2="641" stroke="#696969" stroke-width="1" />
<line x1="1485.2" y1="602.5" x2="1589.2" y2="602.5" stroke="#ffffff" stroke-width="1" />
<line x1="1485.7" y1="602" x2="1485.7" y2="641" stroke="#ffffff" stroke-width="1" />
<text x="1506.05" y="627.2" font-size="14.5" font-family="'Liberation Sans', sans-serif" fill="#000" textLength="63.3" lengthAdjust="spacingAndGlyphs"  xml:space="preserve">Revert All</text>
<rect x="1590.8" y="602" width="105" height="39" fill="#f0f0f0" />
<line x1="1590.8" y1="641" x2="1695.8" y2="641" stroke="#696969" stroke-width="1.5" />
<line x1="1695.3" y1="603" x2="1695.3" y2="641" stroke="#696969" stroke-width="1" />
<line x1="1590.8" y1="602.5" x2="1694.8" y2="602.5" stroke="#ffffff" stroke-width="1" />
<line x1="1591.3" y1="602" x2="1591.3" y2="641" stroke="#ffffff" stroke-width="1" />
<text x="1613.1" y="627.2" font-size="14.5" font-family="'Liberation Sans', sans-serif" fill="#000" textLength="60.4" lengthAdjust="spacingAndGlyphs"  xml:space="preserve">Apply All</text>
<rect x="1696.4" y="602" width="105" height="39" fill="#f0f0f0" />
<line x1="1696.4" y1="641" x2="1801.4" y2="641" stroke="#696969" stroke-width="1.5" />
<line x1="1800.9" y1="603" x2="1800.9" y2="641" stroke="#696969" stroke-width="1" />
<line x1="1696.4" y1="602.5" x2="1800.4" y2="602.5" stroke="#ffffff" stroke-width="1" />
<line x1="1696.9" y1="602" x2="1696.9" y2="641" stroke="#ffffff" stroke-width="1" />
<text x="1733.4" y="627.2" font-size="14.5" font-family="'Liberation Sans', sans-serif" fill="#000" textLength="31" lengthAdjust="spacingAndGlyphs"  xml:space="preserve">Help</text>
</svg>
</body></html>
